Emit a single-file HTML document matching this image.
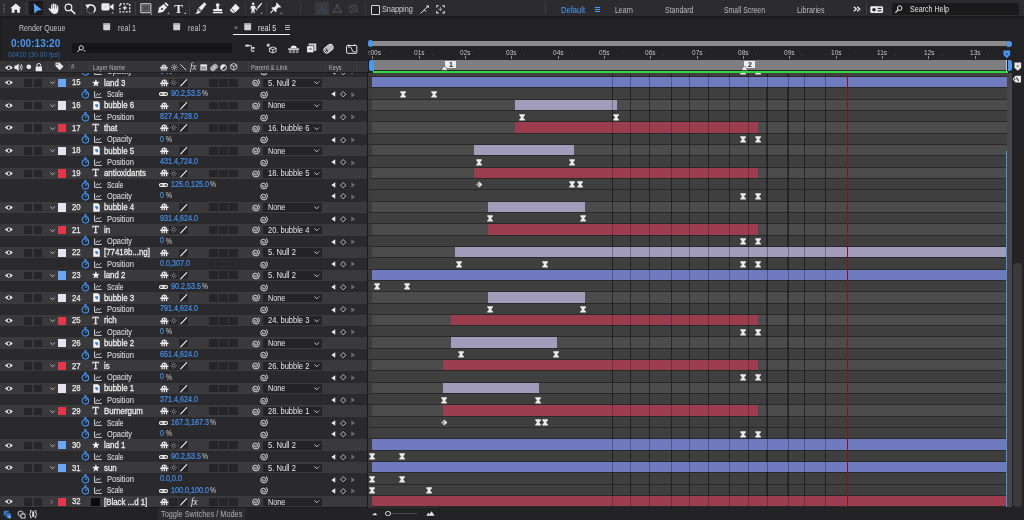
<!DOCTYPE html>
<html><head><meta charset="utf-8"><title>AE</title>
<style>
html,body{margin:0;padding:0;}
body{width:1024px;height:520px;overflow:hidden;background:#232325;position:relative;font-family:"Liberation Sans",sans-serif;}
#w{position:absolute;left:0;top:0;width:1024px;height:520px;will-change:transform;}
.b{position:absolute;display:block;}
.t{position:absolute;display:block;white-space:nowrap;transform-origin:0 50%;}
svg{overflow:visible}
</style></head><body><div id="w">
<div class="b" style="left:0.00px;top:0.00px;width:1024.00px;height:16.00px;background:#2c2c2e;"></div>
<div class="b" style="left:0.00px;top:15.80px;width:1024.00px;height:2.10px;background:#1b1b1d;"></div>
<div class="b" style="left:0.00px;top:17.90px;width:0.90px;height:490.00px;background:#1d1d1f;"></div>
<div class="b" style="left:2.60px;top:3.50px;width:0.80px;height:0.90px;background:#5a5a5a;"></div>
<div class="b" style="left:4.20px;top:3.50px;width:0.80px;height:0.90px;background:#5a5a5a;"></div>
<div class="b" style="left:2.60px;top:5.50px;width:0.80px;height:0.90px;background:#5a5a5a;"></div>
<div class="b" style="left:4.20px;top:5.50px;width:0.80px;height:0.90px;background:#5a5a5a;"></div>
<div class="b" style="left:2.60px;top:7.50px;width:0.80px;height:0.90px;background:#5a5a5a;"></div>
<div class="b" style="left:4.20px;top:7.50px;width:0.80px;height:0.90px;background:#5a5a5a;"></div>
<div class="b" style="left:2.60px;top:9.50px;width:0.80px;height:0.90px;background:#5a5a5a;"></div>
<div class="b" style="left:4.20px;top:9.50px;width:0.80px;height:0.90px;background:#5a5a5a;"></div>
<div class="b" style="left:2.60px;top:11.50px;width:0.80px;height:0.90px;background:#5a5a5a;"></div>
<div class="b" style="left:4.20px;top:11.50px;width:0.80px;height:0.90px;background:#5a5a5a;"></div>
<div class="b" style="left:25.80px;top:2.00px;width:0.90px;height:12.50px;background:#3c3c3e;"></div>
<div class="b" style="left:80.50px;top:2.00px;width:0.90px;height:12.50px;background:#3c3c3e;"></div>
<div class="b" style="left:134.60px;top:2.00px;width:0.90px;height:12.50px;background:#3c3c3e;"></div>
<div class="b" style="left:189.40px;top:2.00px;width:0.90px;height:12.50px;background:#3c3c3e;"></div>
<div class="b" style="left:244.80px;top:2.00px;width:0.90px;height:12.50px;background:#3c3c3e;"></div>
<div class="b" style="left:266.00px;top:2.00px;width:0.90px;height:12.50px;background:#3c3c3e;"></div>
<div class="b" style="left:300.00px;top:2.00px;width:0.90px;height:12.50px;background:#3c3c3e;"></div>
<div class="b" style="left:365.00px;top:2.00px;width:0.90px;height:12.50px;background:#3c3c3e;"></div>
<div class="b" style="left:545.00px;top:2.00px;width:0.90px;height:12.50px;background:#3c3c3e;"></div>
<div class="b" style="left:866.30px;top:2.00px;width:0.90px;height:12.50px;background:#3c3c3e;"></div>
<svg class="b" style="left:9.70px;top:3.30px" width="11.6" height="10" viewBox="0 0 20 19" preserveAspectRatio="none"><path d="M10 1L19.5 10H17V18.5H12.2V12.8H7.8V18.5H3V10H0.5Z" fill="#ececec"/></svg>
<div class="b" style="left:29.40px;top:1.40px;width:13.80px;height:13.60px;background:#19191b;"></div>
<svg class="b" style="left:32.60px;top:2.70px" width="9.4" height="11" viewBox="0 0 14 15" preserveAspectRatio="none"><path d="M1 0.4L13.6 9.6L7 10.2L2.2 14.6Z" fill="#58a4f8"/></svg>
<svg class="b" style="left:48.00px;top:2.50px" width="10.8" height="11.4" viewBox="0 0 13 15" preserveAspectRatio="none"><rect x="3.7" y="1.8" width="1.8" height="7.4" rx="0.9" fill="#ececec"/><rect x="6" y="0.4" width="1.8" height="8.6" rx="0.9" fill="#ececec"/><rect x="8.3" y="1.2" width="1.8" height="8" rx="0.9" fill="#ececec"/><rect x="10.6" y="3.2" width="1.7" height="6.4" rx="0.85" fill="#ececec"/><path d="M3.7 7.4H12.3V10.6Q11.6 14.6 7.8 14.6Q5.2 14.6 3.9 12.2L0.9 8.4Q0.2 7 1.5 6.6Q2.5 6.5 3.7 8.6Z" fill="#ececec"/></svg>
<svg class="b" style="left:64.00px;top:2.70px" width="11.6" height="11.4" viewBox="0 0 14 14" preserveAspectRatio="none"><circle cx="5.4" cy="5.4" r="4" fill="none" stroke="#ececec" stroke-width="1.5"/><path d="M8.4 8.4L13 13" stroke="#ececec" stroke-width="1.9" stroke-linecap="round"/></svg>
<svg class="b" style="left:85.30px;top:2.50px" width="11.8" height="11.6" viewBox="0 0 14 14" preserveAspectRatio="none"><path d="M2.67 4.90A5 5 0 1 1 10.21 11.23" fill="none" stroke="#ececec" stroke-width="1.9"/><path d="M8.71 12.10A5 5 0 0 1 2.30 5.69" fill="none" stroke="#9a9a9a" stroke-width="1.3" stroke-dasharray="1.2 1.2"/><path d="M0.2 2.2L6 1.4L3.4 7Z" fill="#ececec"/></svg>
<svg class="b" style="left:100.90px;top:2.40px" width="13" height="12.2" viewBox="0 0 15 14.4" preserveAspectRatio="none"><rect x="0.5" y="1.5" width="9.4" height="8.4" rx="1.6" fill="#ececec"/><path d="M9.6 5.7L14.5 1.8V9.6Z" fill="#ececec"/><path d="M2.6 8L7.6 3.4" stroke="#bdbdbd" stroke-width="0.9"/><path d="M12 13.5H14.2V11.3Z" fill="#bbb"/></svg>
<svg class="b" style="left:119.20px;top:3.10px" width="11.6" height="9.8" viewBox="0 0 13 11" preserveAspectRatio="none"><rect x="1" y="1" width="11" height="9" fill="none" stroke="#ececec" stroke-width="1.5" stroke-dasharray="2.2 1.5"/><path d="M6.5 3.2V7.8M4.2 5.5H8.8" stroke="#ececec" stroke-width="1.3"/></svg>
<svg class="b" style="left:140.20px;top:2.80px" width="12.4" height="12.2" viewBox="0 0 14 14.2" preserveAspectRatio="none"><rect x="0.8" y="0.8" width="11.4" height="10.4" rx="1" fill="#4a4a4c" stroke="#b4b4b4" stroke-width="1.5"/><rect x="3.2" y="3.2" width="6.6" height="5.6" fill="none" stroke="#707072" stroke-width="0.9"/><path d="M11.5 13.6H13.6V11.5Z" fill="#bbb"/></svg>
<svg class="b" style="left:157.00px;top:2.10px" width="12.4" height="12.6" viewBox="0 0 14 14.2" preserveAspectRatio="none"><path d="M1 12.4L2.2 6.6L7.6 2.2L11.2 5.8L6.8 11.2Z" fill="#ececec"/><path d="M8.4 1.5L10 0.2L13.2 3.4L11.9 5Z" fill="#ececec"/><circle cx="5.6" cy="8" r="1.1" fill="#2c2c2e"/><path d="M11.5 13.6H13.6V11.5Z" fill="#bbb"/></svg>
<span class="t" style="left:174.30px;top:0.70px;font-size:13px;line-height:15.60px;color:#ececec;transform:scaleX(1.0000);font-weight:700;font-family:'Liberation Serif',serif;">T</span>
<svg class="b" style="left:184.20px;top:12.40px" width="2" height="2" viewBox="0 0 2.2 2.2" preserveAspectRatio="none"><path d="M0 2.2H2.2V0Z" fill="#bbb"/></svg>
<svg class="b" style="left:194.80px;top:2.40px" width="11.6" height="12" viewBox="0 0 14.2 14.2" preserveAspectRatio="none"><path d="M11.6 0.3L13.9 2.6L8 10.4L4.4 6.8Z" fill="#ececec"/><path d="M3.6 7.6L7.2 11.2Q5.8 14 0.4 14Q3.2 11.6 3.6 7.6Z" fill="#ececec"/><circle cx="5" cy="10.4" r="0.8" fill="#2c2c2e"/></svg>
<svg class="b" style="left:211.50px;top:2.90px" width="11.4" height="10.6" viewBox="0 0 14 13" preserveAspectRatio="none"><circle cx="7" cy="2.6" r="2.3" fill="#ececec"/><path d="M6 4H8L8.6 7.4H12.4V10H1.6V7.4H5.4Z" fill="#ececec"/><rect x="1" y="11" width="12" height="1.6" fill="#ececec"/></svg>
<svg class="b" style="left:229.00px;top:2.90px" width="11.2" height="10.6" viewBox="0 0 14 13" preserveAspectRatio="none"><path d="M8.2 0.8L13.4 6L7.4 12H4L0.8 8.6Z" fill="#ececec"/><path d="M2.6 6.6L7.6 11.6" stroke="#2c2c2e" stroke-width="1.1"/></svg>
<svg class="b" style="left:249.70px;top:2.30px" width="12.6" height="12.2" viewBox="0 0 14.4 14" preserveAspectRatio="none"><circle cx="3.6" cy="2" r="1.5" fill="#ececec"/><path d="M1.4 4.2H5.8L6.8 8L5.6 8.4L5 6.4L5.4 13H4.2L3.6 9.4L2.6 13H1.4L2.2 6.4L1.4 8L0.4 7.6Z" fill="#ececec"/><path d="M13 0.8L14 1.8L9.6 7.4L8.2 6Z" fill="#ececec"/><path d="M7.8 6.6L9 7.8Q8.6 9.6 6.4 10Q7.4 8.6 7.8 6.6Z" fill="#ececec"/><path d="M12 13.6H14V11.6Z" fill="#bbb"/></svg>
<svg class="b" style="left:269.90px;top:2.20px" width="12" height="12.4" viewBox="0 0 13.6 14" preserveAspectRatio="none"><path d="M7.6 0.6L12.6 5.6L11.4 6.4L9.8 6L7.4 8.4L7.4 10.8L6.4 11.6L1.6 6.8L2.4 5.8L4.8 5.8L7.2 3.4L6.8 1.8Z" fill="#ececec"/><path d="M3.6 9.2L0.6 12.6" stroke="#ececec" stroke-width="1.2"/><path d="M11.4 13.6H13.4V11.6Z" fill="#bbb"/></svg>
<div class="b" style="left:314.70px;top:1.60px;width:13.90px;height:13.40px;background:#39393c;"></div>
<svg class="b" style="left:316.55px;top:3.60px" width="10.5" height="9.6" viewBox="0 0 14 12.6" preserveAspectRatio="none"><path d="M7 1V7.5L1.4 11.4M7 7.5L12.6 11.4" fill="none" stroke="#2b4f80" stroke-width="1.2"/></svg>
<svg class="b" style="left:331.75px;top:3.60px" width="10.5" height="9.6" viewBox="0 0 14 12.6" preserveAspectRatio="none"><path d="M7 1.2L1.6 10.6H12.4Z" fill="none" stroke="#56565a" stroke-width="1.1"/><circle cx="7" cy="1.6" r="1.2" fill="#56565a"/><circle cx="1.8" cy="10.6" r="1.2" fill="#56565a"/><circle cx="12.2" cy="10.6" r="1.2" fill="#56565a"/><path d="M7 3V7" stroke="#56565a" stroke-width="1"/></svg>
<svg class="b" style="left:347.75px;top:3.60px" width="10.5" height="9.6" viewBox="0 0 14 12.6" preserveAspectRatio="none"><path d="M1.4 2.4L11 1.2L12.6 9.4L3.4 11.4Z M1.4 2.4L12.6 9.4M11 1.2L3.4 11.4" fill="none" stroke="#4c4c50" stroke-width="1.1"/></svg>
<div class="b" style="left:371px;top:5.4px;width:7px;height:7.2px;border:1.1px solid #d8d8d8;border-radius:1px;background:#202022"></div>
<span class="t" style="left:381.60px;top:4.42px;font-size:8.8px;line-height:10.56px;color:#d0d0d0;transform:scaleX(0.8282);">Snapping</span>
<svg class="b" style="left:419.70px;top:4.80px" width="9.4" height="9.2" viewBox="0 0 12.4 12" preserveAspectRatio="none"><path d="M1 11L5.6 6.4L8 8.8M5.6 6.4L10.6 1.6" fill="none" stroke="#ececec" stroke-width="1.3"/><path d="M8 0.6H11.6V4.2Z" fill="#ececec"/></svg>
<svg class="b" style="left:436.10px;top:4.90px" width="9" height="8.6" viewBox="0 0 12 12" preserveAspectRatio="none"><path d="M1 3.6V1H3.6M8.4 1H11V3.6M11 8.4V11H8.4M3.6 11H1V8.4" fill="none" stroke="#ececec" stroke-width="1.4"/><path d="M6 3.4V8.6M3.4 6H8.6" stroke="#ececec" stroke-width="1.2" stroke-dasharray="1.6 1.4"/></svg>
<span class="t" style="left:561.00px;top:4.54px;font-size:8.6px;line-height:10.32px;color:#4a9af5;transform:scaleX(0.8808);">Default</span>
<div class="b" style="left:594.80px;top:7.40px;width:5.40px;height:0.90px;background:#4a9af5;"></div>
<div class="b" style="left:594.80px;top:9.30px;width:5.40px;height:0.90px;background:#4a9af5;"></div>
<div class="b" style="left:594.80px;top:11.20px;width:5.40px;height:0.90px;background:#4a9af5;"></div>
<span class="t" style="left:615.40px;top:4.54px;font-size:8.6px;line-height:10.32px;color:#bcbcbc;transform:scaleX(0.8092);">Learn</span>
<span class="t" style="left:664.80px;top:4.54px;font-size:8.6px;line-height:10.32px;color:#bcbcbc;transform:scaleX(0.8136);">Standard</span>
<span class="t" style="left:724.00px;top:4.54px;font-size:8.6px;line-height:10.32px;color:#bcbcbc;transform:scaleX(0.8017);">Small Screen</span>
<span class="t" style="left:797.20px;top:4.54px;font-size:8.6px;line-height:10.32px;color:#bcbcbc;transform:scaleX(0.8368);">Libraries</span>
<svg class="b" style="left:852.60px;top:5.60px" width="7.6" height="6" viewBox="0 0 9 8" preserveAspectRatio="none"><path d="M1 1L4 4L1 7M5 1L8 4L5 7" fill="none" stroke="#ececec" stroke-width="1.5"/></svg>
<svg class="b" style="left:869.90px;top:5.50px" width="13.4" height="7.4" viewBox="0 0 14 8" preserveAspectRatio="none"><rect x="0.3" y="0.3" width="13.4" height="7.4" rx="1.4" fill="#ececec"/><circle cx="4.2" cy="4" r="1.9" fill="#2c2c2e"/><rect x="8" y="2" width="4" height="1.3" fill="#2c2c2e"/><rect x="8" y="4.6" width="4" height="1.3" fill="#2c2c2e"/></svg>
<div class="b" style="left:891.70px;top:3.00px;width:127.80px;height:11.80px;background:#1a1a1b;border-radius:2px;"></div>
<svg class="b" style="left:895.00px;top:5.30px" width="7.6" height="8.2" viewBox="0 0 10.4 11" preserveAspectRatio="none"><circle cx="6.4" cy="4.2" r="3.1" fill="none" stroke="#ececec" stroke-width="1.3"/><path d="M4.2 6.6L1 10" stroke="#ececec" stroke-width="1.5" stroke-linecap="round"/></svg>
<span class="t" style="left:910.20px;top:4.42px;font-size:8.8px;line-height:10.56px;color:#e4e4e4;transform:scaleX(0.8053);">Search Help</span>
<span class="t" style="left:19.40px;top:23.12px;font-size:8.8px;line-height:10.56px;color:#c2c2c2;transform:scaleX(0.8037);">Render Queue</span>
<svg class="b" style="left:102.90px;top:22.80px;" width="7.4" height="7.4" viewBox="0 0 14 14"><rect x="0.5" y="0.5" width="13" height="13" rx="1" fill="#d0d0d0"/><rect x="0.5" y="0.5" width="13" height="2.6" fill="#a0a0a0"/></svg>
<span class="t" style="left:118.00px;top:23.12px;font-size:8.8px;line-height:10.56px;color:#c2c2c2;transform:scaleX(0.8177);">real 1</span>
<svg class="b" style="left:173.10px;top:22.80px;" width="7.4" height="7.4" viewBox="0 0 14 14"><rect x="0.5" y="0.5" width="13" height="13" rx="1" fill="#d0d0d0"/><rect x="0.5" y="0.5" width="13" height="2.6" fill="#a0a0a0"/></svg>
<span class="t" style="left:187.80px;top:23.12px;font-size:8.8px;line-height:10.56px;color:#c2c2c2;transform:scaleX(0.8268);">real 3</span>
<svg class="b" style="left:243.60px;top:22.80px;" width="7.4" height="7.4" viewBox="0 0 14 14"><rect x="0.5" y="0.5" width="13" height="13" rx="1" fill="#d0d0d0"/><rect x="0.5" y="0.5" width="13" height="2.6" fill="#a0a0a0"/></svg>
<span class="t" style="left:258.30px;top:23.12px;font-size:8.8px;line-height:10.56px;color:#e0e0e0;transform:scaleX(0.8313);">real 5</span>
<span class="t" style="left:233.60px;top:23.20px;font-size:8px;line-height:9.60px;color:#a4a4a4;transform:scaleX(1.0000);">×</span>
<div class="b" style="left:284.60px;top:25.00px;width:5.60px;height:1.00px;background:#b0b0b0;"></div>
<div class="b" style="left:284.60px;top:27.00px;width:5.60px;height:1.00px;background:#b0b0b0;"></div>
<div class="b" style="left:284.60px;top:29.00px;width:5.60px;height:1.00px;background:#b0b0b0;"></div>
<div class="b" style="left:233.30px;top:33.70px;width:57.00px;height:1.10px;background:#f0f0f0;"></div>
<span class="t" style="left:10.60px;top:37.78px;font-size:10.2px;line-height:12.24px;color:#4a97f0;transform:scaleX(0.9899);font-weight:700;">0:00:13:20</span>
<span class="t" style="left:8.00px;top:50.34px;font-size:7.6px;line-height:9.12px;color:#2f6db8;transform:scaleX(0.8728);">00410 (30.00 fps)</span>
<div class="b" style="left:72.00px;top:42.60px;width:159.60px;height:10.90px;background:#161617;"></div>
<svg class="b" style="left:76.60px;top:44.90px" width="9.2" height="7.4" viewBox="0 0 13 10.4" preserveAspectRatio="none"><circle cx="6" cy="4" r="3" fill="none" stroke="#ececec" stroke-width="1.3"/><path d="M3.8 6.2L1 9.4" stroke="#ececec" stroke-width="1.4" stroke-linecap="round"/><path d="M8.6 7.6H12.4L10.5 9.6Z" fill="#ececec"/></svg>
<svg class="b" style="left:244.50px;top:44.10px" width="10.2" height="8.6" viewBox="0 0 14.4 12" preserveAspectRatio="none"><rect x="0.5" y="1" width="5" height="2.6" fill="#ececec"/><path d="M5.5 2.3H9V10M9 5.6H11.6M9 10H11.6" fill="none" stroke="#ececec" stroke-width="1.2"/><rect x="10.6" y="4.2" width="2.8" height="2.6" fill="#ececec"/><path d="M10.6 9H13.8L12.2 11.6Z" fill="#ececec"/></svg>
<svg class="b" style="left:266.10px;top:43.20px" width="10.6" height="10.4" viewBox="0 0 14 14.2" preserveAspectRatio="none"><path d="M3 0.6V5.4M0.6 3H5.4M1.3 1.3L4.7 4.7M1.3 4.7L4.7 1.3" stroke="#ececec" stroke-width="1"/><path d="M9 5.4L13.4 7.2V11.6L9 13.6L4.6 11.6V7.2Z M4.6 7.2L9 9.2L13.4 7.2M9 9.2V13.6" fill="none" stroke="#ececec" stroke-width="1.2"/></svg>
<svg class="b" style="left:288.30px;top:43.90px" width="11.4" height="9.4" viewBox="0 0 14 11.6" preserveAspectRatio="none"><path d="M3 5A4.2 4.4 0 0 1 11 5Z" fill="#ececec"/><rect x="0.3" y="5.4" width="13.4" height="1.8" fill="#ececec"/><rect x="1" y="7.6" width="3.4" height="3.6" fill="#8a8a8a"/><rect x="5.3" y="7.6" width="3.4" height="3.6" fill="#8a8a8a"/><rect x="9.6" y="7.6" width="3.4" height="3.6" fill="#8a8a8a"/></svg>
<svg class="b" style="left:305.90px;top:43.40px" width="10.6" height="10.4" viewBox="0 0 13.6 13.2" preserveAspectRatio="none"><rect x="3.4" y="0.6" width="9.8" height="9.4" fill="#cfcfcf"/><rect x="0.6" y="3.2" width="9.8" height="9.4" fill="#2c2c2e"/><rect x="1.4" y="4" width="8.2" height="7.8" fill="#ececec"/><rect x="3.6" y="6.6" width="4" height="2" fill="#8a8a8a"/></svg>
<svg class="b" style="left:323.30px;top:43.80px" width="11" height="9.6" viewBox="0 0 14 12" preserveAspectRatio="none"><g transform="rotate(-38 7 6)"><rect x="0.6" y="2.4" width="12.8" height="7.2" rx="3.6" fill="none" stroke="#ececec" stroke-width="1.2"/><rect x="2.6" y="2.4" width="9.6" height="7.2" rx="3.6" fill="none" stroke="#ececec" stroke-width="1"/><rect x="4.8" y="2.4" width="7" height="7.2" rx="3.4" fill="#bdbdbd"/></g></svg>
<svg class="b" style="left:345.70px;top:43.70px" width="11.4" height="9.8" viewBox="0 0 14 12" preserveAspectRatio="none"><rect x="0.7" y="1.8" width="12.6" height="9.6" rx="1" fill="none" stroke="#ececec" stroke-width="1.2"/><path d="M2.2 3.6H5Q6.6 3.6 7.2 6.6Q7.8 9.6 9.6 9.6H12" fill="none" stroke="#ececec" stroke-width="1.1"/><path d="M3.4 0.4V1.8M10.6 0.4V1.8" stroke="#ececec" stroke-width="1.1"/></svg>
<div class="b" style="left:0.00px;top:66.00px;width:366.50px;height:11.00px;background:#2a2a2c;"></div>
<svg class="b" style="left:81.30px;top:66.38px;" width="8.8" height="9.9" viewBox="0 0 16 18"><circle cx="8" cy="10.6" r="5.9" fill="none" stroke="#3f8cec" stroke-width="2.2"/><path d="M5.4 1.7H10.6M8 1.7V4.6M8 10.6L11.2 7" stroke="#3f8cec" stroke-width="2.1" fill="none"/></svg>
<svg class="b" style="left:93.70px;top:68.13px;" width="8" height="7.2" viewBox="0 0 16 14"><path d="M1.2 0.5V12.6H15.5" fill="none" stroke="#d2d2d2" stroke-width="2"/><path d="M3.8 9.6L7 4.8L9.6 8.2L14 3.6" fill="none" stroke="#d2d2d2" stroke-width="1.7"/></svg>
<span class="t" style="left:106.60px;top:66.47px;font-size:9.1px;line-height:10.92px;color:#d2d2d2;transform:scaleX(0.8104);-webkit-text-stroke:0.15px #d2d2d2;">Opacity</span>
<span class="t" style="left:160.00px;top:65.57px;font-size:9.1px;line-height:10.92px;color:#458fec;transform:scaleX(0.7920);-webkit-text-stroke:0.22px #458fec;">0</span>
<span class="t" style="left:166.21px;top:65.83px;font-size:9px;line-height:10.80px;color:#d0d0d0;transform:scaleX(0.7500);">%</span>
<svg class="b" style="left:259.20px;top:67.33px;" width="9.2" height="9.2" viewBox="0 0 16 16"><path d="M6.96 7.40 L6.72 7.63 L6.54 7.95 L6.45 8.33 L6.46 8.75 L6.58 9.19 L6.84 9.60 L7.21 9.95 L7.69 10.21 L8.24 10.35 L8.85 10.35 L9.46 10.18 L10.04 9.85 L10.54 9.36 L10.92 8.74 L11.14 8.01 L11.18 7.22 L11.01 6.41 L10.63 5.64 L10.06 4.97 L9.31 4.44 L8.42 4.10 L7.45 3.99 L6.45 4.12 L5.48 4.50 L4.61 5.13 L3.90 5.98 L3.41 7.00 L3.17 8.15 L3.23 9.34 L3.58 10.52 L4.23 11.60 L5.14 12.52 L6.28 13.20 L7.58 13.59 L8.96 13.65 L10.35 13.37 L11.66 12.74 L12.80 11.80 L13.70 10.58 L14.28 9.15 L14.50 7.59 L14.33 5.99 L13.77 4.45 L12.83 3.07" fill="none" stroke="#cdcdcd" stroke-width="1.75" stroke-linecap="round" stroke-linejoin="round"/></svg>
<svg class="b" style="left:330.50px;top:68.83px;" width="4.6" height="6" viewBox="0 0 8 10"><path d="M7.4 0.4V9.6L0.6 5Z" fill="#ececec"/></svg>
<svg class="b" style="left:339.90px;top:68.62px;" width="6.4" height="6.4" viewBox="0 0 12 12"><path d="M6 1L11 6L6 11L1 6Z" fill="none" stroke="#d6d6d6" stroke-width="1.5"/></svg>
<svg class="b" style="left:351.40px;top:68.92px;" width="4.4" height="5.8" viewBox="0 0 8 10"><path d="M0.6 0.4V9.6L7.4 5Z" fill="#6a6a6a"/></svg>
<div class="b" style="left:0.00px;top:77.00px;width:366.50px;height:11.00px;background:#3a3a3c;"></div>
<svg class="b" style="left:4.60px;top:80.15px;" width="7.8" height="5.2" viewBox="0 0 16 10"><path d="M0 5 Q8 -3.5 16 5 Q8 13.5 0 5Z" fill="#f2f2f2"/><circle cx="8" cy="5" r="2.7" fill="#2a2a2c"/></svg>
<div class="b" style="left:24.00px;top:79.10px;width:8.30px;height:7.60px;background:#262628;"></div>
<div class="b" style="left:34.00px;top:79.10px;width:8.30px;height:7.60px;background:#262628;"></div>
<svg class="b" style="left:50.20px;top:81.35px;" width="5.2" height="3.4" viewBox="0 0 10 6"><path d="M0.8 0.8L5 5L9.2 0.8" fill="none" stroke="#c6c6c6" stroke-width="1.8"/></svg>
<div class="b" style="left:57.80px;top:78.70px;width:8.40px;height:8.30px;background:#6aa5f7;"></div>
<span class="t" style="left:71.59px;top:77.45px;font-size:9px;line-height:10.80px;color:#ececec;transform:scaleX(0.8600);-webkit-text-stroke:0.25px #ececec;">15</span>
<svg class="b" style="left:91.80px;top:78.75px;" width="7.8" height="7.8" viewBox="0 0 20 20"><path d="M10 0.8L12.7 7.2L19.6 7.7L14.3 12.2L16 19L10 15.3L4 19L5.7 12.2L0.4 7.7L7.3 7.2Z" fill="#f2f2f2"/></svg>
<span class="t" style="left:104.00px;top:77.59px;font-size:9.1px;line-height:10.92px;color:#eeeeee;transform:scaleX(0.8650);-webkit-text-stroke:0.28px #eee;">land 3</span>
<svg class="b" style="left:159.80px;top:78.85px;" width="8.6" height="7.8" viewBox="0 0 16 14"><path d="M2.8 6.6 A5.2 5.8 0 0 1 13.2 6.6Z" fill="#f0f0f0"/><rect x="0.3" y="6.4" width="15.4" height="2.6" fill="#f0f0f0"/><rect x="2.6" y="8.6" width="2.4" height="4.6" fill="#e8e8e8"/><rect x="6.8" y="8.6" width="2.4" height="4.6" fill="#e8e8e8"/><rect x="11" y="8.6" width="2.4" height="4.6" fill="#e8e8e8"/><rect x="5.6" y="3" width="1.6" height="2.4" fill="#3a3a3c"/><rect x="8.8" y="3" width="1.6" height="2.4" fill="#3a3a3c"/></svg>
<div class="b" style="left:169.20px;top:78.90px;width:8.60px;height:7.80px;background:#262628;"></div>
<svg class="b" style="left:170.00px;top:79.15px;" width="7.2" height="7.2" viewBox="0 0 14 14"><circle cx="7" cy="7" r="2.7" fill="none" stroke="#808082" stroke-width="1.9"/><g stroke="#808082" stroke-width="1.5"><path d="M7 0.5V3M7 11V13.5M0.5 7H3M11 7H13.5M2.4 2.4L4.2 4.2M9.8 9.8L11.6 11.6M2.4 11.6L4.2 9.8M9.8 4.2L11.6 2.4"/></g></svg>
<div class="b" style="left:179.40px;top:78.90px;width:8.80px;height:7.80px;background:#262628;"></div>
<svg class="b" style="left:180.20px;top:79.05px;" width="7.4" height="7.4" viewBox="0 0 10 10"><path d="M1 9.2L9 0.8" stroke="#f0f0f0" stroke-width="1.5" stroke-linecap="round"/></svg>
<div class="b" style="left:209.30px;top:78.90px;width:8.50px;height:7.80px;background:#262628;"></div>
<div class="b" style="left:219.30px;top:78.90px;width:8.50px;height:7.80px;background:#262628;"></div>
<div class="b" style="left:229.30px;top:78.90px;width:8.50px;height:7.80px;background:#262628;"></div>
<svg class="b" style="left:250.60px;top:78.25px;" width="9.2" height="9.2" viewBox="0 0 16 16"><path d="M6.96 7.40 L6.72 7.63 L6.54 7.95 L6.45 8.33 L6.46 8.75 L6.58 9.19 L6.84 9.60 L7.21 9.95 L7.69 10.21 L8.24 10.35 L8.85 10.35 L9.46 10.18 L10.04 9.85 L10.54 9.36 L10.92 8.74 L11.14 8.01 L11.18 7.22 L11.01 6.41 L10.63 5.64 L10.06 4.97 L9.31 4.44 L8.42 4.10 L7.45 3.99 L6.45 4.12 L5.48 4.50 L4.61 5.13 L3.90 5.98 L3.41 7.00 L3.17 8.15 L3.23 9.34 L3.58 10.52 L4.23 11.60 L5.14 12.52 L6.28 13.20 L7.58 13.59 L8.96 13.65 L10.35 13.37 L11.66 12.74 L12.80 11.80 L13.70 10.58 L14.28 9.15 L14.50 7.59 L14.33 5.99 L13.77 4.45 L12.83 3.07" fill="none" stroke="#cdcdcd" stroke-width="1.75" stroke-linecap="round" stroke-linejoin="round"/></svg>
<div class="b" style="left:263.00px;top:78.60px;width:59.30px;height:8.50px;background:#242426;"></div>
<span class="t" style="left:267.80px;top:77.55px;font-size:9px;line-height:10.80px;color:#e8e8e8;transform:scaleX(0.8450);">5. Null 2</span>
<svg class="b" style="left:313.90px;top:81.25px;" width="5.4" height="3.4" viewBox="0 0 10 6"><path d="M0.8 0.8L5 5L9.2 0.8" fill="none" stroke="#c6c6c6" stroke-width="1.8"/></svg>
<div class="b" style="left:0.00px;top:88.00px;width:366.50px;height:12.00px;background:#2a2a2c;"></div>
<svg class="b" style="left:81.30px;top:89.03px;" width="8.8" height="9.9" viewBox="0 0 16 18"><circle cx="8" cy="10.6" r="5.9" fill="none" stroke="#3f8cec" stroke-width="2.2"/><path d="M5.4 1.7H10.6M8 1.7V4.6M8 10.6L11.2 7" stroke="#3f8cec" stroke-width="2.1" fill="none"/></svg>
<svg class="b" style="left:93.70px;top:90.78px;" width="8" height="7.2" viewBox="0 0 16 14"><path d="M1.2 0.5V12.6H15.5" fill="none" stroke="#d2d2d2" stroke-width="2"/><path d="M3.8 9.6L7 4.8L9.6 8.2L14 3.6" fill="none" stroke="#d2d2d2" stroke-width="1.7"/></svg>
<span class="t" style="left:106.60px;top:89.12px;font-size:9.1px;line-height:10.92px;color:#d2d2d2;transform:scaleX(0.7204);-webkit-text-stroke:0.15px #d2d2d2;">Scale</span>
<svg class="b" style="left:159.00px;top:92.18px;" width="9" height="4" viewBox="0 0 18 8"><rect x="1" y="1.2" width="9.5" height="5.6" rx="2.8" fill="none" stroke="#ececec" stroke-width="2.2"/><rect x="7.5" y="1.2" width="9.5" height="5.6" rx="2.8" fill="none" stroke="#ececec" stroke-width="2.2"/></svg>
<span class="t" style="left:170.50px;top:88.22px;font-size:9.1px;line-height:10.92px;color:#458fec;transform:scaleX(0.7920);-webkit-text-stroke:0.22px #458fec;">90.2,53.5</span>
<span class="t" style="left:201.76px;top:88.48px;font-size:9px;line-height:10.80px;color:#d0d0d0;transform:scaleX(0.7500);">%</span>
<svg class="b" style="left:259.20px;top:89.98px;" width="9.2" height="9.2" viewBox="0 0 16 16"><path d="M6.96 7.40 L6.72 7.63 L6.54 7.95 L6.45 8.33 L6.46 8.75 L6.58 9.19 L6.84 9.60 L7.21 9.95 L7.69 10.21 L8.24 10.35 L8.85 10.35 L9.46 10.18 L10.04 9.85 L10.54 9.36 L10.92 8.74 L11.14 8.01 L11.18 7.22 L11.01 6.41 L10.63 5.64 L10.06 4.97 L9.31 4.44 L8.42 4.10 L7.45 3.99 L6.45 4.12 L5.48 4.50 L4.61 5.13 L3.90 5.98 L3.41 7.00 L3.17 8.15 L3.23 9.34 L3.58 10.52 L4.23 11.60 L5.14 12.52 L6.28 13.20 L7.58 13.59 L8.96 13.65 L10.35 13.37 L11.66 12.74 L12.80 11.80 L13.70 10.58 L14.28 9.15 L14.50 7.59 L14.33 5.99 L13.77 4.45 L12.83 3.07" fill="none" stroke="#cdcdcd" stroke-width="1.75" stroke-linecap="round" stroke-linejoin="round"/></svg>
<svg class="b" style="left:330.50px;top:91.48px;" width="4.6" height="6" viewBox="0 0 8 10"><path d="M7.4 0.4V9.6L0.6 5Z" fill="#ececec"/></svg>
<svg class="b" style="left:339.90px;top:91.28px;" width="6.4" height="6.4" viewBox="0 0 12 12"><path d="M6 1L11 6L6 11L1 6Z" fill="none" stroke="#d6d6d6" stroke-width="1.5"/></svg>
<svg class="b" style="left:351.40px;top:91.58px;" width="4.4" height="5.8" viewBox="0 0 8 10"><path d="M0.6 0.4V9.6L7.4 5Z" fill="#6a6a6a"/></svg>
<div class="b" style="left:0.00px;top:100.00px;width:366.50px;height:11.00px;background:#3a3a3c;"></div>
<svg class="b" style="left:4.60px;top:102.80px;" width="7.8" height="5.2" viewBox="0 0 16 10"><path d="M0 5 Q8 -3.5 16 5 Q8 13.5 0 5Z" fill="#f2f2f2"/><circle cx="8" cy="5" r="2.7" fill="#2a2a2c"/></svg>
<div class="b" style="left:24.00px;top:101.75px;width:8.30px;height:7.60px;background:#262628;"></div>
<div class="b" style="left:34.00px;top:101.75px;width:8.30px;height:7.60px;background:#262628;"></div>
<svg class="b" style="left:50.20px;top:104.00px;" width="5.2" height="3.4" viewBox="0 0 10 6"><path d="M0.8 0.8L5 5L9.2 0.8" fill="none" stroke="#c6c6c6" stroke-width="1.8"/></svg>
<div class="b" style="left:57.80px;top:101.35px;width:8.40px;height:8.30px;background:#e6e3ee;"></div>
<span class="t" style="left:71.59px;top:100.10px;font-size:9px;line-height:10.80px;color:#ececec;transform:scaleX(0.8600);-webkit-text-stroke:0.25px #ececec;">16</span>
<svg class="b" style="left:92.70px;top:100.80px;" width="7" height="9.2" viewBox="0 0 14 18"><path d="M0.5 0.5H10L13.5 4V17.5H0.5Z" fill="#f4f4f6"/><path d="M4.2 6.2H10.2V9.6Q10.2 12.6 7.2 13.2V11.2Q4.2 11 4.2 8.4Z" fill="#2f7de0"/></svg>
<span class="t" style="left:104.00px;top:100.24px;font-size:9.1px;line-height:10.92px;color:#eeeeee;transform:scaleX(0.8650);-webkit-text-stroke:0.28px #eee;">bubble 6</span>
<svg class="b" style="left:159.80px;top:101.50px;" width="8.6" height="7.8" viewBox="0 0 16 14"><path d="M2.8 6.6 A5.2 5.8 0 0 1 13.2 6.6Z" fill="#f0f0f0"/><rect x="0.3" y="6.4" width="15.4" height="2.6" fill="#f0f0f0"/><rect x="2.6" y="8.6" width="2.4" height="4.6" fill="#e8e8e8"/><rect x="6.8" y="8.6" width="2.4" height="4.6" fill="#e8e8e8"/><rect x="11" y="8.6" width="2.4" height="4.6" fill="#e8e8e8"/><rect x="5.6" y="3" width="1.6" height="2.4" fill="#3a3a3c"/><rect x="8.8" y="3" width="1.6" height="2.4" fill="#3a3a3c"/></svg>
<div class="b" style="left:179.40px;top:101.55px;width:8.80px;height:7.80px;background:#262628;"></div>
<svg class="b" style="left:180.20px;top:101.70px;" width="7.4" height="7.4" viewBox="0 0 10 10"><path d="M1 9.2L9 0.8" stroke="#f0f0f0" stroke-width="1.5" stroke-linecap="round"/></svg>
<div class="b" style="left:209.30px;top:101.55px;width:8.50px;height:7.80px;background:#262628;"></div>
<div class="b" style="left:219.30px;top:101.55px;width:8.50px;height:7.80px;background:#262628;"></div>
<div class="b" style="left:229.30px;top:101.55px;width:8.50px;height:7.80px;background:#262628;"></div>
<svg class="b" style="left:250.60px;top:100.90px;" width="9.2" height="9.2" viewBox="0 0 16 16"><path d="M6.96 7.40 L6.72 7.63 L6.54 7.95 L6.45 8.33 L6.46 8.75 L6.58 9.19 L6.84 9.60 L7.21 9.95 L7.69 10.21 L8.24 10.35 L8.85 10.35 L9.46 10.18 L10.04 9.85 L10.54 9.36 L10.92 8.74 L11.14 8.01 L11.18 7.22 L11.01 6.41 L10.63 5.64 L10.06 4.97 L9.31 4.44 L8.42 4.10 L7.45 3.99 L6.45 4.12 L5.48 4.50 L4.61 5.13 L3.90 5.98 L3.41 7.00 L3.17 8.15 L3.23 9.34 L3.58 10.52 L4.23 11.60 L5.14 12.52 L6.28 13.20 L7.58 13.59 L8.96 13.65 L10.35 13.37 L11.66 12.74 L12.80 11.80 L13.70 10.58 L14.28 9.15 L14.50 7.59 L14.33 5.99 L13.77 4.45 L12.83 3.07" fill="none" stroke="#cdcdcd" stroke-width="1.75" stroke-linecap="round" stroke-linejoin="round"/></svg>
<div class="b" style="left:263.00px;top:101.25px;width:59.30px;height:8.50px;background:#242426;"></div>
<span class="t" style="left:267.80px;top:100.20px;font-size:9px;line-height:10.80px;color:#e8e8e8;transform:scaleX(0.8040);">None</span>
<svg class="b" style="left:313.90px;top:103.90px;" width="5.4" height="3.4" viewBox="0 0 10 6"><path d="M0.8 0.8L5 5L9.2 0.8" fill="none" stroke="#c6c6c6" stroke-width="1.8"/></svg>
<div class="b" style="left:0.00px;top:111.00px;width:366.50px;height:11.00px;background:#2a2a2c;"></div>
<svg class="b" style="left:81.30px;top:111.67px;" width="8.8" height="9.9" viewBox="0 0 16 18"><circle cx="8" cy="10.6" r="5.9" fill="none" stroke="#3f8cec" stroke-width="2.2"/><path d="M5.4 1.7H10.6M8 1.7V4.6M8 10.6L11.2 7" stroke="#3f8cec" stroke-width="2.1" fill="none"/></svg>
<svg class="b" style="left:93.70px;top:113.43px;" width="8" height="7.2" viewBox="0 0 16 14"><path d="M1.2 0.5V12.6H15.5" fill="none" stroke="#d2d2d2" stroke-width="2"/><path d="M3.8 9.6L7 4.8L9.6 8.2L14 3.6" fill="none" stroke="#d2d2d2" stroke-width="1.7"/></svg>
<span class="t" style="left:106.60px;top:111.77px;font-size:9.1px;line-height:10.92px;color:#d2d2d2;transform:scaleX(0.8340);-webkit-text-stroke:0.15px #d2d2d2;">Position</span>
<span class="t" style="left:160.00px;top:110.87px;font-size:9.1px;line-height:10.92px;color:#458fec;transform:scaleX(0.7920);-webkit-text-stroke:0.22px #458fec;">827.4,728.0</span>
<svg class="b" style="left:259.20px;top:112.62px;" width="9.2" height="9.2" viewBox="0 0 16 16"><path d="M6.96 7.40 L6.72 7.63 L6.54 7.95 L6.45 8.33 L6.46 8.75 L6.58 9.19 L6.84 9.60 L7.21 9.95 L7.69 10.21 L8.24 10.35 L8.85 10.35 L9.46 10.18 L10.04 9.85 L10.54 9.36 L10.92 8.74 L11.14 8.01 L11.18 7.22 L11.01 6.41 L10.63 5.64 L10.06 4.97 L9.31 4.44 L8.42 4.10 L7.45 3.99 L6.45 4.12 L5.48 4.50 L4.61 5.13 L3.90 5.98 L3.41 7.00 L3.17 8.15 L3.23 9.34 L3.58 10.52 L4.23 11.60 L5.14 12.52 L6.28 13.20 L7.58 13.59 L8.96 13.65 L10.35 13.37 L11.66 12.74 L12.80 11.80 L13.70 10.58 L14.28 9.15 L14.50 7.59 L14.33 5.99 L13.77 4.45 L12.83 3.07" fill="none" stroke="#cdcdcd" stroke-width="1.75" stroke-linecap="round" stroke-linejoin="round"/></svg>
<svg class="b" style="left:330.50px;top:114.12px;" width="4.6" height="6" viewBox="0 0 8 10"><path d="M7.4 0.4V9.6L0.6 5Z" fill="#ececec"/></svg>
<svg class="b" style="left:339.90px;top:113.92px;" width="6.4" height="6.4" viewBox="0 0 12 12"><path d="M6 1L11 6L6 11L1 6Z" fill="none" stroke="#d6d6d6" stroke-width="1.5"/></svg>
<svg class="b" style="left:351.40px;top:114.22px;" width="4.4" height="5.8" viewBox="0 0 8 10"><path d="M0.6 0.4V9.6L7.4 5Z" fill="#6a6a6a"/></svg>
<div class="b" style="left:0.00px;top:122.00px;width:366.50px;height:12.00px;background:#3a3a3c;"></div>
<svg class="b" style="left:4.60px;top:125.45px;" width="7.8" height="5.2" viewBox="0 0 16 10"><path d="M0 5 Q8 -3.5 16 5 Q8 13.5 0 5Z" fill="#f2f2f2"/><circle cx="8" cy="5" r="2.7" fill="#2a2a2c"/></svg>
<div class="b" style="left:24.00px;top:124.40px;width:8.30px;height:7.60px;background:#262628;"></div>
<div class="b" style="left:34.00px;top:124.40px;width:8.30px;height:7.60px;background:#262628;"></div>
<svg class="b" style="left:50.20px;top:126.65px;" width="5.2" height="3.4" viewBox="0 0 10 6"><path d="M0.8 0.8L5 5L9.2 0.8" fill="none" stroke="#c6c6c6" stroke-width="1.8"/></svg>
<div class="b" style="left:57.80px;top:124.00px;width:8.40px;height:8.30px;background:#e2364b;"></div>
<span class="t" style="left:71.59px;top:122.75px;font-size:9px;line-height:10.80px;color:#ececec;transform:scaleX(0.8600);-webkit-text-stroke:0.25px #ececec;">17</span>
<span class="t" style="left:92.50px;top:122.13px;font-size:10.2px;line-height:12.24px;color:#ececec;transform:scaleX(1.0000);font-family:'Liberation Serif',serif;-webkit-text-stroke:0.3px #ececec;">T</span>
<span class="t" style="left:104.00px;top:122.89px;font-size:9.1px;line-height:10.92px;color:#eeeeee;transform:scaleX(0.8650);-webkit-text-stroke:0.28px #eee;">that</span>
<svg class="b" style="left:159.80px;top:124.15px;" width="8.6" height="7.8" viewBox="0 0 16 14"><path d="M2.8 6.6 A5.2 5.8 0 0 1 13.2 6.6Z" fill="#f0f0f0"/><rect x="0.3" y="6.4" width="15.4" height="2.6" fill="#f0f0f0"/><rect x="2.6" y="8.6" width="2.4" height="4.6" fill="#e8e8e8"/><rect x="6.8" y="8.6" width="2.4" height="4.6" fill="#e8e8e8"/><rect x="11" y="8.6" width="2.4" height="4.6" fill="#e8e8e8"/><rect x="5.6" y="3" width="1.6" height="2.4" fill="#3a3a3c"/><rect x="8.8" y="3" width="1.6" height="2.4" fill="#3a3a3c"/></svg>
<div class="b" style="left:169.20px;top:124.20px;width:8.60px;height:7.80px;background:#262628;"></div>
<svg class="b" style="left:170.00px;top:124.45px;" width="7.2" height="7.2" viewBox="0 0 14 14"><circle cx="7" cy="7" r="2.7" fill="none" stroke="#808082" stroke-width="1.9"/><g stroke="#808082" stroke-width="1.5"><path d="M7 0.5V3M7 11V13.5M0.5 7H3M11 7H13.5M2.4 2.4L4.2 4.2M9.8 9.8L11.6 11.6M2.4 11.6L4.2 9.8M9.8 4.2L11.6 2.4"/></g></svg>
<div class="b" style="left:179.40px;top:124.20px;width:8.80px;height:7.80px;background:#262628;"></div>
<svg class="b" style="left:180.20px;top:124.35px;" width="7.4" height="7.4" viewBox="0 0 10 10"><path d="M1 9.2L9 0.8" stroke="#f0f0f0" stroke-width="1.5" stroke-linecap="round"/></svg>
<div class="b" style="left:209.30px;top:124.20px;width:8.50px;height:7.80px;background:#262628;"></div>
<div class="b" style="left:219.30px;top:124.20px;width:8.50px;height:7.80px;background:#262628;"></div>
<div class="b" style="left:229.30px;top:124.20px;width:8.50px;height:7.80px;background:#262628;"></div>
<svg class="b" style="left:250.60px;top:123.55px;" width="9.2" height="9.2" viewBox="0 0 16 16"><path d="M6.96 7.40 L6.72 7.63 L6.54 7.95 L6.45 8.33 L6.46 8.75 L6.58 9.19 L6.84 9.60 L7.21 9.95 L7.69 10.21 L8.24 10.35 L8.85 10.35 L9.46 10.18 L10.04 9.85 L10.54 9.36 L10.92 8.74 L11.14 8.01 L11.18 7.22 L11.01 6.41 L10.63 5.64 L10.06 4.97 L9.31 4.44 L8.42 4.10 L7.45 3.99 L6.45 4.12 L5.48 4.50 L4.61 5.13 L3.90 5.98 L3.41 7.00 L3.17 8.15 L3.23 9.34 L3.58 10.52 L4.23 11.60 L5.14 12.52 L6.28 13.20 L7.58 13.59 L8.96 13.65 L10.35 13.37 L11.66 12.74 L12.80 11.80 L13.70 10.58 L14.28 9.15 L14.50 7.59 L14.33 5.99 L13.77 4.45 L12.83 3.07" fill="none" stroke="#cdcdcd" stroke-width="1.75" stroke-linecap="round" stroke-linejoin="round"/></svg>
<div class="b" style="left:263.00px;top:123.90px;width:59.30px;height:8.50px;background:#242426;"></div>
<span class="t" style="left:267.80px;top:122.85px;font-size:9px;line-height:10.80px;color:#e8e8e8;transform:scaleX(0.8336);">16. bubble 6</span>
<svg class="b" style="left:313.90px;top:126.55px;" width="5.4" height="3.4" viewBox="0 0 10 6"><path d="M0.8 0.8L5 5L9.2 0.8" fill="none" stroke="#c6c6c6" stroke-width="1.8"/></svg>
<div class="b" style="left:0.00px;top:134.00px;width:366.50px;height:11.00px;background:#2a2a2c;"></div>
<svg class="b" style="left:81.30px;top:134.33px;" width="8.8" height="9.9" viewBox="0 0 16 18"><circle cx="8" cy="10.6" r="5.9" fill="none" stroke="#3f8cec" stroke-width="2.2"/><path d="M5.4 1.7H10.6M8 1.7V4.6M8 10.6L11.2 7" stroke="#3f8cec" stroke-width="2.1" fill="none"/></svg>
<svg class="b" style="left:93.70px;top:136.08px;" width="8" height="7.2" viewBox="0 0 16 14"><path d="M1.2 0.5V12.6H15.5" fill="none" stroke="#d2d2d2" stroke-width="2"/><path d="M3.8 9.6L7 4.8L9.6 8.2L14 3.6" fill="none" stroke="#d2d2d2" stroke-width="1.7"/></svg>
<span class="t" style="left:106.60px;top:134.41px;font-size:9.1px;line-height:10.92px;color:#d2d2d2;transform:scaleX(0.8104);-webkit-text-stroke:0.15px #d2d2d2;">Opacity</span>
<span class="t" style="left:160.00px;top:133.51px;font-size:9.1px;line-height:10.92px;color:#458fec;transform:scaleX(0.7920);-webkit-text-stroke:0.22px #458fec;">0</span>
<span class="t" style="left:166.21px;top:133.78px;font-size:9px;line-height:10.80px;color:#d0d0d0;transform:scaleX(0.7500);">%</span>
<svg class="b" style="left:259.20px;top:135.28px;" width="9.2" height="9.2" viewBox="0 0 16 16"><path d="M6.96 7.40 L6.72 7.63 L6.54 7.95 L6.45 8.33 L6.46 8.75 L6.58 9.19 L6.84 9.60 L7.21 9.95 L7.69 10.21 L8.24 10.35 L8.85 10.35 L9.46 10.18 L10.04 9.85 L10.54 9.36 L10.92 8.74 L11.14 8.01 L11.18 7.22 L11.01 6.41 L10.63 5.64 L10.06 4.97 L9.31 4.44 L8.42 4.10 L7.45 3.99 L6.45 4.12 L5.48 4.50 L4.61 5.13 L3.90 5.98 L3.41 7.00 L3.17 8.15 L3.23 9.34 L3.58 10.52 L4.23 11.60 L5.14 12.52 L6.28 13.20 L7.58 13.59 L8.96 13.65 L10.35 13.37 L11.66 12.74 L12.80 11.80 L13.70 10.58 L14.28 9.15 L14.50 7.59 L14.33 5.99 L13.77 4.45 L12.83 3.07" fill="none" stroke="#cdcdcd" stroke-width="1.75" stroke-linecap="round" stroke-linejoin="round"/></svg>
<svg class="b" style="left:330.50px;top:136.78px;" width="4.6" height="6" viewBox="0 0 8 10"><path d="M7.4 0.4V9.6L0.6 5Z" fill="#ececec"/></svg>
<svg class="b" style="left:339.90px;top:136.58px;" width="6.4" height="6.4" viewBox="0 0 12 12"><path d="M6 1L11 6L6 11L1 6Z" fill="none" stroke="#d6d6d6" stroke-width="1.5"/></svg>
<svg class="b" style="left:351.40px;top:136.88px;" width="4.4" height="5.8" viewBox="0 0 8 10"><path d="M0.6 0.4V9.6L7.4 5Z" fill="#6a6a6a"/></svg>
<div class="b" style="left:0.00px;top:145.00px;width:366.50px;height:11.00px;background:#3a3a3c;"></div>
<svg class="b" style="left:4.60px;top:148.10px;" width="7.8" height="5.2" viewBox="0 0 16 10"><path d="M0 5 Q8 -3.5 16 5 Q8 13.5 0 5Z" fill="#f2f2f2"/><circle cx="8" cy="5" r="2.7" fill="#2a2a2c"/></svg>
<div class="b" style="left:24.00px;top:147.05px;width:8.30px;height:7.60px;background:#262628;"></div>
<div class="b" style="left:34.00px;top:147.05px;width:8.30px;height:7.60px;background:#262628;"></div>
<svg class="b" style="left:50.20px;top:149.30px;" width="5.2" height="3.4" viewBox="0 0 10 6"><path d="M0.8 0.8L5 5L9.2 0.8" fill="none" stroke="#c6c6c6" stroke-width="1.8"/></svg>
<div class="b" style="left:57.80px;top:146.65px;width:8.40px;height:8.30px;background:#e6e3ee;"></div>
<span class="t" style="left:71.59px;top:145.40px;font-size:9px;line-height:10.80px;color:#ececec;transform:scaleX(0.8600);-webkit-text-stroke:0.25px #ececec;">18</span>
<svg class="b" style="left:92.70px;top:146.10px;" width="7" height="9.2" viewBox="0 0 14 18"><path d="M0.5 0.5H10L13.5 4V17.5H0.5Z" fill="#f4f4f6"/><path d="M4.2 6.2H10.2V9.6Q10.2 12.6 7.2 13.2V11.2Q4.2 11 4.2 8.4Z" fill="#2f7de0"/></svg>
<span class="t" style="left:104.00px;top:145.54px;font-size:9.1px;line-height:10.92px;color:#eeeeee;transform:scaleX(0.8650);-webkit-text-stroke:0.28px #eee;">bubble 5</span>
<svg class="b" style="left:159.80px;top:146.80px;" width="8.6" height="7.8" viewBox="0 0 16 14"><path d="M2.8 6.6 A5.2 5.8 0 0 1 13.2 6.6Z" fill="#f0f0f0"/><rect x="0.3" y="6.4" width="15.4" height="2.6" fill="#f0f0f0"/><rect x="2.6" y="8.6" width="2.4" height="4.6" fill="#e8e8e8"/><rect x="6.8" y="8.6" width="2.4" height="4.6" fill="#e8e8e8"/><rect x="11" y="8.6" width="2.4" height="4.6" fill="#e8e8e8"/><rect x="5.6" y="3" width="1.6" height="2.4" fill="#3a3a3c"/><rect x="8.8" y="3" width="1.6" height="2.4" fill="#3a3a3c"/></svg>
<div class="b" style="left:179.40px;top:146.85px;width:8.80px;height:7.80px;background:#262628;"></div>
<svg class="b" style="left:180.20px;top:147.00px;" width="7.4" height="7.4" viewBox="0 0 10 10"><path d="M1 9.2L9 0.8" stroke="#f0f0f0" stroke-width="1.5" stroke-linecap="round"/></svg>
<div class="b" style="left:209.30px;top:146.85px;width:8.50px;height:7.80px;background:#262628;"></div>
<div class="b" style="left:219.30px;top:146.85px;width:8.50px;height:7.80px;background:#262628;"></div>
<div class="b" style="left:229.30px;top:146.85px;width:8.50px;height:7.80px;background:#262628;"></div>
<svg class="b" style="left:250.60px;top:146.20px;" width="9.2" height="9.2" viewBox="0 0 16 16"><path d="M6.96 7.40 L6.72 7.63 L6.54 7.95 L6.45 8.33 L6.46 8.75 L6.58 9.19 L6.84 9.60 L7.21 9.95 L7.69 10.21 L8.24 10.35 L8.85 10.35 L9.46 10.18 L10.04 9.85 L10.54 9.36 L10.92 8.74 L11.14 8.01 L11.18 7.22 L11.01 6.41 L10.63 5.64 L10.06 4.97 L9.31 4.44 L8.42 4.10 L7.45 3.99 L6.45 4.12 L5.48 4.50 L4.61 5.13 L3.90 5.98 L3.41 7.00 L3.17 8.15 L3.23 9.34 L3.58 10.52 L4.23 11.60 L5.14 12.52 L6.28 13.20 L7.58 13.59 L8.96 13.65 L10.35 13.37 L11.66 12.74 L12.80 11.80 L13.70 10.58 L14.28 9.15 L14.50 7.59 L14.33 5.99 L13.77 4.45 L12.83 3.07" fill="none" stroke="#cdcdcd" stroke-width="1.75" stroke-linecap="round" stroke-linejoin="round"/></svg>
<div class="b" style="left:263.00px;top:146.55px;width:59.30px;height:8.50px;background:#242426;"></div>
<span class="t" style="left:267.80px;top:145.50px;font-size:9px;line-height:10.80px;color:#e8e8e8;transform:scaleX(0.8040);">None</span>
<svg class="b" style="left:313.90px;top:149.20px;" width="5.4" height="3.4" viewBox="0 0 10 6"><path d="M0.8 0.8L5 5L9.2 0.8" fill="none" stroke="#c6c6c6" stroke-width="1.8"/></svg>
<div class="b" style="left:0.00px;top:156.00px;width:366.50px;height:12.00px;background:#2a2a2c;"></div>
<svg class="b" style="left:81.30px;top:156.98px;" width="8.8" height="9.9" viewBox="0 0 16 18"><circle cx="8" cy="10.6" r="5.9" fill="none" stroke="#3f8cec" stroke-width="2.2"/><path d="M5.4 1.7H10.6M8 1.7V4.6M8 10.6L11.2 7" stroke="#3f8cec" stroke-width="2.1" fill="none"/></svg>
<svg class="b" style="left:93.70px;top:158.73px;" width="8" height="7.2" viewBox="0 0 16 14"><path d="M1.2 0.5V12.6H15.5" fill="none" stroke="#d2d2d2" stroke-width="2"/><path d="M3.8 9.6L7 4.8L9.6 8.2L14 3.6" fill="none" stroke="#d2d2d2" stroke-width="1.7"/></svg>
<span class="t" style="left:106.60px;top:157.06px;font-size:9.1px;line-height:10.92px;color:#d2d2d2;transform:scaleX(0.8340);-webkit-text-stroke:0.15px #d2d2d2;">Position</span>
<span class="t" style="left:160.00px;top:156.16px;font-size:9.1px;line-height:10.92px;color:#458fec;transform:scaleX(0.7920);-webkit-text-stroke:0.22px #458fec;">431.4,724.0</span>
<svg class="b" style="left:259.20px;top:157.93px;" width="9.2" height="9.2" viewBox="0 0 16 16"><path d="M6.96 7.40 L6.72 7.63 L6.54 7.95 L6.45 8.33 L6.46 8.75 L6.58 9.19 L6.84 9.60 L7.21 9.95 L7.69 10.21 L8.24 10.35 L8.85 10.35 L9.46 10.18 L10.04 9.85 L10.54 9.36 L10.92 8.74 L11.14 8.01 L11.18 7.22 L11.01 6.41 L10.63 5.64 L10.06 4.97 L9.31 4.44 L8.42 4.10 L7.45 3.99 L6.45 4.12 L5.48 4.50 L4.61 5.13 L3.90 5.98 L3.41 7.00 L3.17 8.15 L3.23 9.34 L3.58 10.52 L4.23 11.60 L5.14 12.52 L6.28 13.20 L7.58 13.59 L8.96 13.65 L10.35 13.37 L11.66 12.74 L12.80 11.80 L13.70 10.58 L14.28 9.15 L14.50 7.59 L14.33 5.99 L13.77 4.45 L12.83 3.07" fill="none" stroke="#cdcdcd" stroke-width="1.75" stroke-linecap="round" stroke-linejoin="round"/></svg>
<svg class="b" style="left:330.50px;top:159.43px;" width="4.6" height="6" viewBox="0 0 8 10"><path d="M7.4 0.4V9.6L0.6 5Z" fill="#ececec"/></svg>
<svg class="b" style="left:339.90px;top:159.23px;" width="6.4" height="6.4" viewBox="0 0 12 12"><path d="M6 1L11 6L6 11L1 6Z" fill="none" stroke="#d6d6d6" stroke-width="1.5"/></svg>
<svg class="b" style="left:351.40px;top:159.53px;" width="4.4" height="5.8" viewBox="0 0 8 10"><path d="M0.6 0.4V9.6L7.4 5Z" fill="#6a6a6a"/></svg>
<div class="b" style="left:0.00px;top:168.00px;width:366.50px;height:11.00px;background:#3a3a3c;"></div>
<svg class="b" style="left:4.60px;top:170.75px;" width="7.8" height="5.2" viewBox="0 0 16 10"><path d="M0 5 Q8 -3.5 16 5 Q8 13.5 0 5Z" fill="#f2f2f2"/><circle cx="8" cy="5" r="2.7" fill="#2a2a2c"/></svg>
<div class="b" style="left:24.00px;top:169.70px;width:8.30px;height:7.60px;background:#262628;"></div>
<div class="b" style="left:34.00px;top:169.70px;width:8.30px;height:7.60px;background:#262628;"></div>
<svg class="b" style="left:50.20px;top:171.95px;" width="5.2" height="3.4" viewBox="0 0 10 6"><path d="M0.8 0.8L5 5L9.2 0.8" fill="none" stroke="#c6c6c6" stroke-width="1.8"/></svg>
<div class="b" style="left:57.80px;top:169.30px;width:8.40px;height:8.30px;background:#e2364b;"></div>
<span class="t" style="left:71.59px;top:168.05px;font-size:9px;line-height:10.80px;color:#ececec;transform:scaleX(0.8600);-webkit-text-stroke:0.25px #ececec;">19</span>
<span class="t" style="left:92.50px;top:167.43px;font-size:10.2px;line-height:12.24px;color:#ececec;transform:scaleX(1.0000);font-family:'Liberation Serif',serif;-webkit-text-stroke:0.3px #ececec;">T</span>
<span class="t" style="left:104.00px;top:168.19px;font-size:9.1px;line-height:10.92px;color:#eeeeee;transform:scaleX(0.8650);-webkit-text-stroke:0.28px #eee;">antioxidants</span>
<svg class="b" style="left:159.80px;top:169.45px;" width="8.6" height="7.8" viewBox="0 0 16 14"><path d="M2.8 6.6 A5.2 5.8 0 0 1 13.2 6.6Z" fill="#f0f0f0"/><rect x="0.3" y="6.4" width="15.4" height="2.6" fill="#f0f0f0"/><rect x="2.6" y="8.6" width="2.4" height="4.6" fill="#e8e8e8"/><rect x="6.8" y="8.6" width="2.4" height="4.6" fill="#e8e8e8"/><rect x="11" y="8.6" width="2.4" height="4.6" fill="#e8e8e8"/><rect x="5.6" y="3" width="1.6" height="2.4" fill="#3a3a3c"/><rect x="8.8" y="3" width="1.6" height="2.4" fill="#3a3a3c"/></svg>
<div class="b" style="left:169.20px;top:169.50px;width:8.60px;height:7.80px;background:#262628;"></div>
<svg class="b" style="left:170.00px;top:169.75px;" width="7.2" height="7.2" viewBox="0 0 14 14"><circle cx="7" cy="7" r="2.7" fill="none" stroke="#808082" stroke-width="1.9"/><g stroke="#808082" stroke-width="1.5"><path d="M7 0.5V3M7 11V13.5M0.5 7H3M11 7H13.5M2.4 2.4L4.2 4.2M9.8 9.8L11.6 11.6M2.4 11.6L4.2 9.8M9.8 4.2L11.6 2.4"/></g></svg>
<div class="b" style="left:179.40px;top:169.50px;width:8.80px;height:7.80px;background:#262628;"></div>
<svg class="b" style="left:180.20px;top:169.65px;" width="7.4" height="7.4" viewBox="0 0 10 10"><path d="M1 9.2L9 0.8" stroke="#f0f0f0" stroke-width="1.5" stroke-linecap="round"/></svg>
<div class="b" style="left:209.30px;top:169.50px;width:8.50px;height:7.80px;background:#262628;"></div>
<div class="b" style="left:219.30px;top:169.50px;width:8.50px;height:7.80px;background:#262628;"></div>
<div class="b" style="left:229.30px;top:169.50px;width:8.50px;height:7.80px;background:#262628;"></div>
<svg class="b" style="left:250.60px;top:168.85px;" width="9.2" height="9.2" viewBox="0 0 16 16"><path d="M6.96 7.40 L6.72 7.63 L6.54 7.95 L6.45 8.33 L6.46 8.75 L6.58 9.19 L6.84 9.60 L7.21 9.95 L7.69 10.21 L8.24 10.35 L8.85 10.35 L9.46 10.18 L10.04 9.85 L10.54 9.36 L10.92 8.74 L11.14 8.01 L11.18 7.22 L11.01 6.41 L10.63 5.64 L10.06 4.97 L9.31 4.44 L8.42 4.10 L7.45 3.99 L6.45 4.12 L5.48 4.50 L4.61 5.13 L3.90 5.98 L3.41 7.00 L3.17 8.15 L3.23 9.34 L3.58 10.52 L4.23 11.60 L5.14 12.52 L6.28 13.20 L7.58 13.59 L8.96 13.65 L10.35 13.37 L11.66 12.74 L12.80 11.80 L13.70 10.58 L14.28 9.15 L14.50 7.59 L14.33 5.99 L13.77 4.45 L12.83 3.07" fill="none" stroke="#cdcdcd" stroke-width="1.75" stroke-linecap="round" stroke-linejoin="round"/></svg>
<div class="b" style="left:263.00px;top:169.20px;width:59.30px;height:8.50px;background:#242426;"></div>
<span class="t" style="left:267.80px;top:168.15px;font-size:9px;line-height:10.80px;color:#e8e8e8;transform:scaleX(0.8336);">18. bubble 5</span>
<svg class="b" style="left:313.90px;top:171.85px;" width="5.4" height="3.4" viewBox="0 0 10 6"><path d="M0.8 0.8L5 5L9.2 0.8" fill="none" stroke="#c6c6c6" stroke-width="1.8"/></svg>
<div class="b" style="left:0.00px;top:179.00px;width:366.50px;height:11.00px;background:#2a2a2c;"></div>
<svg class="b" style="left:81.30px;top:179.63px;" width="8.8" height="9.9" viewBox="0 0 16 18"><circle cx="8" cy="10.6" r="5.9" fill="none" stroke="#3f8cec" stroke-width="2.2"/><path d="M5.4 1.7H10.6M8 1.7V4.6M8 10.6L11.2 7" stroke="#3f8cec" stroke-width="2.1" fill="none"/></svg>
<svg class="b" style="left:93.70px;top:181.38px;" width="8" height="7.2" viewBox="0 0 16 14"><path d="M1.2 0.5V12.6H15.5" fill="none" stroke="#d2d2d2" stroke-width="2"/><path d="M3.8 9.6L7 4.8L9.6 8.2L14 3.6" fill="none" stroke="#d2d2d2" stroke-width="1.7"/></svg>
<span class="t" style="left:106.60px;top:179.72px;font-size:9.1px;line-height:10.92px;color:#d2d2d2;transform:scaleX(0.7204);-webkit-text-stroke:0.15px #d2d2d2;">Scale</span>
<svg class="b" style="left:159.00px;top:182.78px;" width="9" height="4" viewBox="0 0 18 8"><rect x="1" y="1.2" width="9.5" height="5.6" rx="2.8" fill="none" stroke="#ececec" stroke-width="2.2"/><rect x="7.5" y="1.2" width="9.5" height="5.6" rx="2.8" fill="none" stroke="#ececec" stroke-width="2.2"/></svg>
<span class="t" style="left:170.50px;top:178.81px;font-size:9.1px;line-height:10.92px;color:#458fec;transform:scaleX(0.7920);-webkit-text-stroke:0.22px #458fec;">125.0,125.0</span>
<span class="t" style="left:209.77px;top:179.08px;font-size:9px;line-height:10.80px;color:#d0d0d0;transform:scaleX(0.7500);">%</span>
<svg class="b" style="left:259.20px;top:180.58px;" width="9.2" height="9.2" viewBox="0 0 16 16"><path d="M6.96 7.40 L6.72 7.63 L6.54 7.95 L6.45 8.33 L6.46 8.75 L6.58 9.19 L6.84 9.60 L7.21 9.95 L7.69 10.21 L8.24 10.35 L8.85 10.35 L9.46 10.18 L10.04 9.85 L10.54 9.36 L10.92 8.74 L11.14 8.01 L11.18 7.22 L11.01 6.41 L10.63 5.64 L10.06 4.97 L9.31 4.44 L8.42 4.10 L7.45 3.99 L6.45 4.12 L5.48 4.50 L4.61 5.13 L3.90 5.98 L3.41 7.00 L3.17 8.15 L3.23 9.34 L3.58 10.52 L4.23 11.60 L5.14 12.52 L6.28 13.20 L7.58 13.59 L8.96 13.65 L10.35 13.37 L11.66 12.74 L12.80 11.80 L13.70 10.58 L14.28 9.15 L14.50 7.59 L14.33 5.99 L13.77 4.45 L12.83 3.07" fill="none" stroke="#cdcdcd" stroke-width="1.75" stroke-linecap="round" stroke-linejoin="round"/></svg>
<svg class="b" style="left:330.50px;top:182.08px;" width="4.6" height="6" viewBox="0 0 8 10"><path d="M7.4 0.4V9.6L0.6 5Z" fill="#ececec"/></svg>
<svg class="b" style="left:339.90px;top:181.88px;" width="6.4" height="6.4" viewBox="0 0 12 12"><path d="M6 1L11 6L6 11L1 6Z" fill="none" stroke="#d6d6d6" stroke-width="1.5"/></svg>
<svg class="b" style="left:351.40px;top:182.18px;" width="4.4" height="5.8" viewBox="0 0 8 10"><path d="M0.6 0.4V9.6L7.4 5Z" fill="#6a6a6a"/></svg>
<div class="b" style="left:0.00px;top:190.00px;width:366.50px;height:12.00px;background:#2a2a2c;"></div>
<svg class="b" style="left:81.30px;top:190.95px;" width="8.8" height="9.9" viewBox="0 0 16 18"><circle cx="8" cy="10.6" r="5.9" fill="none" stroke="#3f8cec" stroke-width="2.2"/><path d="M5.4 1.7H10.6M8 1.7V4.6M8 10.6L11.2 7" stroke="#3f8cec" stroke-width="2.1" fill="none"/></svg>
<svg class="b" style="left:93.70px;top:192.70px;" width="8" height="7.2" viewBox="0 0 16 14"><path d="M1.2 0.5V12.6H15.5" fill="none" stroke="#d2d2d2" stroke-width="2"/><path d="M3.8 9.6L7 4.8L9.6 8.2L14 3.6" fill="none" stroke="#d2d2d2" stroke-width="1.7"/></svg>
<span class="t" style="left:106.60px;top:191.04px;font-size:9.1px;line-height:10.92px;color:#d2d2d2;transform:scaleX(0.8104);-webkit-text-stroke:0.15px #d2d2d2;">Opacity</span>
<span class="t" style="left:160.00px;top:190.14px;font-size:9.1px;line-height:10.92px;color:#458fec;transform:scaleX(0.7920);-webkit-text-stroke:0.22px #458fec;">0</span>
<span class="t" style="left:166.21px;top:190.40px;font-size:9px;line-height:10.80px;color:#d0d0d0;transform:scaleX(0.7500);">%</span>
<svg class="b" style="left:259.20px;top:191.90px;" width="9.2" height="9.2" viewBox="0 0 16 16"><path d="M6.96 7.40 L6.72 7.63 L6.54 7.95 L6.45 8.33 L6.46 8.75 L6.58 9.19 L6.84 9.60 L7.21 9.95 L7.69 10.21 L8.24 10.35 L8.85 10.35 L9.46 10.18 L10.04 9.85 L10.54 9.36 L10.92 8.74 L11.14 8.01 L11.18 7.22 L11.01 6.41 L10.63 5.64 L10.06 4.97 L9.31 4.44 L8.42 4.10 L7.45 3.99 L6.45 4.12 L5.48 4.50 L4.61 5.13 L3.90 5.98 L3.41 7.00 L3.17 8.15 L3.23 9.34 L3.58 10.52 L4.23 11.60 L5.14 12.52 L6.28 13.20 L7.58 13.59 L8.96 13.65 L10.35 13.37 L11.66 12.74 L12.80 11.80 L13.70 10.58 L14.28 9.15 L14.50 7.59 L14.33 5.99 L13.77 4.45 L12.83 3.07" fill="none" stroke="#cdcdcd" stroke-width="1.75" stroke-linecap="round" stroke-linejoin="round"/></svg>
<svg class="b" style="left:330.50px;top:193.40px;" width="4.6" height="6" viewBox="0 0 8 10"><path d="M7.4 0.4V9.6L0.6 5Z" fill="#ececec"/></svg>
<svg class="b" style="left:339.90px;top:193.20px;" width="6.4" height="6.4" viewBox="0 0 12 12"><path d="M6 1L11 6L6 11L1 6Z" fill="none" stroke="#d6d6d6" stroke-width="1.5"/></svg>
<svg class="b" style="left:351.40px;top:193.50px;" width="4.4" height="5.8" viewBox="0 0 8 10"><path d="M0.6 0.4V9.6L7.4 5Z" fill="#6a6a6a"/></svg>
<div class="b" style="left:0.00px;top:202.00px;width:366.50px;height:11.00px;background:#3a3a3c;"></div>
<svg class="b" style="left:4.60px;top:204.72px;" width="7.8" height="5.2" viewBox="0 0 16 10"><path d="M0 5 Q8 -3.5 16 5 Q8 13.5 0 5Z" fill="#f2f2f2"/><circle cx="8" cy="5" r="2.7" fill="#2a2a2c"/></svg>
<div class="b" style="left:24.00px;top:203.67px;width:8.30px;height:7.60px;background:#262628;"></div>
<div class="b" style="left:34.00px;top:203.67px;width:8.30px;height:7.60px;background:#262628;"></div>
<svg class="b" style="left:50.20px;top:205.93px;" width="5.2" height="3.4" viewBox="0 0 10 6"><path d="M0.8 0.8L5 5L9.2 0.8" fill="none" stroke="#c6c6c6" stroke-width="1.8"/></svg>
<div class="b" style="left:57.80px;top:203.27px;width:8.40px;height:8.30px;background:#e6e3ee;"></div>
<span class="t" style="left:71.59px;top:202.02px;font-size:9px;line-height:10.80px;color:#ececec;transform:scaleX(0.8600);-webkit-text-stroke:0.25px #ececec;">20</span>
<svg class="b" style="left:92.70px;top:202.72px;" width="7" height="9.2" viewBox="0 0 14 18"><path d="M0.5 0.5H10L13.5 4V17.5H0.5Z" fill="#f4f4f6"/><path d="M4.2 6.2H10.2V9.6Q10.2 12.6 7.2 13.2V11.2Q4.2 11 4.2 8.4Z" fill="#2f7de0"/></svg>
<span class="t" style="left:104.00px;top:202.16px;font-size:9.1px;line-height:10.92px;color:#eeeeee;transform:scaleX(0.8650);-webkit-text-stroke:0.28px #eee;">bubble 4</span>
<svg class="b" style="left:159.80px;top:203.42px;" width="8.6" height="7.8" viewBox="0 0 16 14"><path d="M2.8 6.6 A5.2 5.8 0 0 1 13.2 6.6Z" fill="#f0f0f0"/><rect x="0.3" y="6.4" width="15.4" height="2.6" fill="#f0f0f0"/><rect x="2.6" y="8.6" width="2.4" height="4.6" fill="#e8e8e8"/><rect x="6.8" y="8.6" width="2.4" height="4.6" fill="#e8e8e8"/><rect x="11" y="8.6" width="2.4" height="4.6" fill="#e8e8e8"/><rect x="5.6" y="3" width="1.6" height="2.4" fill="#3a3a3c"/><rect x="8.8" y="3" width="1.6" height="2.4" fill="#3a3a3c"/></svg>
<div class="b" style="left:179.40px;top:203.47px;width:8.80px;height:7.80px;background:#262628;"></div>
<svg class="b" style="left:180.20px;top:203.62px;" width="7.4" height="7.4" viewBox="0 0 10 10"><path d="M1 9.2L9 0.8" stroke="#f0f0f0" stroke-width="1.5" stroke-linecap="round"/></svg>
<div class="b" style="left:209.30px;top:203.47px;width:8.50px;height:7.80px;background:#262628;"></div>
<div class="b" style="left:219.30px;top:203.47px;width:8.50px;height:7.80px;background:#262628;"></div>
<div class="b" style="left:229.30px;top:203.47px;width:8.50px;height:7.80px;background:#262628;"></div>
<svg class="b" style="left:250.60px;top:202.82px;" width="9.2" height="9.2" viewBox="0 0 16 16"><path d="M6.96 7.40 L6.72 7.63 L6.54 7.95 L6.45 8.33 L6.46 8.75 L6.58 9.19 L6.84 9.60 L7.21 9.95 L7.69 10.21 L8.24 10.35 L8.85 10.35 L9.46 10.18 L10.04 9.85 L10.54 9.36 L10.92 8.74 L11.14 8.01 L11.18 7.22 L11.01 6.41 L10.63 5.64 L10.06 4.97 L9.31 4.44 L8.42 4.10 L7.45 3.99 L6.45 4.12 L5.48 4.50 L4.61 5.13 L3.90 5.98 L3.41 7.00 L3.17 8.15 L3.23 9.34 L3.58 10.52 L4.23 11.60 L5.14 12.52 L6.28 13.20 L7.58 13.59 L8.96 13.65 L10.35 13.37 L11.66 12.74 L12.80 11.80 L13.70 10.58 L14.28 9.15 L14.50 7.59 L14.33 5.99 L13.77 4.45 L12.83 3.07" fill="none" stroke="#cdcdcd" stroke-width="1.75" stroke-linecap="round" stroke-linejoin="round"/></svg>
<div class="b" style="left:263.00px;top:203.17px;width:59.30px;height:8.50px;background:#242426;"></div>
<span class="t" style="left:267.80px;top:202.12px;font-size:9px;line-height:10.80px;color:#e8e8e8;transform:scaleX(0.8040);">None</span>
<svg class="b" style="left:313.90px;top:205.82px;" width="5.4" height="3.4" viewBox="0 0 10 6"><path d="M0.8 0.8L5 5L9.2 0.8" fill="none" stroke="#c6c6c6" stroke-width="1.8"/></svg>
<div class="b" style="left:0.00px;top:213.00px;width:366.50px;height:11.00px;background:#2a2a2c;"></div>
<svg class="b" style="left:81.30px;top:213.60px;" width="8.8" height="9.9" viewBox="0 0 16 18"><circle cx="8" cy="10.6" r="5.9" fill="none" stroke="#3f8cec" stroke-width="2.2"/><path d="M5.4 1.7H10.6M8 1.7V4.6M8 10.6L11.2 7" stroke="#3f8cec" stroke-width="2.1" fill="none"/></svg>
<svg class="b" style="left:93.70px;top:215.35px;" width="8" height="7.2" viewBox="0 0 16 14"><path d="M1.2 0.5V12.6H15.5" fill="none" stroke="#d2d2d2" stroke-width="2"/><path d="M3.8 9.6L7 4.8L9.6 8.2L14 3.6" fill="none" stroke="#d2d2d2" stroke-width="1.7"/></svg>
<span class="t" style="left:106.60px;top:213.69px;font-size:9.1px;line-height:10.92px;color:#d2d2d2;transform:scaleX(0.8340);-webkit-text-stroke:0.15px #d2d2d2;">Position</span>
<span class="t" style="left:160.00px;top:212.79px;font-size:9.1px;line-height:10.92px;color:#458fec;transform:scaleX(0.7920);-webkit-text-stroke:0.22px #458fec;">931.4,624.0</span>
<svg class="b" style="left:259.20px;top:214.55px;" width="9.2" height="9.2" viewBox="0 0 16 16"><path d="M6.96 7.40 L6.72 7.63 L6.54 7.95 L6.45 8.33 L6.46 8.75 L6.58 9.19 L6.84 9.60 L7.21 9.95 L7.69 10.21 L8.24 10.35 L8.85 10.35 L9.46 10.18 L10.04 9.85 L10.54 9.36 L10.92 8.74 L11.14 8.01 L11.18 7.22 L11.01 6.41 L10.63 5.64 L10.06 4.97 L9.31 4.44 L8.42 4.10 L7.45 3.99 L6.45 4.12 L5.48 4.50 L4.61 5.13 L3.90 5.98 L3.41 7.00 L3.17 8.15 L3.23 9.34 L3.58 10.52 L4.23 11.60 L5.14 12.52 L6.28 13.20 L7.58 13.59 L8.96 13.65 L10.35 13.37 L11.66 12.74 L12.80 11.80 L13.70 10.58 L14.28 9.15 L14.50 7.59 L14.33 5.99 L13.77 4.45 L12.83 3.07" fill="none" stroke="#cdcdcd" stroke-width="1.75" stroke-linecap="round" stroke-linejoin="round"/></svg>
<svg class="b" style="left:330.50px;top:216.05px;" width="4.6" height="6" viewBox="0 0 8 10"><path d="M7.4 0.4V9.6L0.6 5Z" fill="#ececec"/></svg>
<svg class="b" style="left:339.90px;top:215.85px;" width="6.4" height="6.4" viewBox="0 0 12 12"><path d="M6 1L11 6L6 11L1 6Z" fill="none" stroke="#d6d6d6" stroke-width="1.5"/></svg>
<svg class="b" style="left:351.40px;top:216.15px;" width="4.4" height="5.8" viewBox="0 0 8 10"><path d="M0.6 0.4V9.6L7.4 5Z" fill="#6a6a6a"/></svg>
<div class="b" style="left:0.00px;top:224.00px;width:366.50px;height:12.00px;background:#3a3a3c;"></div>
<svg class="b" style="left:4.60px;top:227.38px;" width="7.8" height="5.2" viewBox="0 0 16 10"><path d="M0 5 Q8 -3.5 16 5 Q8 13.5 0 5Z" fill="#f2f2f2"/><circle cx="8" cy="5" r="2.7" fill="#2a2a2c"/></svg>
<div class="b" style="left:24.00px;top:226.33px;width:8.30px;height:7.60px;background:#262628;"></div>
<div class="b" style="left:34.00px;top:226.33px;width:8.30px;height:7.60px;background:#262628;"></div>
<svg class="b" style="left:50.20px;top:228.58px;" width="5.2" height="3.4" viewBox="0 0 10 6"><path d="M0.8 0.8L5 5L9.2 0.8" fill="none" stroke="#c6c6c6" stroke-width="1.8"/></svg>
<div class="b" style="left:57.80px;top:225.93px;width:8.40px;height:8.30px;background:#e2364b;"></div>
<span class="t" style="left:71.59px;top:224.68px;font-size:9px;line-height:10.80px;color:#ececec;transform:scaleX(0.8600);-webkit-text-stroke:0.25px #ececec;">21</span>
<span class="t" style="left:92.50px;top:224.06px;font-size:10.2px;line-height:12.24px;color:#ececec;transform:scaleX(1.0000);font-family:'Liberation Serif',serif;-webkit-text-stroke:0.3px #ececec;">T</span>
<span class="t" style="left:104.00px;top:224.82px;font-size:9.1px;line-height:10.92px;color:#eeeeee;transform:scaleX(0.8650);-webkit-text-stroke:0.28px #eee;">in</span>
<svg class="b" style="left:159.80px;top:226.08px;" width="8.6" height="7.8" viewBox="0 0 16 14"><path d="M2.8 6.6 A5.2 5.8 0 0 1 13.2 6.6Z" fill="#f0f0f0"/><rect x="0.3" y="6.4" width="15.4" height="2.6" fill="#f0f0f0"/><rect x="2.6" y="8.6" width="2.4" height="4.6" fill="#e8e8e8"/><rect x="6.8" y="8.6" width="2.4" height="4.6" fill="#e8e8e8"/><rect x="11" y="8.6" width="2.4" height="4.6" fill="#e8e8e8"/><rect x="5.6" y="3" width="1.6" height="2.4" fill="#3a3a3c"/><rect x="8.8" y="3" width="1.6" height="2.4" fill="#3a3a3c"/></svg>
<div class="b" style="left:169.20px;top:226.12px;width:8.60px;height:7.80px;background:#262628;"></div>
<svg class="b" style="left:170.00px;top:226.38px;" width="7.2" height="7.2" viewBox="0 0 14 14"><circle cx="7" cy="7" r="2.7" fill="none" stroke="#808082" stroke-width="1.9"/><g stroke="#808082" stroke-width="1.5"><path d="M7 0.5V3M7 11V13.5M0.5 7H3M11 7H13.5M2.4 2.4L4.2 4.2M9.8 9.8L11.6 11.6M2.4 11.6L4.2 9.8M9.8 4.2L11.6 2.4"/></g></svg>
<div class="b" style="left:179.40px;top:226.12px;width:8.80px;height:7.80px;background:#262628;"></div>
<svg class="b" style="left:180.20px;top:226.28px;" width="7.4" height="7.4" viewBox="0 0 10 10"><path d="M1 9.2L9 0.8" stroke="#f0f0f0" stroke-width="1.5" stroke-linecap="round"/></svg>
<div class="b" style="left:209.30px;top:226.12px;width:8.50px;height:7.80px;background:#262628;"></div>
<div class="b" style="left:219.30px;top:226.12px;width:8.50px;height:7.80px;background:#262628;"></div>
<div class="b" style="left:229.30px;top:226.12px;width:8.50px;height:7.80px;background:#262628;"></div>
<svg class="b" style="left:250.60px;top:225.48px;" width="9.2" height="9.2" viewBox="0 0 16 16"><path d="M6.96 7.40 L6.72 7.63 L6.54 7.95 L6.45 8.33 L6.46 8.75 L6.58 9.19 L6.84 9.60 L7.21 9.95 L7.69 10.21 L8.24 10.35 L8.85 10.35 L9.46 10.18 L10.04 9.85 L10.54 9.36 L10.92 8.74 L11.14 8.01 L11.18 7.22 L11.01 6.41 L10.63 5.64 L10.06 4.97 L9.31 4.44 L8.42 4.10 L7.45 3.99 L6.45 4.12 L5.48 4.50 L4.61 5.13 L3.90 5.98 L3.41 7.00 L3.17 8.15 L3.23 9.34 L3.58 10.52 L4.23 11.60 L5.14 12.52 L6.28 13.20 L7.58 13.59 L8.96 13.65 L10.35 13.37 L11.66 12.74 L12.80 11.80 L13.70 10.58 L14.28 9.15 L14.50 7.59 L14.33 5.99 L13.77 4.45 L12.83 3.07" fill="none" stroke="#cdcdcd" stroke-width="1.75" stroke-linecap="round" stroke-linejoin="round"/></svg>
<div class="b" style="left:263.00px;top:225.83px;width:59.30px;height:8.50px;background:#242426;"></div>
<span class="t" style="left:267.80px;top:224.78px;font-size:9px;line-height:10.80px;color:#e8e8e8;transform:scaleX(0.8336);">20. bubble 4</span>
<svg class="b" style="left:313.90px;top:228.48px;" width="5.4" height="3.4" viewBox="0 0 10 6"><path d="M0.8 0.8L5 5L9.2 0.8" fill="none" stroke="#c6c6c6" stroke-width="1.8"/></svg>
<div class="b" style="left:0.00px;top:236.00px;width:366.50px;height:11.00px;background:#2a2a2c;"></div>
<svg class="b" style="left:81.30px;top:236.25px;" width="8.8" height="9.9" viewBox="0 0 16 18"><circle cx="8" cy="10.6" r="5.9" fill="none" stroke="#3f8cec" stroke-width="2.2"/><path d="M5.4 1.7H10.6M8 1.7V4.6M8 10.6L11.2 7" stroke="#3f8cec" stroke-width="2.1" fill="none"/></svg>
<svg class="b" style="left:93.70px;top:238.00px;" width="8" height="7.2" viewBox="0 0 16 14"><path d="M1.2 0.5V12.6H15.5" fill="none" stroke="#d2d2d2" stroke-width="2"/><path d="M3.8 9.6L7 4.8L9.6 8.2L14 3.6" fill="none" stroke="#d2d2d2" stroke-width="1.7"/></svg>
<span class="t" style="left:106.60px;top:236.34px;font-size:9.1px;line-height:10.92px;color:#d2d2d2;transform:scaleX(0.8104);-webkit-text-stroke:0.15px #d2d2d2;">Opacity</span>
<span class="t" style="left:160.00px;top:235.44px;font-size:9.1px;line-height:10.92px;color:#458fec;transform:scaleX(0.7920);-webkit-text-stroke:0.22px #458fec;">0</span>
<span class="t" style="left:166.21px;top:235.70px;font-size:9px;line-height:10.80px;color:#d0d0d0;transform:scaleX(0.7500);">%</span>
<svg class="b" style="left:259.20px;top:237.20px;" width="9.2" height="9.2" viewBox="0 0 16 16"><path d="M6.96 7.40 L6.72 7.63 L6.54 7.95 L6.45 8.33 L6.46 8.75 L6.58 9.19 L6.84 9.60 L7.21 9.95 L7.69 10.21 L8.24 10.35 L8.85 10.35 L9.46 10.18 L10.04 9.85 L10.54 9.36 L10.92 8.74 L11.14 8.01 L11.18 7.22 L11.01 6.41 L10.63 5.64 L10.06 4.97 L9.31 4.44 L8.42 4.10 L7.45 3.99 L6.45 4.12 L5.48 4.50 L4.61 5.13 L3.90 5.98 L3.41 7.00 L3.17 8.15 L3.23 9.34 L3.58 10.52 L4.23 11.60 L5.14 12.52 L6.28 13.20 L7.58 13.59 L8.96 13.65 L10.35 13.37 L11.66 12.74 L12.80 11.80 L13.70 10.58 L14.28 9.15 L14.50 7.59 L14.33 5.99 L13.77 4.45 L12.83 3.07" fill="none" stroke="#cdcdcd" stroke-width="1.75" stroke-linecap="round" stroke-linejoin="round"/></svg>
<svg class="b" style="left:330.50px;top:238.70px;" width="4.6" height="6" viewBox="0 0 8 10"><path d="M7.4 0.4V9.6L0.6 5Z" fill="#ececec"/></svg>
<svg class="b" style="left:339.90px;top:238.50px;" width="6.4" height="6.4" viewBox="0 0 12 12"><path d="M6 1L11 6L6 11L1 6Z" fill="none" stroke="#d6d6d6" stroke-width="1.5"/></svg>
<svg class="b" style="left:351.40px;top:238.80px;" width="4.4" height="5.8" viewBox="0 0 8 10"><path d="M0.6 0.4V9.6L7.4 5Z" fill="#6a6a6a"/></svg>
<div class="b" style="left:0.00px;top:247.00px;width:366.50px;height:11.00px;background:#3a3a3c;"></div>
<svg class="b" style="left:4.60px;top:250.03px;" width="7.8" height="5.2" viewBox="0 0 16 10"><path d="M0 5 Q8 -3.5 16 5 Q8 13.5 0 5Z" fill="#f2f2f2"/><circle cx="8" cy="5" r="2.7" fill="#2a2a2c"/></svg>
<div class="b" style="left:24.00px;top:248.97px;width:8.30px;height:7.60px;background:#262628;"></div>
<div class="b" style="left:34.00px;top:248.97px;width:8.30px;height:7.60px;background:#262628;"></div>
<svg class="b" style="left:50.20px;top:251.23px;" width="5.2" height="3.4" viewBox="0 0 10 6"><path d="M0.8 0.8L5 5L9.2 0.8" fill="none" stroke="#c6c6c6" stroke-width="1.8"/></svg>
<div class="b" style="left:57.80px;top:248.57px;width:8.40px;height:8.30px;background:#e6e3ee;"></div>
<span class="t" style="left:71.59px;top:247.32px;font-size:9px;line-height:10.80px;color:#ececec;transform:scaleX(0.8600);-webkit-text-stroke:0.25px #ececec;">22</span>
<svg class="b" style="left:92.70px;top:248.03px;" width="7" height="9.2" viewBox="0 0 14 18"><path d="M0.5 0.5H10L13.5 4V17.5H0.5Z" fill="#f4f4f6"/><path d="M4.2 6.2H10.2V9.6Q10.2 12.6 7.2 13.2V11.2Q4.2 11 4.2 8.4Z" fill="#2f7de0"/></svg>
<span class="t" style="left:104.00px;top:247.47px;font-size:9.1px;line-height:10.92px;color:#eeeeee;transform:scaleX(0.8650);-webkit-text-stroke:0.28px #eee;">[77418b...ng]</span>
<svg class="b" style="left:159.80px;top:248.72px;" width="8.6" height="7.8" viewBox="0 0 16 14"><path d="M2.8 6.6 A5.2 5.8 0 0 1 13.2 6.6Z" fill="#f0f0f0"/><rect x="0.3" y="6.4" width="15.4" height="2.6" fill="#f0f0f0"/><rect x="2.6" y="8.6" width="2.4" height="4.6" fill="#e8e8e8"/><rect x="6.8" y="8.6" width="2.4" height="4.6" fill="#e8e8e8"/><rect x="11" y="8.6" width="2.4" height="4.6" fill="#e8e8e8"/><rect x="5.6" y="3" width="1.6" height="2.4" fill="#3a3a3c"/><rect x="8.8" y="3" width="1.6" height="2.4" fill="#3a3a3c"/></svg>
<div class="b" style="left:179.40px;top:248.77px;width:8.80px;height:7.80px;background:#262628;"></div>
<svg class="b" style="left:180.20px;top:248.93px;" width="7.4" height="7.4" viewBox="0 0 10 10"><path d="M1 9.2L9 0.8" stroke="#f0f0f0" stroke-width="1.5" stroke-linecap="round"/></svg>
<div class="b" style="left:209.30px;top:248.77px;width:8.50px;height:7.80px;background:#262628;"></div>
<div class="b" style="left:219.30px;top:248.77px;width:8.50px;height:7.80px;background:#262628;"></div>
<div class="b" style="left:229.30px;top:248.77px;width:8.50px;height:7.80px;background:#262628;"></div>
<svg class="b" style="left:250.60px;top:248.12px;" width="9.2" height="9.2" viewBox="0 0 16 16"><path d="M6.96 7.40 L6.72 7.63 L6.54 7.95 L6.45 8.33 L6.46 8.75 L6.58 9.19 L6.84 9.60 L7.21 9.95 L7.69 10.21 L8.24 10.35 L8.85 10.35 L9.46 10.18 L10.04 9.85 L10.54 9.36 L10.92 8.74 L11.14 8.01 L11.18 7.22 L11.01 6.41 L10.63 5.64 L10.06 4.97 L9.31 4.44 L8.42 4.10 L7.45 3.99 L6.45 4.12 L5.48 4.50 L4.61 5.13 L3.90 5.98 L3.41 7.00 L3.17 8.15 L3.23 9.34 L3.58 10.52 L4.23 11.60 L5.14 12.52 L6.28 13.20 L7.58 13.59 L8.96 13.65 L10.35 13.37 L11.66 12.74 L12.80 11.80 L13.70 10.58 L14.28 9.15 L14.50 7.59 L14.33 5.99 L13.77 4.45 L12.83 3.07" fill="none" stroke="#cdcdcd" stroke-width="1.75" stroke-linecap="round" stroke-linejoin="round"/></svg>
<div class="b" style="left:263.00px;top:248.47px;width:59.30px;height:8.50px;background:#242426;"></div>
<span class="t" style="left:267.80px;top:247.42px;font-size:9px;line-height:10.80px;color:#e8e8e8;transform:scaleX(0.8450);">5. Null 2</span>
<svg class="b" style="left:313.90px;top:251.12px;" width="5.4" height="3.4" viewBox="0 0 10 6"><path d="M0.8 0.8L5 5L9.2 0.8" fill="none" stroke="#c6c6c6" stroke-width="1.8"/></svg>
<div class="b" style="left:0.00px;top:258.00px;width:366.50px;height:12.00px;background:#2a2a2c;"></div>
<svg class="b" style="left:81.30px;top:258.90px;" width="8.8" height="9.9" viewBox="0 0 16 18"><circle cx="8" cy="10.6" r="5.9" fill="none" stroke="#3f8cec" stroke-width="2.2"/><path d="M5.4 1.7H10.6M8 1.7V4.6M8 10.6L11.2 7" stroke="#3f8cec" stroke-width="2.1" fill="none"/></svg>
<svg class="b" style="left:93.70px;top:260.65px;" width="8" height="7.2" viewBox="0 0 16 14"><path d="M1.2 0.5V12.6H15.5" fill="none" stroke="#d2d2d2" stroke-width="2"/><path d="M3.8 9.6L7 4.8L9.6 8.2L14 3.6" fill="none" stroke="#d2d2d2" stroke-width="1.7"/></svg>
<span class="t" style="left:106.60px;top:258.99px;font-size:9.1px;line-height:10.92px;color:#d2d2d2;transform:scaleX(0.8340);-webkit-text-stroke:0.15px #d2d2d2;">Position</span>
<span class="t" style="left:160.00px;top:258.09px;font-size:9.1px;line-height:10.92px;color:#458fec;transform:scaleX(0.7920);-webkit-text-stroke:0.22px #458fec;">0.0,307.0</span>
<svg class="b" style="left:259.20px;top:259.85px;" width="9.2" height="9.2" viewBox="0 0 16 16"><path d="M6.96 7.40 L6.72 7.63 L6.54 7.95 L6.45 8.33 L6.46 8.75 L6.58 9.19 L6.84 9.60 L7.21 9.95 L7.69 10.21 L8.24 10.35 L8.85 10.35 L9.46 10.18 L10.04 9.85 L10.54 9.36 L10.92 8.74 L11.14 8.01 L11.18 7.22 L11.01 6.41 L10.63 5.64 L10.06 4.97 L9.31 4.44 L8.42 4.10 L7.45 3.99 L6.45 4.12 L5.48 4.50 L4.61 5.13 L3.90 5.98 L3.41 7.00 L3.17 8.15 L3.23 9.34 L3.58 10.52 L4.23 11.60 L5.14 12.52 L6.28 13.20 L7.58 13.59 L8.96 13.65 L10.35 13.37 L11.66 12.74 L12.80 11.80 L13.70 10.58 L14.28 9.15 L14.50 7.59 L14.33 5.99 L13.77 4.45 L12.83 3.07" fill="none" stroke="#cdcdcd" stroke-width="1.75" stroke-linecap="round" stroke-linejoin="round"/></svg>
<svg class="b" style="left:330.50px;top:261.35px;" width="4.6" height="6" viewBox="0 0 8 10"><path d="M7.4 0.4V9.6L0.6 5Z" fill="#ececec"/></svg>
<svg class="b" style="left:339.90px;top:261.15px;" width="6.4" height="6.4" viewBox="0 0 12 12"><path d="M6 1L11 6L6 11L1 6Z" fill="none" stroke="#d6d6d6" stroke-width="1.5"/></svg>
<svg class="b" style="left:351.40px;top:261.45px;" width="4.4" height="5.8" viewBox="0 0 8 10"><path d="M0.6 0.4V9.6L7.4 5Z" fill="#6a6a6a"/></svg>
<div class="b" style="left:0.00px;top:270.00px;width:366.50px;height:11.00px;background:#3a3a3c;"></div>
<svg class="b" style="left:4.60px;top:272.67px;" width="7.8" height="5.2" viewBox="0 0 16 10"><path d="M0 5 Q8 -3.5 16 5 Q8 13.5 0 5Z" fill="#f2f2f2"/><circle cx="8" cy="5" r="2.7" fill="#2a2a2c"/></svg>
<div class="b" style="left:24.00px;top:271.62px;width:8.30px;height:7.60px;background:#262628;"></div>
<div class="b" style="left:34.00px;top:271.62px;width:8.30px;height:7.60px;background:#262628;"></div>
<svg class="b" style="left:50.20px;top:273.88px;" width="5.2" height="3.4" viewBox="0 0 10 6"><path d="M0.8 0.8L5 5L9.2 0.8" fill="none" stroke="#c6c6c6" stroke-width="1.8"/></svg>
<div class="b" style="left:57.80px;top:271.22px;width:8.40px;height:8.30px;background:#6aa5f7;"></div>
<span class="t" style="left:71.59px;top:269.98px;font-size:9px;line-height:10.80px;color:#ececec;transform:scaleX(0.8600);-webkit-text-stroke:0.25px #ececec;">23</span>
<svg class="b" style="left:91.80px;top:271.27px;" width="7.8" height="7.8" viewBox="0 0 20 20"><path d="M10 0.8L12.7 7.2L19.6 7.7L14.3 12.2L16 19L10 15.3L4 19L5.7 12.2L0.4 7.7L7.3 7.2Z" fill="#f2f2f2"/></svg>
<span class="t" style="left:104.00px;top:270.12px;font-size:9.1px;line-height:10.92px;color:#eeeeee;transform:scaleX(0.8650);-webkit-text-stroke:0.28px #eee;">land 2</span>
<svg class="b" style="left:159.80px;top:271.38px;" width="8.6" height="7.8" viewBox="0 0 16 14"><path d="M2.8 6.6 A5.2 5.8 0 0 1 13.2 6.6Z" fill="#f0f0f0"/><rect x="0.3" y="6.4" width="15.4" height="2.6" fill="#f0f0f0"/><rect x="2.6" y="8.6" width="2.4" height="4.6" fill="#e8e8e8"/><rect x="6.8" y="8.6" width="2.4" height="4.6" fill="#e8e8e8"/><rect x="11" y="8.6" width="2.4" height="4.6" fill="#e8e8e8"/><rect x="5.6" y="3" width="1.6" height="2.4" fill="#3a3a3c"/><rect x="8.8" y="3" width="1.6" height="2.4" fill="#3a3a3c"/></svg>
<div class="b" style="left:169.20px;top:271.42px;width:8.60px;height:7.80px;background:#262628;"></div>
<svg class="b" style="left:170.00px;top:271.67px;" width="7.2" height="7.2" viewBox="0 0 14 14"><circle cx="7" cy="7" r="2.7" fill="none" stroke="#808082" stroke-width="1.9"/><g stroke="#808082" stroke-width="1.5"><path d="M7 0.5V3M7 11V13.5M0.5 7H3M11 7H13.5M2.4 2.4L4.2 4.2M9.8 9.8L11.6 11.6M2.4 11.6L4.2 9.8M9.8 4.2L11.6 2.4"/></g></svg>
<div class="b" style="left:179.40px;top:271.42px;width:8.80px;height:7.80px;background:#262628;"></div>
<svg class="b" style="left:180.20px;top:271.57px;" width="7.4" height="7.4" viewBox="0 0 10 10"><path d="M1 9.2L9 0.8" stroke="#f0f0f0" stroke-width="1.5" stroke-linecap="round"/></svg>
<div class="b" style="left:209.30px;top:271.42px;width:8.50px;height:7.80px;background:#262628;"></div>
<div class="b" style="left:219.30px;top:271.42px;width:8.50px;height:7.80px;background:#262628;"></div>
<div class="b" style="left:229.30px;top:271.42px;width:8.50px;height:7.80px;background:#262628;"></div>
<svg class="b" style="left:250.60px;top:270.77px;" width="9.2" height="9.2" viewBox="0 0 16 16"><path d="M6.96 7.40 L6.72 7.63 L6.54 7.95 L6.45 8.33 L6.46 8.75 L6.58 9.19 L6.84 9.60 L7.21 9.95 L7.69 10.21 L8.24 10.35 L8.85 10.35 L9.46 10.18 L10.04 9.85 L10.54 9.36 L10.92 8.74 L11.14 8.01 L11.18 7.22 L11.01 6.41 L10.63 5.64 L10.06 4.97 L9.31 4.44 L8.42 4.10 L7.45 3.99 L6.45 4.12 L5.48 4.50 L4.61 5.13 L3.90 5.98 L3.41 7.00 L3.17 8.15 L3.23 9.34 L3.58 10.52 L4.23 11.60 L5.14 12.52 L6.28 13.20 L7.58 13.59 L8.96 13.65 L10.35 13.37 L11.66 12.74 L12.80 11.80 L13.70 10.58 L14.28 9.15 L14.50 7.59 L14.33 5.99 L13.77 4.45 L12.83 3.07" fill="none" stroke="#cdcdcd" stroke-width="1.75" stroke-linecap="round" stroke-linejoin="round"/></svg>
<div class="b" style="left:263.00px;top:271.12px;width:59.30px;height:8.50px;background:#242426;"></div>
<span class="t" style="left:267.80px;top:270.07px;font-size:9px;line-height:10.80px;color:#e8e8e8;transform:scaleX(0.8450);">5. Null 2</span>
<svg class="b" style="left:313.90px;top:273.77px;" width="5.4" height="3.4" viewBox="0 0 10 6"><path d="M0.8 0.8L5 5L9.2 0.8" fill="none" stroke="#c6c6c6" stroke-width="1.8"/></svg>
<div class="b" style="left:0.00px;top:281.00px;width:366.50px;height:11.00px;background:#2a2a2c;"></div>
<svg class="b" style="left:81.30px;top:281.55px;" width="8.8" height="9.9" viewBox="0 0 16 18"><circle cx="8" cy="10.6" r="5.9" fill="none" stroke="#3f8cec" stroke-width="2.2"/><path d="M5.4 1.7H10.6M8 1.7V4.6M8 10.6L11.2 7" stroke="#3f8cec" stroke-width="2.1" fill="none"/></svg>
<svg class="b" style="left:93.70px;top:283.30px;" width="8" height="7.2" viewBox="0 0 16 14"><path d="M1.2 0.5V12.6H15.5" fill="none" stroke="#d2d2d2" stroke-width="2"/><path d="M3.8 9.6L7 4.8L9.6 8.2L14 3.6" fill="none" stroke="#d2d2d2" stroke-width="1.7"/></svg>
<span class="t" style="left:106.60px;top:281.64px;font-size:9.1px;line-height:10.92px;color:#d2d2d2;transform:scaleX(0.7204);-webkit-text-stroke:0.15px #d2d2d2;">Scale</span>
<svg class="b" style="left:159.00px;top:284.70px;" width="9" height="4" viewBox="0 0 18 8"><rect x="1" y="1.2" width="9.5" height="5.6" rx="2.8" fill="none" stroke="#ececec" stroke-width="2.2"/><rect x="7.5" y="1.2" width="9.5" height="5.6" rx="2.8" fill="none" stroke="#ececec" stroke-width="2.2"/></svg>
<span class="t" style="left:170.50px;top:280.74px;font-size:9.1px;line-height:10.92px;color:#458fec;transform:scaleX(0.7920);-webkit-text-stroke:0.22px #458fec;">90.2,53.5</span>
<span class="t" style="left:201.76px;top:281.00px;font-size:9px;line-height:10.80px;color:#d0d0d0;transform:scaleX(0.7500);">%</span>
<svg class="b" style="left:259.20px;top:282.50px;" width="9.2" height="9.2" viewBox="0 0 16 16"><path d="M6.96 7.40 L6.72 7.63 L6.54 7.95 L6.45 8.33 L6.46 8.75 L6.58 9.19 L6.84 9.60 L7.21 9.95 L7.69 10.21 L8.24 10.35 L8.85 10.35 L9.46 10.18 L10.04 9.85 L10.54 9.36 L10.92 8.74 L11.14 8.01 L11.18 7.22 L11.01 6.41 L10.63 5.64 L10.06 4.97 L9.31 4.44 L8.42 4.10 L7.45 3.99 L6.45 4.12 L5.48 4.50 L4.61 5.13 L3.90 5.98 L3.41 7.00 L3.17 8.15 L3.23 9.34 L3.58 10.52 L4.23 11.60 L5.14 12.52 L6.28 13.20 L7.58 13.59 L8.96 13.65 L10.35 13.37 L11.66 12.74 L12.80 11.80 L13.70 10.58 L14.28 9.15 L14.50 7.59 L14.33 5.99 L13.77 4.45 L12.83 3.07" fill="none" stroke="#cdcdcd" stroke-width="1.75" stroke-linecap="round" stroke-linejoin="round"/></svg>
<svg class="b" style="left:330.50px;top:284.00px;" width="4.6" height="6" viewBox="0 0 8 10"><path d="M7.4 0.4V9.6L0.6 5Z" fill="#ececec"/></svg>
<svg class="b" style="left:339.90px;top:283.80px;" width="6.4" height="6.4" viewBox="0 0 12 12"><path d="M6 1L11 6L6 11L1 6Z" fill="none" stroke="#d6d6d6" stroke-width="1.5"/></svg>
<svg class="b" style="left:351.40px;top:284.10px;" width="4.4" height="5.8" viewBox="0 0 8 10"><path d="M0.6 0.4V9.6L7.4 5Z" fill="#6a6a6a"/></svg>
<div class="b" style="left:0.00px;top:292.00px;width:366.50px;height:12.00px;background:#3a3a3c;"></div>
<svg class="b" style="left:4.60px;top:295.32px;" width="7.8" height="5.2" viewBox="0 0 16 10"><path d="M0 5 Q8 -3.5 16 5 Q8 13.5 0 5Z" fill="#f2f2f2"/><circle cx="8" cy="5" r="2.7" fill="#2a2a2c"/></svg>
<div class="b" style="left:24.00px;top:294.27px;width:8.30px;height:7.60px;background:#262628;"></div>
<div class="b" style="left:34.00px;top:294.27px;width:8.30px;height:7.60px;background:#262628;"></div>
<svg class="b" style="left:50.20px;top:296.53px;" width="5.2" height="3.4" viewBox="0 0 10 6"><path d="M0.8 0.8L5 5L9.2 0.8" fill="none" stroke="#c6c6c6" stroke-width="1.8"/></svg>
<div class="b" style="left:57.80px;top:293.88px;width:8.40px;height:8.30px;background:#e6e3ee;"></div>
<span class="t" style="left:71.59px;top:292.63px;font-size:9px;line-height:10.80px;color:#ececec;transform:scaleX(0.8600);-webkit-text-stroke:0.25px #ececec;">24</span>
<svg class="b" style="left:92.70px;top:293.32px;" width="7" height="9.2" viewBox="0 0 14 18"><path d="M0.5 0.5H10L13.5 4V17.5H0.5Z" fill="#f4f4f6"/><path d="M4.2 6.2H10.2V9.6Q10.2 12.6 7.2 13.2V11.2Q4.2 11 4.2 8.4Z" fill="#2f7de0"/></svg>
<span class="t" style="left:104.00px;top:292.77px;font-size:9.1px;line-height:10.92px;color:#eeeeee;transform:scaleX(0.8650);-webkit-text-stroke:0.28px #eee;">bubble 3</span>
<svg class="b" style="left:159.80px;top:294.03px;" width="8.6" height="7.8" viewBox="0 0 16 14"><path d="M2.8 6.6 A5.2 5.8 0 0 1 13.2 6.6Z" fill="#f0f0f0"/><rect x="0.3" y="6.4" width="15.4" height="2.6" fill="#f0f0f0"/><rect x="2.6" y="8.6" width="2.4" height="4.6" fill="#e8e8e8"/><rect x="6.8" y="8.6" width="2.4" height="4.6" fill="#e8e8e8"/><rect x="11" y="8.6" width="2.4" height="4.6" fill="#e8e8e8"/><rect x="5.6" y="3" width="1.6" height="2.4" fill="#3a3a3c"/><rect x="8.8" y="3" width="1.6" height="2.4" fill="#3a3a3c"/></svg>
<div class="b" style="left:179.40px;top:294.07px;width:8.80px;height:7.80px;background:#262628;"></div>
<svg class="b" style="left:180.20px;top:294.23px;" width="7.4" height="7.4" viewBox="0 0 10 10"><path d="M1 9.2L9 0.8" stroke="#f0f0f0" stroke-width="1.5" stroke-linecap="round"/></svg>
<div class="b" style="left:209.30px;top:294.07px;width:8.50px;height:7.80px;background:#262628;"></div>
<div class="b" style="left:219.30px;top:294.07px;width:8.50px;height:7.80px;background:#262628;"></div>
<div class="b" style="left:229.30px;top:294.07px;width:8.50px;height:7.80px;background:#262628;"></div>
<svg class="b" style="left:250.60px;top:293.43px;" width="9.2" height="9.2" viewBox="0 0 16 16"><path d="M6.96 7.40 L6.72 7.63 L6.54 7.95 L6.45 8.33 L6.46 8.75 L6.58 9.19 L6.84 9.60 L7.21 9.95 L7.69 10.21 L8.24 10.35 L8.85 10.35 L9.46 10.18 L10.04 9.85 L10.54 9.36 L10.92 8.74 L11.14 8.01 L11.18 7.22 L11.01 6.41 L10.63 5.64 L10.06 4.97 L9.31 4.44 L8.42 4.10 L7.45 3.99 L6.45 4.12 L5.48 4.50 L4.61 5.13 L3.90 5.98 L3.41 7.00 L3.17 8.15 L3.23 9.34 L3.58 10.52 L4.23 11.60 L5.14 12.52 L6.28 13.20 L7.58 13.59 L8.96 13.65 L10.35 13.37 L11.66 12.74 L12.80 11.80 L13.70 10.58 L14.28 9.15 L14.50 7.59 L14.33 5.99 L13.77 4.45 L12.83 3.07" fill="none" stroke="#cdcdcd" stroke-width="1.75" stroke-linecap="round" stroke-linejoin="round"/></svg>
<div class="b" style="left:263.00px;top:293.77px;width:59.30px;height:8.50px;background:#242426;"></div>
<span class="t" style="left:267.80px;top:292.73px;font-size:9px;line-height:10.80px;color:#e8e8e8;transform:scaleX(0.8040);">None</span>
<svg class="b" style="left:313.90px;top:296.43px;" width="5.4" height="3.4" viewBox="0 0 10 6"><path d="M0.8 0.8L5 5L9.2 0.8" fill="none" stroke="#c6c6c6" stroke-width="1.8"/></svg>
<div class="b" style="left:0.00px;top:304.00px;width:366.50px;height:11.00px;background:#2a2a2c;"></div>
<svg class="b" style="left:81.30px;top:304.20px;" width="8.8" height="9.9" viewBox="0 0 16 18"><circle cx="8" cy="10.6" r="5.9" fill="none" stroke="#3f8cec" stroke-width="2.2"/><path d="M5.4 1.7H10.6M8 1.7V4.6M8 10.6L11.2 7" stroke="#3f8cec" stroke-width="2.1" fill="none"/></svg>
<svg class="b" style="left:93.70px;top:305.95px;" width="8" height="7.2" viewBox="0 0 16 14"><path d="M1.2 0.5V12.6H15.5" fill="none" stroke="#d2d2d2" stroke-width="2"/><path d="M3.8 9.6L7 4.8L9.6 8.2L14 3.6" fill="none" stroke="#d2d2d2" stroke-width="1.7"/></svg>
<span class="t" style="left:106.60px;top:304.29px;font-size:9.1px;line-height:10.92px;color:#d2d2d2;transform:scaleX(0.8340);-webkit-text-stroke:0.15px #d2d2d2;">Position</span>
<span class="t" style="left:160.00px;top:303.39px;font-size:9.1px;line-height:10.92px;color:#458fec;transform:scaleX(0.7920);-webkit-text-stroke:0.22px #458fec;">791.4,624.0</span>
<svg class="b" style="left:259.20px;top:305.15px;" width="9.2" height="9.2" viewBox="0 0 16 16"><path d="M6.96 7.40 L6.72 7.63 L6.54 7.95 L6.45 8.33 L6.46 8.75 L6.58 9.19 L6.84 9.60 L7.21 9.95 L7.69 10.21 L8.24 10.35 L8.85 10.35 L9.46 10.18 L10.04 9.85 L10.54 9.36 L10.92 8.74 L11.14 8.01 L11.18 7.22 L11.01 6.41 L10.63 5.64 L10.06 4.97 L9.31 4.44 L8.42 4.10 L7.45 3.99 L6.45 4.12 L5.48 4.50 L4.61 5.13 L3.90 5.98 L3.41 7.00 L3.17 8.15 L3.23 9.34 L3.58 10.52 L4.23 11.60 L5.14 12.52 L6.28 13.20 L7.58 13.59 L8.96 13.65 L10.35 13.37 L11.66 12.74 L12.80 11.80 L13.70 10.58 L14.28 9.15 L14.50 7.59 L14.33 5.99 L13.77 4.45 L12.83 3.07" fill="none" stroke="#cdcdcd" stroke-width="1.75" stroke-linecap="round" stroke-linejoin="round"/></svg>
<svg class="b" style="left:330.50px;top:306.65px;" width="4.6" height="6" viewBox="0 0 8 10"><path d="M7.4 0.4V9.6L0.6 5Z" fill="#ececec"/></svg>
<svg class="b" style="left:339.90px;top:306.45px;" width="6.4" height="6.4" viewBox="0 0 12 12"><path d="M6 1L11 6L6 11L1 6Z" fill="none" stroke="#d6d6d6" stroke-width="1.5"/></svg>
<svg class="b" style="left:351.40px;top:306.75px;" width="4.4" height="5.8" viewBox="0 0 8 10"><path d="M0.6 0.4V9.6L7.4 5Z" fill="#6a6a6a"/></svg>
<div class="b" style="left:0.00px;top:315.00px;width:366.50px;height:11.00px;background:#3a3a3c;"></div>
<svg class="b" style="left:4.60px;top:317.97px;" width="7.8" height="5.2" viewBox="0 0 16 10"><path d="M0 5 Q8 -3.5 16 5 Q8 13.5 0 5Z" fill="#f2f2f2"/><circle cx="8" cy="5" r="2.7" fill="#2a2a2c"/></svg>
<div class="b" style="left:24.00px;top:316.92px;width:8.30px;height:7.60px;background:#262628;"></div>
<div class="b" style="left:34.00px;top:316.92px;width:8.30px;height:7.60px;background:#262628;"></div>
<svg class="b" style="left:50.20px;top:319.18px;" width="5.2" height="3.4" viewBox="0 0 10 6"><path d="M0.8 0.8L5 5L9.2 0.8" fill="none" stroke="#c6c6c6" stroke-width="1.8"/></svg>
<div class="b" style="left:57.80px;top:316.52px;width:8.40px;height:8.30px;background:#e2364b;"></div>
<span class="t" style="left:71.59px;top:315.28px;font-size:9px;line-height:10.80px;color:#ececec;transform:scaleX(0.8600);-webkit-text-stroke:0.25px #ececec;">25</span>
<span class="t" style="left:92.50px;top:314.65px;font-size:10.2px;line-height:12.24px;color:#ececec;transform:scaleX(1.0000);font-family:'Liberation Serif',serif;-webkit-text-stroke:0.3px #ececec;">T</span>
<span class="t" style="left:104.00px;top:315.42px;font-size:9.1px;line-height:10.92px;color:#eeeeee;transform:scaleX(0.8650);-webkit-text-stroke:0.28px #eee;">rich</span>
<svg class="b" style="left:159.80px;top:316.68px;" width="8.6" height="7.8" viewBox="0 0 16 14"><path d="M2.8 6.6 A5.2 5.8 0 0 1 13.2 6.6Z" fill="#f0f0f0"/><rect x="0.3" y="6.4" width="15.4" height="2.6" fill="#f0f0f0"/><rect x="2.6" y="8.6" width="2.4" height="4.6" fill="#e8e8e8"/><rect x="6.8" y="8.6" width="2.4" height="4.6" fill="#e8e8e8"/><rect x="11" y="8.6" width="2.4" height="4.6" fill="#e8e8e8"/><rect x="5.6" y="3" width="1.6" height="2.4" fill="#3a3a3c"/><rect x="8.8" y="3" width="1.6" height="2.4" fill="#3a3a3c"/></svg>
<div class="b" style="left:169.20px;top:316.72px;width:8.60px;height:7.80px;background:#262628;"></div>
<svg class="b" style="left:170.00px;top:316.97px;" width="7.2" height="7.2" viewBox="0 0 14 14"><circle cx="7" cy="7" r="2.7" fill="none" stroke="#808082" stroke-width="1.9"/><g stroke="#808082" stroke-width="1.5"><path d="M7 0.5V3M7 11V13.5M0.5 7H3M11 7H13.5M2.4 2.4L4.2 4.2M9.8 9.8L11.6 11.6M2.4 11.6L4.2 9.8M9.8 4.2L11.6 2.4"/></g></svg>
<div class="b" style="left:179.40px;top:316.72px;width:8.80px;height:7.80px;background:#262628;"></div>
<svg class="b" style="left:180.20px;top:316.88px;" width="7.4" height="7.4" viewBox="0 0 10 10"><path d="M1 9.2L9 0.8" stroke="#f0f0f0" stroke-width="1.5" stroke-linecap="round"/></svg>
<div class="b" style="left:209.30px;top:316.72px;width:8.50px;height:7.80px;background:#262628;"></div>
<div class="b" style="left:219.30px;top:316.72px;width:8.50px;height:7.80px;background:#262628;"></div>
<div class="b" style="left:229.30px;top:316.72px;width:8.50px;height:7.80px;background:#262628;"></div>
<svg class="b" style="left:250.60px;top:316.07px;" width="9.2" height="9.2" viewBox="0 0 16 16"><path d="M6.96 7.40 L6.72 7.63 L6.54 7.95 L6.45 8.33 L6.46 8.75 L6.58 9.19 L6.84 9.60 L7.21 9.95 L7.69 10.21 L8.24 10.35 L8.85 10.35 L9.46 10.18 L10.04 9.85 L10.54 9.36 L10.92 8.74 L11.14 8.01 L11.18 7.22 L11.01 6.41 L10.63 5.64 L10.06 4.97 L9.31 4.44 L8.42 4.10 L7.45 3.99 L6.45 4.12 L5.48 4.50 L4.61 5.13 L3.90 5.98 L3.41 7.00 L3.17 8.15 L3.23 9.34 L3.58 10.52 L4.23 11.60 L5.14 12.52 L6.28 13.20 L7.58 13.59 L8.96 13.65 L10.35 13.37 L11.66 12.74 L12.80 11.80 L13.70 10.58 L14.28 9.15 L14.50 7.59 L14.33 5.99 L13.77 4.45 L12.83 3.07" fill="none" stroke="#cdcdcd" stroke-width="1.75" stroke-linecap="round" stroke-linejoin="round"/></svg>
<div class="b" style="left:263.00px;top:316.42px;width:59.30px;height:8.50px;background:#242426;"></div>
<span class="t" style="left:267.80px;top:315.38px;font-size:9px;line-height:10.80px;color:#e8e8e8;transform:scaleX(0.8336);">24. bubble 3</span>
<svg class="b" style="left:313.90px;top:319.07px;" width="5.4" height="3.4" viewBox="0 0 10 6"><path d="M0.8 0.8L5 5L9.2 0.8" fill="none" stroke="#c6c6c6" stroke-width="1.8"/></svg>
<div class="b" style="left:0.00px;top:326.00px;width:366.50px;height:11.00px;background:#2a2a2c;"></div>
<svg class="b" style="left:81.30px;top:326.85px;" width="8.8" height="9.9" viewBox="0 0 16 18"><circle cx="8" cy="10.6" r="5.9" fill="none" stroke="#3f8cec" stroke-width="2.2"/><path d="M5.4 1.7H10.6M8 1.7V4.6M8 10.6L11.2 7" stroke="#3f8cec" stroke-width="2.1" fill="none"/></svg>
<svg class="b" style="left:93.70px;top:328.60px;" width="8" height="7.2" viewBox="0 0 16 14"><path d="M1.2 0.5V12.6H15.5" fill="none" stroke="#d2d2d2" stroke-width="2"/><path d="M3.8 9.6L7 4.8L9.6 8.2L14 3.6" fill="none" stroke="#d2d2d2" stroke-width="1.7"/></svg>
<span class="t" style="left:106.60px;top:326.94px;font-size:9.1px;line-height:10.92px;color:#d2d2d2;transform:scaleX(0.8104);-webkit-text-stroke:0.15px #d2d2d2;">Opacity</span>
<span class="t" style="left:160.00px;top:326.04px;font-size:9.1px;line-height:10.92px;color:#458fec;transform:scaleX(0.7920);-webkit-text-stroke:0.22px #458fec;">0</span>
<span class="t" style="left:166.21px;top:326.30px;font-size:9px;line-height:10.80px;color:#d0d0d0;transform:scaleX(0.7500);">%</span>
<svg class="b" style="left:259.20px;top:327.80px;" width="9.2" height="9.2" viewBox="0 0 16 16"><path d="M6.96 7.40 L6.72 7.63 L6.54 7.95 L6.45 8.33 L6.46 8.75 L6.58 9.19 L6.84 9.60 L7.21 9.95 L7.69 10.21 L8.24 10.35 L8.85 10.35 L9.46 10.18 L10.04 9.85 L10.54 9.36 L10.92 8.74 L11.14 8.01 L11.18 7.22 L11.01 6.41 L10.63 5.64 L10.06 4.97 L9.31 4.44 L8.42 4.10 L7.45 3.99 L6.45 4.12 L5.48 4.50 L4.61 5.13 L3.90 5.98 L3.41 7.00 L3.17 8.15 L3.23 9.34 L3.58 10.52 L4.23 11.60 L5.14 12.52 L6.28 13.20 L7.58 13.59 L8.96 13.65 L10.35 13.37 L11.66 12.74 L12.80 11.80 L13.70 10.58 L14.28 9.15 L14.50 7.59 L14.33 5.99 L13.77 4.45 L12.83 3.07" fill="none" stroke="#cdcdcd" stroke-width="1.75" stroke-linecap="round" stroke-linejoin="round"/></svg>
<svg class="b" style="left:330.50px;top:329.30px;" width="4.6" height="6" viewBox="0 0 8 10"><path d="M7.4 0.4V9.6L0.6 5Z" fill="#ececec"/></svg>
<svg class="b" style="left:339.90px;top:329.10px;" width="6.4" height="6.4" viewBox="0 0 12 12"><path d="M6 1L11 6L6 11L1 6Z" fill="none" stroke="#d6d6d6" stroke-width="1.5"/></svg>
<svg class="b" style="left:351.40px;top:329.40px;" width="4.4" height="5.8" viewBox="0 0 8 10"><path d="M0.6 0.4V9.6L7.4 5Z" fill="#6a6a6a"/></svg>
<div class="b" style="left:0.00px;top:337.00px;width:366.50px;height:12.00px;background:#3a3a3c;"></div>
<svg class="b" style="left:4.60px;top:340.62px;" width="7.8" height="5.2" viewBox="0 0 16 10"><path d="M0 5 Q8 -3.5 16 5 Q8 13.5 0 5Z" fill="#f2f2f2"/><circle cx="8" cy="5" r="2.7" fill="#2a2a2c"/></svg>
<div class="b" style="left:24.00px;top:339.57px;width:8.30px;height:7.60px;background:#262628;"></div>
<div class="b" style="left:34.00px;top:339.57px;width:8.30px;height:7.60px;background:#262628;"></div>
<svg class="b" style="left:50.20px;top:341.82px;" width="5.2" height="3.4" viewBox="0 0 10 6"><path d="M0.8 0.8L5 5L9.2 0.8" fill="none" stroke="#c6c6c6" stroke-width="1.8"/></svg>
<div class="b" style="left:57.80px;top:339.17px;width:8.40px;height:8.30px;background:#e6e3ee;"></div>
<span class="t" style="left:71.59px;top:337.93px;font-size:9px;line-height:10.80px;color:#ececec;transform:scaleX(0.8600);-webkit-text-stroke:0.25px #ececec;">26</span>
<svg class="b" style="left:92.70px;top:338.62px;" width="7" height="9.2" viewBox="0 0 14 18"><path d="M0.5 0.5H10L13.5 4V17.5H0.5Z" fill="#f4f4f6"/><path d="M4.2 6.2H10.2V9.6Q10.2 12.6 7.2 13.2V11.2Q4.2 11 4.2 8.4Z" fill="#2f7de0"/></svg>
<span class="t" style="left:104.00px;top:338.06px;font-size:9.1px;line-height:10.92px;color:#eeeeee;transform:scaleX(0.8650);-webkit-text-stroke:0.28px #eee;">bubble 2</span>
<svg class="b" style="left:159.80px;top:339.32px;" width="8.6" height="7.8" viewBox="0 0 16 14"><path d="M2.8 6.6 A5.2 5.8 0 0 1 13.2 6.6Z" fill="#f0f0f0"/><rect x="0.3" y="6.4" width="15.4" height="2.6" fill="#f0f0f0"/><rect x="2.6" y="8.6" width="2.4" height="4.6" fill="#e8e8e8"/><rect x="6.8" y="8.6" width="2.4" height="4.6" fill="#e8e8e8"/><rect x="11" y="8.6" width="2.4" height="4.6" fill="#e8e8e8"/><rect x="5.6" y="3" width="1.6" height="2.4" fill="#3a3a3c"/><rect x="8.8" y="3" width="1.6" height="2.4" fill="#3a3a3c"/></svg>
<div class="b" style="left:179.40px;top:339.37px;width:8.80px;height:7.80px;background:#262628;"></div>
<svg class="b" style="left:180.20px;top:339.52px;" width="7.4" height="7.4" viewBox="0 0 10 10"><path d="M1 9.2L9 0.8" stroke="#f0f0f0" stroke-width="1.5" stroke-linecap="round"/></svg>
<div class="b" style="left:209.30px;top:339.37px;width:8.50px;height:7.80px;background:#262628;"></div>
<div class="b" style="left:219.30px;top:339.37px;width:8.50px;height:7.80px;background:#262628;"></div>
<div class="b" style="left:229.30px;top:339.37px;width:8.50px;height:7.80px;background:#262628;"></div>
<svg class="b" style="left:250.60px;top:338.72px;" width="9.2" height="9.2" viewBox="0 0 16 16"><path d="M6.96 7.40 L6.72 7.63 L6.54 7.95 L6.45 8.33 L6.46 8.75 L6.58 9.19 L6.84 9.60 L7.21 9.95 L7.69 10.21 L8.24 10.35 L8.85 10.35 L9.46 10.18 L10.04 9.85 L10.54 9.36 L10.92 8.74 L11.14 8.01 L11.18 7.22 L11.01 6.41 L10.63 5.64 L10.06 4.97 L9.31 4.44 L8.42 4.10 L7.45 3.99 L6.45 4.12 L5.48 4.50 L4.61 5.13 L3.90 5.98 L3.41 7.00 L3.17 8.15 L3.23 9.34 L3.58 10.52 L4.23 11.60 L5.14 12.52 L6.28 13.20 L7.58 13.59 L8.96 13.65 L10.35 13.37 L11.66 12.74 L12.80 11.80 L13.70 10.58 L14.28 9.15 L14.50 7.59 L14.33 5.99 L13.77 4.45 L12.83 3.07" fill="none" stroke="#cdcdcd" stroke-width="1.75" stroke-linecap="round" stroke-linejoin="round"/></svg>
<div class="b" style="left:263.00px;top:339.07px;width:59.30px;height:8.50px;background:#242426;"></div>
<span class="t" style="left:267.80px;top:338.02px;font-size:9px;line-height:10.80px;color:#e8e8e8;transform:scaleX(0.8040);">None</span>
<svg class="b" style="left:313.90px;top:341.72px;" width="5.4" height="3.4" viewBox="0 0 10 6"><path d="M0.8 0.8L5 5L9.2 0.8" fill="none" stroke="#c6c6c6" stroke-width="1.8"/></svg>
<div class="b" style="left:0.00px;top:349.00px;width:366.50px;height:11.00px;background:#2a2a2c;"></div>
<svg class="b" style="left:81.30px;top:349.50px;" width="8.8" height="9.9" viewBox="0 0 16 18"><circle cx="8" cy="10.6" r="5.9" fill="none" stroke="#3f8cec" stroke-width="2.2"/><path d="M5.4 1.7H10.6M8 1.7V4.6M8 10.6L11.2 7" stroke="#3f8cec" stroke-width="2.1" fill="none"/></svg>
<svg class="b" style="left:93.70px;top:351.25px;" width="8" height="7.2" viewBox="0 0 16 14"><path d="M1.2 0.5V12.6H15.5" fill="none" stroke="#d2d2d2" stroke-width="2"/><path d="M3.8 9.6L7 4.8L9.6 8.2L14 3.6" fill="none" stroke="#d2d2d2" stroke-width="1.7"/></svg>
<span class="t" style="left:106.60px;top:349.59px;font-size:9.1px;line-height:10.92px;color:#d2d2d2;transform:scaleX(0.8340);-webkit-text-stroke:0.15px #d2d2d2;">Position</span>
<span class="t" style="left:160.00px;top:348.69px;font-size:9.1px;line-height:10.92px;color:#458fec;transform:scaleX(0.7920);-webkit-text-stroke:0.22px #458fec;">651.4,624.0</span>
<svg class="b" style="left:259.20px;top:350.45px;" width="9.2" height="9.2" viewBox="0 0 16 16"><path d="M6.96 7.40 L6.72 7.63 L6.54 7.95 L6.45 8.33 L6.46 8.75 L6.58 9.19 L6.84 9.60 L7.21 9.95 L7.69 10.21 L8.24 10.35 L8.85 10.35 L9.46 10.18 L10.04 9.85 L10.54 9.36 L10.92 8.74 L11.14 8.01 L11.18 7.22 L11.01 6.41 L10.63 5.64 L10.06 4.97 L9.31 4.44 L8.42 4.10 L7.45 3.99 L6.45 4.12 L5.48 4.50 L4.61 5.13 L3.90 5.98 L3.41 7.00 L3.17 8.15 L3.23 9.34 L3.58 10.52 L4.23 11.60 L5.14 12.52 L6.28 13.20 L7.58 13.59 L8.96 13.65 L10.35 13.37 L11.66 12.74 L12.80 11.80 L13.70 10.58 L14.28 9.15 L14.50 7.59 L14.33 5.99 L13.77 4.45 L12.83 3.07" fill="none" stroke="#cdcdcd" stroke-width="1.75" stroke-linecap="round" stroke-linejoin="round"/></svg>
<svg class="b" style="left:330.50px;top:351.95px;" width="4.6" height="6" viewBox="0 0 8 10"><path d="M7.4 0.4V9.6L0.6 5Z" fill="#ececec"/></svg>
<svg class="b" style="left:339.90px;top:351.75px;" width="6.4" height="6.4" viewBox="0 0 12 12"><path d="M6 1L11 6L6 11L1 6Z" fill="none" stroke="#d6d6d6" stroke-width="1.5"/></svg>
<svg class="b" style="left:351.40px;top:352.05px;" width="4.4" height="5.8" viewBox="0 0 8 10"><path d="M0.6 0.4V9.6L7.4 5Z" fill="#6a6a6a"/></svg>
<div class="b" style="left:0.00px;top:360.00px;width:366.50px;height:11.00px;background:#3a3a3c;"></div>
<svg class="b" style="left:4.60px;top:363.27px;" width="7.8" height="5.2" viewBox="0 0 16 10"><path d="M0 5 Q8 -3.5 16 5 Q8 13.5 0 5Z" fill="#f2f2f2"/><circle cx="8" cy="5" r="2.7" fill="#2a2a2c"/></svg>
<div class="b" style="left:24.00px;top:362.22px;width:8.30px;height:7.60px;background:#262628;"></div>
<div class="b" style="left:34.00px;top:362.22px;width:8.30px;height:7.60px;background:#262628;"></div>
<svg class="b" style="left:50.20px;top:364.48px;" width="5.2" height="3.4" viewBox="0 0 10 6"><path d="M0.8 0.8L5 5L9.2 0.8" fill="none" stroke="#c6c6c6" stroke-width="1.8"/></svg>
<div class="b" style="left:57.80px;top:361.82px;width:8.40px;height:8.30px;background:#e2364b;"></div>
<span class="t" style="left:71.59px;top:360.58px;font-size:9px;line-height:10.80px;color:#ececec;transform:scaleX(0.8600);-webkit-text-stroke:0.25px #ececec;">27</span>
<span class="t" style="left:92.50px;top:359.95px;font-size:10.2px;line-height:12.24px;color:#ececec;transform:scaleX(1.0000);font-family:'Liberation Serif',serif;-webkit-text-stroke:0.3px #ececec;">T</span>
<span class="t" style="left:104.00px;top:360.72px;font-size:9.1px;line-height:10.92px;color:#eeeeee;transform:scaleX(0.8650);-webkit-text-stroke:0.28px #eee;">is</span>
<svg class="b" style="left:159.80px;top:361.98px;" width="8.6" height="7.8" viewBox="0 0 16 14"><path d="M2.8 6.6 A5.2 5.8 0 0 1 13.2 6.6Z" fill="#f0f0f0"/><rect x="0.3" y="6.4" width="15.4" height="2.6" fill="#f0f0f0"/><rect x="2.6" y="8.6" width="2.4" height="4.6" fill="#e8e8e8"/><rect x="6.8" y="8.6" width="2.4" height="4.6" fill="#e8e8e8"/><rect x="11" y="8.6" width="2.4" height="4.6" fill="#e8e8e8"/><rect x="5.6" y="3" width="1.6" height="2.4" fill="#3a3a3c"/><rect x="8.8" y="3" width="1.6" height="2.4" fill="#3a3a3c"/></svg>
<div class="b" style="left:169.20px;top:362.02px;width:8.60px;height:7.80px;background:#262628;"></div>
<svg class="b" style="left:170.00px;top:362.27px;" width="7.2" height="7.2" viewBox="0 0 14 14"><circle cx="7" cy="7" r="2.7" fill="none" stroke="#808082" stroke-width="1.9"/><g stroke="#808082" stroke-width="1.5"><path d="M7 0.5V3M7 11V13.5M0.5 7H3M11 7H13.5M2.4 2.4L4.2 4.2M9.8 9.8L11.6 11.6M2.4 11.6L4.2 9.8M9.8 4.2L11.6 2.4"/></g></svg>
<div class="b" style="left:179.40px;top:362.02px;width:8.80px;height:7.80px;background:#262628;"></div>
<svg class="b" style="left:180.20px;top:362.18px;" width="7.4" height="7.4" viewBox="0 0 10 10"><path d="M1 9.2L9 0.8" stroke="#f0f0f0" stroke-width="1.5" stroke-linecap="round"/></svg>
<div class="b" style="left:209.30px;top:362.02px;width:8.50px;height:7.80px;background:#262628;"></div>
<div class="b" style="left:219.30px;top:362.02px;width:8.50px;height:7.80px;background:#262628;"></div>
<div class="b" style="left:229.30px;top:362.02px;width:8.50px;height:7.80px;background:#262628;"></div>
<svg class="b" style="left:250.60px;top:361.38px;" width="9.2" height="9.2" viewBox="0 0 16 16"><path d="M6.96 7.40 L6.72 7.63 L6.54 7.95 L6.45 8.33 L6.46 8.75 L6.58 9.19 L6.84 9.60 L7.21 9.95 L7.69 10.21 L8.24 10.35 L8.85 10.35 L9.46 10.18 L10.04 9.85 L10.54 9.36 L10.92 8.74 L11.14 8.01 L11.18 7.22 L11.01 6.41 L10.63 5.64 L10.06 4.97 L9.31 4.44 L8.42 4.10 L7.45 3.99 L6.45 4.12 L5.48 4.50 L4.61 5.13 L3.90 5.98 L3.41 7.00 L3.17 8.15 L3.23 9.34 L3.58 10.52 L4.23 11.60 L5.14 12.52 L6.28 13.20 L7.58 13.59 L8.96 13.65 L10.35 13.37 L11.66 12.74 L12.80 11.80 L13.70 10.58 L14.28 9.15 L14.50 7.59 L14.33 5.99 L13.77 4.45 L12.83 3.07" fill="none" stroke="#cdcdcd" stroke-width="1.75" stroke-linecap="round" stroke-linejoin="round"/></svg>
<div class="b" style="left:263.00px;top:361.72px;width:59.30px;height:8.50px;background:#242426;"></div>
<span class="t" style="left:267.80px;top:360.68px;font-size:9px;line-height:10.80px;color:#e8e8e8;transform:scaleX(0.8336);">26. bubble 2</span>
<svg class="b" style="left:313.90px;top:364.38px;" width="5.4" height="3.4" viewBox="0 0 10 6"><path d="M0.8 0.8L5 5L9.2 0.8" fill="none" stroke="#c6c6c6" stroke-width="1.8"/></svg>
<div class="b" style="left:0.00px;top:371.00px;width:366.50px;height:12.00px;background:#2a2a2c;"></div>
<svg class="b" style="left:81.30px;top:372.15px;" width="8.8" height="9.9" viewBox="0 0 16 18"><circle cx="8" cy="10.6" r="5.9" fill="none" stroke="#3f8cec" stroke-width="2.2"/><path d="M5.4 1.7H10.6M8 1.7V4.6M8 10.6L11.2 7" stroke="#3f8cec" stroke-width="2.1" fill="none"/></svg>
<svg class="b" style="left:93.70px;top:373.90px;" width="8" height="7.2" viewBox="0 0 16 14"><path d="M1.2 0.5V12.6H15.5" fill="none" stroke="#d2d2d2" stroke-width="2"/><path d="M3.8 9.6L7 4.8L9.6 8.2L14 3.6" fill="none" stroke="#d2d2d2" stroke-width="1.7"/></svg>
<span class="t" style="left:106.60px;top:372.24px;font-size:9.1px;line-height:10.92px;color:#d2d2d2;transform:scaleX(0.8104);-webkit-text-stroke:0.15px #d2d2d2;">Opacity</span>
<span class="t" style="left:160.00px;top:371.34px;font-size:9.1px;line-height:10.92px;color:#458fec;transform:scaleX(0.7920);-webkit-text-stroke:0.22px #458fec;">0</span>
<span class="t" style="left:166.21px;top:371.60px;font-size:9px;line-height:10.80px;color:#d0d0d0;transform:scaleX(0.7500);">%</span>
<svg class="b" style="left:259.20px;top:373.10px;" width="9.2" height="9.2" viewBox="0 0 16 16"><path d="M6.96 7.40 L6.72 7.63 L6.54 7.95 L6.45 8.33 L6.46 8.75 L6.58 9.19 L6.84 9.60 L7.21 9.95 L7.69 10.21 L8.24 10.35 L8.85 10.35 L9.46 10.18 L10.04 9.85 L10.54 9.36 L10.92 8.74 L11.14 8.01 L11.18 7.22 L11.01 6.41 L10.63 5.64 L10.06 4.97 L9.31 4.44 L8.42 4.10 L7.45 3.99 L6.45 4.12 L5.48 4.50 L4.61 5.13 L3.90 5.98 L3.41 7.00 L3.17 8.15 L3.23 9.34 L3.58 10.52 L4.23 11.60 L5.14 12.52 L6.28 13.20 L7.58 13.59 L8.96 13.65 L10.35 13.37 L11.66 12.74 L12.80 11.80 L13.70 10.58 L14.28 9.15 L14.50 7.59 L14.33 5.99 L13.77 4.45 L12.83 3.07" fill="none" stroke="#cdcdcd" stroke-width="1.75" stroke-linecap="round" stroke-linejoin="round"/></svg>
<svg class="b" style="left:330.50px;top:374.60px;" width="4.6" height="6" viewBox="0 0 8 10"><path d="M7.4 0.4V9.6L0.6 5Z" fill="#ececec"/></svg>
<svg class="b" style="left:339.90px;top:374.40px;" width="6.4" height="6.4" viewBox="0 0 12 12"><path d="M6 1L11 6L6 11L1 6Z" fill="none" stroke="#d6d6d6" stroke-width="1.5"/></svg>
<svg class="b" style="left:351.40px;top:374.70px;" width="4.4" height="5.8" viewBox="0 0 8 10"><path d="M0.6 0.4V9.6L7.4 5Z" fill="#6a6a6a"/></svg>
<div class="b" style="left:0.00px;top:383.00px;width:366.50px;height:11.00px;background:#3a3a3c;"></div>
<svg class="b" style="left:4.60px;top:385.92px;" width="7.8" height="5.2" viewBox="0 0 16 10"><path d="M0 5 Q8 -3.5 16 5 Q8 13.5 0 5Z" fill="#f2f2f2"/><circle cx="8" cy="5" r="2.7" fill="#2a2a2c"/></svg>
<div class="b" style="left:24.00px;top:384.87px;width:8.30px;height:7.60px;background:#262628;"></div>
<div class="b" style="left:34.00px;top:384.87px;width:8.30px;height:7.60px;background:#262628;"></div>
<svg class="b" style="left:50.20px;top:387.12px;" width="5.2" height="3.4" viewBox="0 0 10 6"><path d="M0.8 0.8L5 5L9.2 0.8" fill="none" stroke="#c6c6c6" stroke-width="1.8"/></svg>
<div class="b" style="left:57.80px;top:384.47px;width:8.40px;height:8.30px;background:#e6e3ee;"></div>
<span class="t" style="left:71.59px;top:383.23px;font-size:9px;line-height:10.80px;color:#ececec;transform:scaleX(0.8600);-webkit-text-stroke:0.25px #ececec;">28</span>
<svg class="b" style="left:92.70px;top:383.92px;" width="7" height="9.2" viewBox="0 0 14 18"><path d="M0.5 0.5H10L13.5 4V17.5H0.5Z" fill="#f4f4f6"/><path d="M4.2 6.2H10.2V9.6Q10.2 12.6 7.2 13.2V11.2Q4.2 11 4.2 8.4Z" fill="#2f7de0"/></svg>
<span class="t" style="left:104.00px;top:383.37px;font-size:9.1px;line-height:10.92px;color:#eeeeee;transform:scaleX(0.8650);-webkit-text-stroke:0.28px #eee;">bubble 1</span>
<svg class="b" style="left:159.80px;top:384.62px;" width="8.6" height="7.8" viewBox="0 0 16 14"><path d="M2.8 6.6 A5.2 5.8 0 0 1 13.2 6.6Z" fill="#f0f0f0"/><rect x="0.3" y="6.4" width="15.4" height="2.6" fill="#f0f0f0"/><rect x="2.6" y="8.6" width="2.4" height="4.6" fill="#e8e8e8"/><rect x="6.8" y="8.6" width="2.4" height="4.6" fill="#e8e8e8"/><rect x="11" y="8.6" width="2.4" height="4.6" fill="#e8e8e8"/><rect x="5.6" y="3" width="1.6" height="2.4" fill="#3a3a3c"/><rect x="8.8" y="3" width="1.6" height="2.4" fill="#3a3a3c"/></svg>
<div class="b" style="left:179.40px;top:384.67px;width:8.80px;height:7.80px;background:#262628;"></div>
<svg class="b" style="left:180.20px;top:384.82px;" width="7.4" height="7.4" viewBox="0 0 10 10"><path d="M1 9.2L9 0.8" stroke="#f0f0f0" stroke-width="1.5" stroke-linecap="round"/></svg>
<div class="b" style="left:209.30px;top:384.67px;width:8.50px;height:7.80px;background:#262628;"></div>
<div class="b" style="left:219.30px;top:384.67px;width:8.50px;height:7.80px;background:#262628;"></div>
<div class="b" style="left:229.30px;top:384.67px;width:8.50px;height:7.80px;background:#262628;"></div>
<svg class="b" style="left:250.60px;top:384.02px;" width="9.2" height="9.2" viewBox="0 0 16 16"><path d="M6.96 7.40 L6.72 7.63 L6.54 7.95 L6.45 8.33 L6.46 8.75 L6.58 9.19 L6.84 9.60 L7.21 9.95 L7.69 10.21 L8.24 10.35 L8.85 10.35 L9.46 10.18 L10.04 9.85 L10.54 9.36 L10.92 8.74 L11.14 8.01 L11.18 7.22 L11.01 6.41 L10.63 5.64 L10.06 4.97 L9.31 4.44 L8.42 4.10 L7.45 3.99 L6.45 4.12 L5.48 4.50 L4.61 5.13 L3.90 5.98 L3.41 7.00 L3.17 8.15 L3.23 9.34 L3.58 10.52 L4.23 11.60 L5.14 12.52 L6.28 13.20 L7.58 13.59 L8.96 13.65 L10.35 13.37 L11.66 12.74 L12.80 11.80 L13.70 10.58 L14.28 9.15 L14.50 7.59 L14.33 5.99 L13.77 4.45 L12.83 3.07" fill="none" stroke="#cdcdcd" stroke-width="1.75" stroke-linecap="round" stroke-linejoin="round"/></svg>
<div class="b" style="left:263.00px;top:384.37px;width:59.30px;height:8.50px;background:#242426;"></div>
<span class="t" style="left:267.80px;top:383.32px;font-size:9px;line-height:10.80px;color:#e8e8e8;transform:scaleX(0.8040);">None</span>
<svg class="b" style="left:313.90px;top:387.02px;" width="5.4" height="3.4" viewBox="0 0 10 6"><path d="M0.8 0.8L5 5L9.2 0.8" fill="none" stroke="#c6c6c6" stroke-width="1.8"/></svg>
<div class="b" style="left:0.00px;top:394.00px;width:366.50px;height:11.00px;background:#2a2a2c;"></div>
<svg class="b" style="left:81.30px;top:394.80px;" width="8.8" height="9.9" viewBox="0 0 16 18"><circle cx="8" cy="10.6" r="5.9" fill="none" stroke="#3f8cec" stroke-width="2.2"/><path d="M5.4 1.7H10.6M8 1.7V4.6M8 10.6L11.2 7" stroke="#3f8cec" stroke-width="2.1" fill="none"/></svg>
<svg class="b" style="left:93.70px;top:396.55px;" width="8" height="7.2" viewBox="0 0 16 14"><path d="M1.2 0.5V12.6H15.5" fill="none" stroke="#d2d2d2" stroke-width="2"/><path d="M3.8 9.6L7 4.8L9.6 8.2L14 3.6" fill="none" stroke="#d2d2d2" stroke-width="1.7"/></svg>
<span class="t" style="left:106.60px;top:394.89px;font-size:9.1px;line-height:10.92px;color:#d2d2d2;transform:scaleX(0.8340);-webkit-text-stroke:0.15px #d2d2d2;">Position</span>
<span class="t" style="left:160.00px;top:393.99px;font-size:9.1px;line-height:10.92px;color:#458fec;transform:scaleX(0.7920);-webkit-text-stroke:0.22px #458fec;">371.4,624.0</span>
<svg class="b" style="left:259.20px;top:395.75px;" width="9.2" height="9.2" viewBox="0 0 16 16"><path d="M6.96 7.40 L6.72 7.63 L6.54 7.95 L6.45 8.33 L6.46 8.75 L6.58 9.19 L6.84 9.60 L7.21 9.95 L7.69 10.21 L8.24 10.35 L8.85 10.35 L9.46 10.18 L10.04 9.85 L10.54 9.36 L10.92 8.74 L11.14 8.01 L11.18 7.22 L11.01 6.41 L10.63 5.64 L10.06 4.97 L9.31 4.44 L8.42 4.10 L7.45 3.99 L6.45 4.12 L5.48 4.50 L4.61 5.13 L3.90 5.98 L3.41 7.00 L3.17 8.15 L3.23 9.34 L3.58 10.52 L4.23 11.60 L5.14 12.52 L6.28 13.20 L7.58 13.59 L8.96 13.65 L10.35 13.37 L11.66 12.74 L12.80 11.80 L13.70 10.58 L14.28 9.15 L14.50 7.59 L14.33 5.99 L13.77 4.45 L12.83 3.07" fill="none" stroke="#cdcdcd" stroke-width="1.75" stroke-linecap="round" stroke-linejoin="round"/></svg>
<svg class="b" style="left:330.50px;top:397.25px;" width="4.6" height="6" viewBox="0 0 8 10"><path d="M7.4 0.4V9.6L0.6 5Z" fill="#ececec"/></svg>
<svg class="b" style="left:339.90px;top:397.05px;" width="6.4" height="6.4" viewBox="0 0 12 12"><path d="M6 1L11 6L6 11L1 6Z" fill="none" stroke="#d6d6d6" stroke-width="1.5"/></svg>
<svg class="b" style="left:351.40px;top:397.35px;" width="4.4" height="5.8" viewBox="0 0 8 10"><path d="M0.6 0.4V9.6L7.4 5Z" fill="#6a6a6a"/></svg>
<div class="b" style="left:0.00px;top:405.00px;width:366.50px;height:12.00px;background:#3a3a3c;"></div>
<svg class="b" style="left:4.60px;top:408.57px;" width="7.8" height="5.2" viewBox="0 0 16 10"><path d="M0 5 Q8 -3.5 16 5 Q8 13.5 0 5Z" fill="#f2f2f2"/><circle cx="8" cy="5" r="2.7" fill="#2a2a2c"/></svg>
<div class="b" style="left:24.00px;top:407.52px;width:8.30px;height:7.60px;background:#262628;"></div>
<div class="b" style="left:34.00px;top:407.52px;width:8.30px;height:7.60px;background:#262628;"></div>
<svg class="b" style="left:50.20px;top:409.77px;" width="5.2" height="3.4" viewBox="0 0 10 6"><path d="M0.8 0.8L5 5L9.2 0.8" fill="none" stroke="#c6c6c6" stroke-width="1.8"/></svg>
<div class="b" style="left:57.80px;top:407.12px;width:8.40px;height:8.30px;background:#e2364b;"></div>
<span class="t" style="left:71.59px;top:405.88px;font-size:9px;line-height:10.80px;color:#ececec;transform:scaleX(0.8600);-webkit-text-stroke:0.25px #ececec;">29</span>
<span class="t" style="left:92.50px;top:405.25px;font-size:10.2px;line-height:12.24px;color:#ececec;transform:scaleX(1.0000);font-family:'Liberation Serif',serif;-webkit-text-stroke:0.3px #ececec;">T</span>
<span class="t" style="left:104.00px;top:406.01px;font-size:9.1px;line-height:10.92px;color:#eeeeee;transform:scaleX(0.8650);-webkit-text-stroke:0.28px #eee;">Burnergum</span>
<svg class="b" style="left:159.80px;top:407.27px;" width="8.6" height="7.8" viewBox="0 0 16 14"><path d="M2.8 6.6 A5.2 5.8 0 0 1 13.2 6.6Z" fill="#f0f0f0"/><rect x="0.3" y="6.4" width="15.4" height="2.6" fill="#f0f0f0"/><rect x="2.6" y="8.6" width="2.4" height="4.6" fill="#e8e8e8"/><rect x="6.8" y="8.6" width="2.4" height="4.6" fill="#e8e8e8"/><rect x="11" y="8.6" width="2.4" height="4.6" fill="#e8e8e8"/><rect x="5.6" y="3" width="1.6" height="2.4" fill="#3a3a3c"/><rect x="8.8" y="3" width="1.6" height="2.4" fill="#3a3a3c"/></svg>
<div class="b" style="left:169.20px;top:407.32px;width:8.60px;height:7.80px;background:#262628;"></div>
<svg class="b" style="left:170.00px;top:407.57px;" width="7.2" height="7.2" viewBox="0 0 14 14"><circle cx="7" cy="7" r="2.7" fill="none" stroke="#808082" stroke-width="1.9"/><g stroke="#808082" stroke-width="1.5"><path d="M7 0.5V3M7 11V13.5M0.5 7H3M11 7H13.5M2.4 2.4L4.2 4.2M9.8 9.8L11.6 11.6M2.4 11.6L4.2 9.8M9.8 4.2L11.6 2.4"/></g></svg>
<div class="b" style="left:179.40px;top:407.32px;width:8.80px;height:7.80px;background:#262628;"></div>
<svg class="b" style="left:180.20px;top:407.47px;" width="7.4" height="7.4" viewBox="0 0 10 10"><path d="M1 9.2L9 0.8" stroke="#f0f0f0" stroke-width="1.5" stroke-linecap="round"/></svg>
<div class="b" style="left:209.30px;top:407.32px;width:8.50px;height:7.80px;background:#262628;"></div>
<div class="b" style="left:219.30px;top:407.32px;width:8.50px;height:7.80px;background:#262628;"></div>
<div class="b" style="left:229.30px;top:407.32px;width:8.50px;height:7.80px;background:#262628;"></div>
<svg class="b" style="left:250.60px;top:406.67px;" width="9.2" height="9.2" viewBox="0 0 16 16"><path d="M6.96 7.40 L6.72 7.63 L6.54 7.95 L6.45 8.33 L6.46 8.75 L6.58 9.19 L6.84 9.60 L7.21 9.95 L7.69 10.21 L8.24 10.35 L8.85 10.35 L9.46 10.18 L10.04 9.85 L10.54 9.36 L10.92 8.74 L11.14 8.01 L11.18 7.22 L11.01 6.41 L10.63 5.64 L10.06 4.97 L9.31 4.44 L8.42 4.10 L7.45 3.99 L6.45 4.12 L5.48 4.50 L4.61 5.13 L3.90 5.98 L3.41 7.00 L3.17 8.15 L3.23 9.34 L3.58 10.52 L4.23 11.60 L5.14 12.52 L6.28 13.20 L7.58 13.59 L8.96 13.65 L10.35 13.37 L11.66 12.74 L12.80 11.80 L13.70 10.58 L14.28 9.15 L14.50 7.59 L14.33 5.99 L13.77 4.45 L12.83 3.07" fill="none" stroke="#cdcdcd" stroke-width="1.75" stroke-linecap="round" stroke-linejoin="round"/></svg>
<div class="b" style="left:263.00px;top:407.02px;width:59.30px;height:8.50px;background:#242426;"></div>
<span class="t" style="left:267.80px;top:405.97px;font-size:9px;line-height:10.80px;color:#e8e8e8;transform:scaleX(0.8336);">28. bubble 1</span>
<svg class="b" style="left:313.90px;top:409.67px;" width="5.4" height="3.4" viewBox="0 0 10 6"><path d="M0.8 0.8L5 5L9.2 0.8" fill="none" stroke="#c6c6c6" stroke-width="1.8"/></svg>
<div class="b" style="left:0.00px;top:417.00px;width:366.50px;height:11.00px;background:#2a2a2c;"></div>
<svg class="b" style="left:81.30px;top:417.45px;" width="8.8" height="9.9" viewBox="0 0 16 18"><circle cx="8" cy="10.6" r="5.9" fill="none" stroke="#3f8cec" stroke-width="2.2"/><path d="M5.4 1.7H10.6M8 1.7V4.6M8 10.6L11.2 7" stroke="#3f8cec" stroke-width="2.1" fill="none"/></svg>
<svg class="b" style="left:93.70px;top:419.20px;" width="8" height="7.2" viewBox="0 0 16 14"><path d="M1.2 0.5V12.6H15.5" fill="none" stroke="#d2d2d2" stroke-width="2"/><path d="M3.8 9.6L7 4.8L9.6 8.2L14 3.6" fill="none" stroke="#d2d2d2" stroke-width="1.7"/></svg>
<span class="t" style="left:106.60px;top:417.54px;font-size:9.1px;line-height:10.92px;color:#d2d2d2;transform:scaleX(0.7204);-webkit-text-stroke:0.15px #d2d2d2;">Scale</span>
<svg class="b" style="left:159.00px;top:420.60px;" width="9" height="4" viewBox="0 0 18 8"><rect x="1" y="1.2" width="9.5" height="5.6" rx="2.8" fill="none" stroke="#ececec" stroke-width="2.2"/><rect x="7.5" y="1.2" width="9.5" height="5.6" rx="2.8" fill="none" stroke="#ececec" stroke-width="2.2"/></svg>
<span class="t" style="left:170.50px;top:416.64px;font-size:9.1px;line-height:10.92px;color:#458fec;transform:scaleX(0.7920);-webkit-text-stroke:0.22px #458fec;">167.3,167.3</span>
<span class="t" style="left:209.77px;top:416.90px;font-size:9px;line-height:10.80px;color:#d0d0d0;transform:scaleX(0.7500);">%</span>
<svg class="b" style="left:259.20px;top:418.40px;" width="9.2" height="9.2" viewBox="0 0 16 16"><path d="M6.96 7.40 L6.72 7.63 L6.54 7.95 L6.45 8.33 L6.46 8.75 L6.58 9.19 L6.84 9.60 L7.21 9.95 L7.69 10.21 L8.24 10.35 L8.85 10.35 L9.46 10.18 L10.04 9.85 L10.54 9.36 L10.92 8.74 L11.14 8.01 L11.18 7.22 L11.01 6.41 L10.63 5.64 L10.06 4.97 L9.31 4.44 L8.42 4.10 L7.45 3.99 L6.45 4.12 L5.48 4.50 L4.61 5.13 L3.90 5.98 L3.41 7.00 L3.17 8.15 L3.23 9.34 L3.58 10.52 L4.23 11.60 L5.14 12.52 L6.28 13.20 L7.58 13.59 L8.96 13.65 L10.35 13.37 L11.66 12.74 L12.80 11.80 L13.70 10.58 L14.28 9.15 L14.50 7.59 L14.33 5.99 L13.77 4.45 L12.83 3.07" fill="none" stroke="#cdcdcd" stroke-width="1.75" stroke-linecap="round" stroke-linejoin="round"/></svg>
<svg class="b" style="left:330.50px;top:419.90px;" width="4.6" height="6" viewBox="0 0 8 10"><path d="M7.4 0.4V9.6L0.6 5Z" fill="#ececec"/></svg>
<svg class="b" style="left:339.90px;top:419.70px;" width="6.4" height="6.4" viewBox="0 0 12 12"><path d="M6 1L11 6L6 11L1 6Z" fill="none" stroke="#d6d6d6" stroke-width="1.5"/></svg>
<svg class="b" style="left:351.40px;top:420.00px;" width="4.4" height="5.8" viewBox="0 0 8 10"><path d="M0.6 0.4V9.6L7.4 5Z" fill="#6a6a6a"/></svg>
<div class="b" style="left:0.00px;top:428.00px;width:366.50px;height:11.00px;background:#2a2a2c;"></div>
<svg class="b" style="left:81.30px;top:428.77px;" width="8.8" height="9.9" viewBox="0 0 16 18"><circle cx="8" cy="10.6" r="5.9" fill="none" stroke="#3f8cec" stroke-width="2.2"/><path d="M5.4 1.7H10.6M8 1.7V4.6M8 10.6L11.2 7" stroke="#3f8cec" stroke-width="2.1" fill="none"/></svg>
<svg class="b" style="left:93.70px;top:430.52px;" width="8" height="7.2" viewBox="0 0 16 14"><path d="M1.2 0.5V12.6H15.5" fill="none" stroke="#d2d2d2" stroke-width="2"/><path d="M3.8 9.6L7 4.8L9.6 8.2L14 3.6" fill="none" stroke="#d2d2d2" stroke-width="1.7"/></svg>
<span class="t" style="left:106.60px;top:428.87px;font-size:9.1px;line-height:10.92px;color:#d2d2d2;transform:scaleX(0.8104);-webkit-text-stroke:0.15px #d2d2d2;">Opacity</span>
<span class="t" style="left:160.00px;top:427.96px;font-size:9.1px;line-height:10.92px;color:#458fec;transform:scaleX(0.7920);-webkit-text-stroke:0.22px #458fec;">0</span>
<span class="t" style="left:166.21px;top:428.22px;font-size:9px;line-height:10.80px;color:#d0d0d0;transform:scaleX(0.7500);">%</span>
<svg class="b" style="left:259.20px;top:429.72px;" width="9.2" height="9.2" viewBox="0 0 16 16"><path d="M6.96 7.40 L6.72 7.63 L6.54 7.95 L6.45 8.33 L6.46 8.75 L6.58 9.19 L6.84 9.60 L7.21 9.95 L7.69 10.21 L8.24 10.35 L8.85 10.35 L9.46 10.18 L10.04 9.85 L10.54 9.36 L10.92 8.74 L11.14 8.01 L11.18 7.22 L11.01 6.41 L10.63 5.64 L10.06 4.97 L9.31 4.44 L8.42 4.10 L7.45 3.99 L6.45 4.12 L5.48 4.50 L4.61 5.13 L3.90 5.98 L3.41 7.00 L3.17 8.15 L3.23 9.34 L3.58 10.52 L4.23 11.60 L5.14 12.52 L6.28 13.20 L7.58 13.59 L8.96 13.65 L10.35 13.37 L11.66 12.74 L12.80 11.80 L13.70 10.58 L14.28 9.15 L14.50 7.59 L14.33 5.99 L13.77 4.45 L12.83 3.07" fill="none" stroke="#cdcdcd" stroke-width="1.75" stroke-linecap="round" stroke-linejoin="round"/></svg>
<svg class="b" style="left:330.50px;top:431.22px;" width="4.6" height="6" viewBox="0 0 8 10"><path d="M7.4 0.4V9.6L0.6 5Z" fill="#ececec"/></svg>
<svg class="b" style="left:339.90px;top:431.02px;" width="6.4" height="6.4" viewBox="0 0 12 12"><path d="M6 1L11 6L6 11L1 6Z" fill="none" stroke="#d6d6d6" stroke-width="1.5"/></svg>
<svg class="b" style="left:351.40px;top:431.32px;" width="4.4" height="5.8" viewBox="0 0 8 10"><path d="M0.6 0.4V9.6L7.4 5Z" fill="#6a6a6a"/></svg>
<div class="b" style="left:0.00px;top:439.00px;width:366.50px;height:12.00px;background:#3a3a3c;"></div>
<svg class="b" style="left:4.60px;top:442.55px;" width="7.8" height="5.2" viewBox="0 0 16 10"><path d="M0 5 Q8 -3.5 16 5 Q8 13.5 0 5Z" fill="#f2f2f2"/><circle cx="8" cy="5" r="2.7" fill="#2a2a2c"/></svg>
<div class="b" style="left:24.00px;top:441.50px;width:8.30px;height:7.60px;background:#262628;"></div>
<div class="b" style="left:34.00px;top:441.50px;width:8.30px;height:7.60px;background:#262628;"></div>
<svg class="b" style="left:50.20px;top:443.75px;" width="5.2" height="3.4" viewBox="0 0 10 6"><path d="M0.8 0.8L5 5L9.2 0.8" fill="none" stroke="#c6c6c6" stroke-width="1.8"/></svg>
<div class="b" style="left:57.80px;top:441.10px;width:8.40px;height:8.30px;background:#6aa5f7;"></div>
<span class="t" style="left:71.59px;top:439.85px;font-size:9px;line-height:10.80px;color:#ececec;transform:scaleX(0.8600);-webkit-text-stroke:0.25px #ececec;">30</span>
<svg class="b" style="left:91.80px;top:441.15px;" width="7.8" height="7.8" viewBox="0 0 20 20"><path d="M10 0.8L12.7 7.2L19.6 7.7L14.3 12.2L16 19L10 15.3L4 19L5.7 12.2L0.4 7.7L7.3 7.2Z" fill="#f2f2f2"/></svg>
<span class="t" style="left:104.00px;top:439.99px;font-size:9.1px;line-height:10.92px;color:#eeeeee;transform:scaleX(0.8650);-webkit-text-stroke:0.28px #eee;">land 1</span>
<svg class="b" style="left:159.80px;top:441.25px;" width="8.6" height="7.8" viewBox="0 0 16 14"><path d="M2.8 6.6 A5.2 5.8 0 0 1 13.2 6.6Z" fill="#f0f0f0"/><rect x="0.3" y="6.4" width="15.4" height="2.6" fill="#f0f0f0"/><rect x="2.6" y="8.6" width="2.4" height="4.6" fill="#e8e8e8"/><rect x="6.8" y="8.6" width="2.4" height="4.6" fill="#e8e8e8"/><rect x="11" y="8.6" width="2.4" height="4.6" fill="#e8e8e8"/><rect x="5.6" y="3" width="1.6" height="2.4" fill="#3a3a3c"/><rect x="8.8" y="3" width="1.6" height="2.4" fill="#3a3a3c"/></svg>
<div class="b" style="left:169.20px;top:441.30px;width:8.60px;height:7.80px;background:#262628;"></div>
<svg class="b" style="left:170.00px;top:441.55px;" width="7.2" height="7.2" viewBox="0 0 14 14"><circle cx="7" cy="7" r="2.7" fill="none" stroke="#808082" stroke-width="1.9"/><g stroke="#808082" stroke-width="1.5"><path d="M7 0.5V3M7 11V13.5M0.5 7H3M11 7H13.5M2.4 2.4L4.2 4.2M9.8 9.8L11.6 11.6M2.4 11.6L4.2 9.8M9.8 4.2L11.6 2.4"/></g></svg>
<div class="b" style="left:179.40px;top:441.30px;width:8.80px;height:7.80px;background:#262628;"></div>
<svg class="b" style="left:180.20px;top:441.45px;" width="7.4" height="7.4" viewBox="0 0 10 10"><path d="M1 9.2L9 0.8" stroke="#f0f0f0" stroke-width="1.5" stroke-linecap="round"/></svg>
<div class="b" style="left:209.30px;top:441.30px;width:8.50px;height:7.80px;background:#262628;"></div>
<div class="b" style="left:219.30px;top:441.30px;width:8.50px;height:7.80px;background:#262628;"></div>
<div class="b" style="left:229.30px;top:441.30px;width:8.50px;height:7.80px;background:#262628;"></div>
<svg class="b" style="left:250.60px;top:440.65px;" width="9.2" height="9.2" viewBox="0 0 16 16"><path d="M6.96 7.40 L6.72 7.63 L6.54 7.95 L6.45 8.33 L6.46 8.75 L6.58 9.19 L6.84 9.60 L7.21 9.95 L7.69 10.21 L8.24 10.35 L8.85 10.35 L9.46 10.18 L10.04 9.85 L10.54 9.36 L10.92 8.74 L11.14 8.01 L11.18 7.22 L11.01 6.41 L10.63 5.64 L10.06 4.97 L9.31 4.44 L8.42 4.10 L7.45 3.99 L6.45 4.12 L5.48 4.50 L4.61 5.13 L3.90 5.98 L3.41 7.00 L3.17 8.15 L3.23 9.34 L3.58 10.52 L4.23 11.60 L5.14 12.52 L6.28 13.20 L7.58 13.59 L8.96 13.65 L10.35 13.37 L11.66 12.74 L12.80 11.80 L13.70 10.58 L14.28 9.15 L14.50 7.59 L14.33 5.99 L13.77 4.45 L12.83 3.07" fill="none" stroke="#cdcdcd" stroke-width="1.75" stroke-linecap="round" stroke-linejoin="round"/></svg>
<div class="b" style="left:263.00px;top:441.00px;width:59.30px;height:8.50px;background:#242426;"></div>
<span class="t" style="left:267.80px;top:439.95px;font-size:9px;line-height:10.80px;color:#e8e8e8;transform:scaleX(0.8450);">5. Null 2</span>
<svg class="b" style="left:313.90px;top:443.65px;" width="5.4" height="3.4" viewBox="0 0 10 6"><path d="M0.8 0.8L5 5L9.2 0.8" fill="none" stroke="#c6c6c6" stroke-width="1.8"/></svg>
<div class="b" style="left:0.00px;top:451.00px;width:366.50px;height:11.00px;background:#2a2a2c;"></div>
<svg class="b" style="left:81.30px;top:451.42px;" width="8.8" height="9.9" viewBox="0 0 16 18"><circle cx="8" cy="10.6" r="5.9" fill="none" stroke="#3f8cec" stroke-width="2.2"/><path d="M5.4 1.7H10.6M8 1.7V4.6M8 10.6L11.2 7" stroke="#3f8cec" stroke-width="2.1" fill="none"/></svg>
<svg class="b" style="left:93.70px;top:453.17px;" width="8" height="7.2" viewBox="0 0 16 14"><path d="M1.2 0.5V12.6H15.5" fill="none" stroke="#d2d2d2" stroke-width="2"/><path d="M3.8 9.6L7 4.8L9.6 8.2L14 3.6" fill="none" stroke="#d2d2d2" stroke-width="1.7"/></svg>
<span class="t" style="left:106.60px;top:451.51px;font-size:9.1px;line-height:10.92px;color:#d2d2d2;transform:scaleX(0.7204);-webkit-text-stroke:0.15px #d2d2d2;">Scale</span>
<svg class="b" style="left:159.00px;top:454.57px;" width="9" height="4" viewBox="0 0 18 8"><rect x="1" y="1.2" width="9.5" height="5.6" rx="2.8" fill="none" stroke="#ececec" stroke-width="2.2"/><rect x="7.5" y="1.2" width="9.5" height="5.6" rx="2.8" fill="none" stroke="#ececec" stroke-width="2.2"/></svg>
<span class="t" style="left:170.50px;top:450.61px;font-size:9.1px;line-height:10.92px;color:#458fec;transform:scaleX(0.7920);-webkit-text-stroke:0.22px #458fec;">90.2,53.5</span>
<span class="t" style="left:201.76px;top:450.87px;font-size:9px;line-height:10.80px;color:#d0d0d0;transform:scaleX(0.7500);">%</span>
<svg class="b" style="left:259.20px;top:452.37px;" width="9.2" height="9.2" viewBox="0 0 16 16"><path d="M6.96 7.40 L6.72 7.63 L6.54 7.95 L6.45 8.33 L6.46 8.75 L6.58 9.19 L6.84 9.60 L7.21 9.95 L7.69 10.21 L8.24 10.35 L8.85 10.35 L9.46 10.18 L10.04 9.85 L10.54 9.36 L10.92 8.74 L11.14 8.01 L11.18 7.22 L11.01 6.41 L10.63 5.64 L10.06 4.97 L9.31 4.44 L8.42 4.10 L7.45 3.99 L6.45 4.12 L5.48 4.50 L4.61 5.13 L3.90 5.98 L3.41 7.00 L3.17 8.15 L3.23 9.34 L3.58 10.52 L4.23 11.60 L5.14 12.52 L6.28 13.20 L7.58 13.59 L8.96 13.65 L10.35 13.37 L11.66 12.74 L12.80 11.80 L13.70 10.58 L14.28 9.15 L14.50 7.59 L14.33 5.99 L13.77 4.45 L12.83 3.07" fill="none" stroke="#cdcdcd" stroke-width="1.75" stroke-linecap="round" stroke-linejoin="round"/></svg>
<svg class="b" style="left:330.50px;top:453.87px;" width="4.6" height="6" viewBox="0 0 8 10"><path d="M7.4 0.4V9.6L0.6 5Z" fill="#ececec"/></svg>
<svg class="b" style="left:339.90px;top:453.67px;" width="6.4" height="6.4" viewBox="0 0 12 12"><path d="M6 1L11 6L6 11L1 6Z" fill="none" stroke="#d6d6d6" stroke-width="1.5"/></svg>
<svg class="b" style="left:351.40px;top:453.97px;" width="4.4" height="5.8" viewBox="0 0 8 10"><path d="M0.6 0.4V9.6L7.4 5Z" fill="#6a6a6a"/></svg>
<div class="b" style="left:0.00px;top:462.00px;width:366.50px;height:11.00px;background:#3a3a3c;"></div>
<svg class="b" style="left:4.60px;top:465.20px;" width="7.8" height="5.2" viewBox="0 0 16 10"><path d="M0 5 Q8 -3.5 16 5 Q8 13.5 0 5Z" fill="#f2f2f2"/><circle cx="8" cy="5" r="2.7" fill="#2a2a2c"/></svg>
<div class="b" style="left:24.00px;top:464.15px;width:8.30px;height:7.60px;background:#262628;"></div>
<div class="b" style="left:34.00px;top:464.15px;width:8.30px;height:7.60px;background:#262628;"></div>
<svg class="b" style="left:50.20px;top:466.40px;" width="5.2" height="3.4" viewBox="0 0 10 6"><path d="M0.8 0.8L5 5L9.2 0.8" fill="none" stroke="#c6c6c6" stroke-width="1.8"/></svg>
<div class="b" style="left:57.80px;top:463.75px;width:8.40px;height:8.30px;background:#6aa5f7;"></div>
<span class="t" style="left:71.59px;top:462.50px;font-size:9px;line-height:10.80px;color:#ececec;transform:scaleX(0.8600);-webkit-text-stroke:0.25px #ececec;">31</span>
<svg class="b" style="left:91.80px;top:463.80px;" width="7.8" height="7.8" viewBox="0 0 20 20"><path d="M10 0.8L12.7 7.2L19.6 7.7L14.3 12.2L16 19L10 15.3L4 19L5.7 12.2L0.4 7.7L7.3 7.2Z" fill="#f2f2f2"/></svg>
<span class="t" style="left:104.00px;top:462.64px;font-size:9.1px;line-height:10.92px;color:#eeeeee;transform:scaleX(0.8650);-webkit-text-stroke:0.28px #eee;">sun</span>
<svg class="b" style="left:159.80px;top:463.90px;" width="8.6" height="7.8" viewBox="0 0 16 14"><path d="M2.8 6.6 A5.2 5.8 0 0 1 13.2 6.6Z" fill="#f0f0f0"/><rect x="0.3" y="6.4" width="15.4" height="2.6" fill="#f0f0f0"/><rect x="2.6" y="8.6" width="2.4" height="4.6" fill="#e8e8e8"/><rect x="6.8" y="8.6" width="2.4" height="4.6" fill="#e8e8e8"/><rect x="11" y="8.6" width="2.4" height="4.6" fill="#e8e8e8"/><rect x="5.6" y="3" width="1.6" height="2.4" fill="#3a3a3c"/><rect x="8.8" y="3" width="1.6" height="2.4" fill="#3a3a3c"/></svg>
<div class="b" style="left:169.20px;top:463.95px;width:8.60px;height:7.80px;background:#262628;"></div>
<svg class="b" style="left:170.00px;top:464.20px;" width="7.2" height="7.2" viewBox="0 0 14 14"><circle cx="7" cy="7" r="2.7" fill="none" stroke="#808082" stroke-width="1.9"/><g stroke="#808082" stroke-width="1.5"><path d="M7 0.5V3M7 11V13.5M0.5 7H3M11 7H13.5M2.4 2.4L4.2 4.2M9.8 9.8L11.6 11.6M2.4 11.6L4.2 9.8M9.8 4.2L11.6 2.4"/></g></svg>
<div class="b" style="left:179.40px;top:463.95px;width:8.80px;height:7.80px;background:#262628;"></div>
<svg class="b" style="left:180.20px;top:464.10px;" width="7.4" height="7.4" viewBox="0 0 10 10"><path d="M1 9.2L9 0.8" stroke="#f0f0f0" stroke-width="1.5" stroke-linecap="round"/></svg>
<div class="b" style="left:209.30px;top:463.95px;width:8.50px;height:7.80px;background:#262628;"></div>
<div class="b" style="left:219.30px;top:463.95px;width:8.50px;height:7.80px;background:#262628;"></div>
<div class="b" style="left:229.30px;top:463.95px;width:8.50px;height:7.80px;background:#262628;"></div>
<svg class="b" style="left:250.60px;top:463.30px;" width="9.2" height="9.2" viewBox="0 0 16 16"><path d="M6.96 7.40 L6.72 7.63 L6.54 7.95 L6.45 8.33 L6.46 8.75 L6.58 9.19 L6.84 9.60 L7.21 9.95 L7.69 10.21 L8.24 10.35 L8.85 10.35 L9.46 10.18 L10.04 9.85 L10.54 9.36 L10.92 8.74 L11.14 8.01 L11.18 7.22 L11.01 6.41 L10.63 5.64 L10.06 4.97 L9.31 4.44 L8.42 4.10 L7.45 3.99 L6.45 4.12 L5.48 4.50 L4.61 5.13 L3.90 5.98 L3.41 7.00 L3.17 8.15 L3.23 9.34 L3.58 10.52 L4.23 11.60 L5.14 12.52 L6.28 13.20 L7.58 13.59 L8.96 13.65 L10.35 13.37 L11.66 12.74 L12.80 11.80 L13.70 10.58 L14.28 9.15 L14.50 7.59 L14.33 5.99 L13.77 4.45 L12.83 3.07" fill="none" stroke="#cdcdcd" stroke-width="1.75" stroke-linecap="round" stroke-linejoin="round"/></svg>
<div class="b" style="left:263.00px;top:463.65px;width:59.30px;height:8.50px;background:#242426;"></div>
<span class="t" style="left:267.80px;top:462.60px;font-size:9px;line-height:10.80px;color:#e8e8e8;transform:scaleX(0.8450);">5. Null 2</span>
<svg class="b" style="left:313.90px;top:466.30px;" width="5.4" height="3.4" viewBox="0 0 10 6"><path d="M0.8 0.8L5 5L9.2 0.8" fill="none" stroke="#c6c6c6" stroke-width="1.8"/></svg>
<div class="b" style="left:0.00px;top:473.00px;width:366.50px;height:12.00px;background:#2a2a2c;"></div>
<svg class="b" style="left:81.30px;top:474.07px;" width="8.8" height="9.9" viewBox="0 0 16 18"><circle cx="8" cy="10.6" r="5.9" fill="none" stroke="#3f8cec" stroke-width="2.2"/><path d="M5.4 1.7H10.6M8 1.7V4.6M8 10.6L11.2 7" stroke="#3f8cec" stroke-width="2.1" fill="none"/></svg>
<svg class="b" style="left:93.70px;top:475.82px;" width="8" height="7.2" viewBox="0 0 16 14"><path d="M1.2 0.5V12.6H15.5" fill="none" stroke="#d2d2d2" stroke-width="2"/><path d="M3.8 9.6L7 4.8L9.6 8.2L14 3.6" fill="none" stroke="#d2d2d2" stroke-width="1.7"/></svg>
<span class="t" style="left:106.60px;top:474.17px;font-size:9.1px;line-height:10.92px;color:#d2d2d2;transform:scaleX(0.8340);-webkit-text-stroke:0.15px #d2d2d2;">Position</span>
<span class="t" style="left:160.00px;top:473.26px;font-size:9.1px;line-height:10.92px;color:#458fec;transform:scaleX(0.7920);-webkit-text-stroke:0.22px #458fec;">0.0,0.0</span>
<svg class="b" style="left:259.20px;top:475.02px;" width="9.2" height="9.2" viewBox="0 0 16 16"><path d="M6.96 7.40 L6.72 7.63 L6.54 7.95 L6.45 8.33 L6.46 8.75 L6.58 9.19 L6.84 9.60 L7.21 9.95 L7.69 10.21 L8.24 10.35 L8.85 10.35 L9.46 10.18 L10.04 9.85 L10.54 9.36 L10.92 8.74 L11.14 8.01 L11.18 7.22 L11.01 6.41 L10.63 5.64 L10.06 4.97 L9.31 4.44 L8.42 4.10 L7.45 3.99 L6.45 4.12 L5.48 4.50 L4.61 5.13 L3.90 5.98 L3.41 7.00 L3.17 8.15 L3.23 9.34 L3.58 10.52 L4.23 11.60 L5.14 12.52 L6.28 13.20 L7.58 13.59 L8.96 13.65 L10.35 13.37 L11.66 12.74 L12.80 11.80 L13.70 10.58 L14.28 9.15 L14.50 7.59 L14.33 5.99 L13.77 4.45 L12.83 3.07" fill="none" stroke="#cdcdcd" stroke-width="1.75" stroke-linecap="round" stroke-linejoin="round"/></svg>
<svg class="b" style="left:330.50px;top:476.52px;" width="4.6" height="6" viewBox="0 0 8 10"><path d="M7.4 0.4V9.6L0.6 5Z" fill="#ececec"/></svg>
<svg class="b" style="left:339.90px;top:476.32px;" width="6.4" height="6.4" viewBox="0 0 12 12"><path d="M6 1L11 6L6 11L1 6Z" fill="none" stroke="#d6d6d6" stroke-width="1.5"/></svg>
<svg class="b" style="left:351.40px;top:476.62px;" width="4.4" height="5.8" viewBox="0 0 8 10"><path d="M0.6 0.4V9.6L7.4 5Z" fill="#6a6a6a"/></svg>
<div class="b" style="left:0.00px;top:485.00px;width:366.50px;height:11.00px;background:#2a2a2c;"></div>
<svg class="b" style="left:81.30px;top:485.40px;" width="8.8" height="9.9" viewBox="0 0 16 18"><circle cx="8" cy="10.6" r="5.9" fill="none" stroke="#3f8cec" stroke-width="2.2"/><path d="M5.4 1.7H10.6M8 1.7V4.6M8 10.6L11.2 7" stroke="#3f8cec" stroke-width="2.1" fill="none"/></svg>
<svg class="b" style="left:93.70px;top:487.15px;" width="8" height="7.2" viewBox="0 0 16 14"><path d="M1.2 0.5V12.6H15.5" fill="none" stroke="#d2d2d2" stroke-width="2"/><path d="M3.8 9.6L7 4.8L9.6 8.2L14 3.6" fill="none" stroke="#d2d2d2" stroke-width="1.7"/></svg>
<span class="t" style="left:106.60px;top:485.49px;font-size:9.1px;line-height:10.92px;color:#d2d2d2;transform:scaleX(0.7204);-webkit-text-stroke:0.15px #d2d2d2;">Scale</span>
<svg class="b" style="left:159.00px;top:488.55px;" width="9" height="4" viewBox="0 0 18 8"><rect x="1" y="1.2" width="9.5" height="5.6" rx="2.8" fill="none" stroke="#ececec" stroke-width="2.2"/><rect x="7.5" y="1.2" width="9.5" height="5.6" rx="2.8" fill="none" stroke="#ececec" stroke-width="2.2"/></svg>
<span class="t" style="left:170.50px;top:484.59px;font-size:9.1px;line-height:10.92px;color:#458fec;transform:scaleX(0.7920);-webkit-text-stroke:0.22px #458fec;">100.0,100.0</span>
<span class="t" style="left:209.77px;top:484.85px;font-size:9px;line-height:10.80px;color:#d0d0d0;transform:scaleX(0.7500);">%</span>
<svg class="b" style="left:259.20px;top:486.35px;" width="9.2" height="9.2" viewBox="0 0 16 16"><path d="M6.96 7.40 L6.72 7.63 L6.54 7.95 L6.45 8.33 L6.46 8.75 L6.58 9.19 L6.84 9.60 L7.21 9.95 L7.69 10.21 L8.24 10.35 L8.85 10.35 L9.46 10.18 L10.04 9.85 L10.54 9.36 L10.92 8.74 L11.14 8.01 L11.18 7.22 L11.01 6.41 L10.63 5.64 L10.06 4.97 L9.31 4.44 L8.42 4.10 L7.45 3.99 L6.45 4.12 L5.48 4.50 L4.61 5.13 L3.90 5.98 L3.41 7.00 L3.17 8.15 L3.23 9.34 L3.58 10.52 L4.23 11.60 L5.14 12.52 L6.28 13.20 L7.58 13.59 L8.96 13.65 L10.35 13.37 L11.66 12.74 L12.80 11.80 L13.70 10.58 L14.28 9.15 L14.50 7.59 L14.33 5.99 L13.77 4.45 L12.83 3.07" fill="none" stroke="#cdcdcd" stroke-width="1.75" stroke-linecap="round" stroke-linejoin="round"/></svg>
<svg class="b" style="left:330.50px;top:487.85px;" width="4.6" height="6" viewBox="0 0 8 10"><path d="M7.4 0.4V9.6L0.6 5Z" fill="#ececec"/></svg>
<svg class="b" style="left:339.90px;top:487.65px;" width="6.4" height="6.4" viewBox="0 0 12 12"><path d="M6 1L11 6L6 11L1 6Z" fill="none" stroke="#d6d6d6" stroke-width="1.5"/></svg>
<svg class="b" style="left:351.40px;top:487.95px;" width="4.4" height="5.8" viewBox="0 0 8 10"><path d="M0.6 0.4V9.6L7.4 5Z" fill="#6a6a6a"/></svg>
<div class="b" style="left:0.00px;top:496.00px;width:366.50px;height:11.00px;background:#3a3a3c;"></div>
<svg class="b" style="left:4.60px;top:499.17px;" width="7.8" height="5.2" viewBox="0 0 16 10"><path d="M0 5 Q8 -3.5 16 5 Q8 13.5 0 5Z" fill="#f2f2f2"/><circle cx="8" cy="5" r="2.7" fill="#2a2a2c"/></svg>
<div class="b" style="left:24.00px;top:498.12px;width:8.30px;height:7.60px;background:#262628;"></div>
<div class="b" style="left:34.00px;top:498.12px;width:8.30px;height:7.60px;background:#262628;"></div>
<svg class="b" style="left:50.00px;top:498.97px;" width="3.2" height="5.6" viewBox="0 0 6 10"><path d="M1 1L5 5L1 9" fill="none" stroke="#9a9a9a" stroke-width="1.5"/></svg>
<div class="b" style="left:57.80px;top:497.72px;width:8.40px;height:8.30px;background:#e2364b;"></div>
<span class="t" style="left:71.59px;top:496.48px;font-size:9px;line-height:10.80px;color:#ececec;transform:scaleX(0.8600);-webkit-text-stroke:0.25px #ececec;">32</span>
<div class="b" style="left:91.20px;top:497.52px;width:9.10px;height:8.40px;background:#0c0c0c;"></div>
<span class="t" style="left:104.00px;top:496.62px;font-size:9.1px;line-height:10.92px;color:#eeeeee;transform:scaleX(0.8650);-webkit-text-stroke:0.28px #eee;">[Black ...d 1]</span>
<svg class="b" style="left:159.80px;top:497.88px;" width="8.6" height="7.8" viewBox="0 0 16 14"><path d="M2.8 6.6 A5.2 5.8 0 0 1 13.2 6.6Z" fill="#f0f0f0"/><rect x="0.3" y="6.4" width="15.4" height="2.6" fill="#f0f0f0"/><rect x="2.6" y="8.6" width="2.4" height="4.6" fill="#e8e8e8"/><rect x="6.8" y="8.6" width="2.4" height="4.6" fill="#e8e8e8"/><rect x="11" y="8.6" width="2.4" height="4.6" fill="#e8e8e8"/><rect x="5.6" y="3" width="1.6" height="2.4" fill="#3a3a3c"/><rect x="8.8" y="3" width="1.6" height="2.4" fill="#3a3a3c"/></svg>
<div class="b" style="left:169.20px;top:497.92px;width:8.60px;height:7.80px;background:#262628;"></div>
<div class="b" style="left:179.40px;top:497.92px;width:8.80px;height:7.80px;background:#262628;"></div>
<svg class="b" style="left:180.20px;top:498.07px;" width="7.4" height="7.4" viewBox="0 0 10 10"><path d="M1 9.2L9 0.8" stroke="#f0f0f0" stroke-width="1.5" stroke-linecap="round"/></svg>
<span class="t" style="left:190.60px;top:496.01px;font-size:9.6px;line-height:11.52px;color:#e8e8e8;transform:scaleX(0.9500);font-style:italic;font-family:'Liberation Serif',serif;">fx</span>
<div class="b" style="left:209.30px;top:497.92px;width:8.50px;height:7.80px;background:#262628;"></div>
<div class="b" style="left:219.30px;top:497.92px;width:8.50px;height:7.80px;background:#262628;"></div>
<div class="b" style="left:229.30px;top:497.92px;width:8.50px;height:7.80px;background:#262628;"></div>
<svg class="b" style="left:250.60px;top:497.27px;" width="9.2" height="9.2" viewBox="0 0 16 16"><path d="M6.96 7.40 L6.72 7.63 L6.54 7.95 L6.45 8.33 L6.46 8.75 L6.58 9.19 L6.84 9.60 L7.21 9.95 L7.69 10.21 L8.24 10.35 L8.85 10.35 L9.46 10.18 L10.04 9.85 L10.54 9.36 L10.92 8.74 L11.14 8.01 L11.18 7.22 L11.01 6.41 L10.63 5.64 L10.06 4.97 L9.31 4.44 L8.42 4.10 L7.45 3.99 L6.45 4.12 L5.48 4.50 L4.61 5.13 L3.90 5.98 L3.41 7.00 L3.17 8.15 L3.23 9.34 L3.58 10.52 L4.23 11.60 L5.14 12.52 L6.28 13.20 L7.58 13.59 L8.96 13.65 L10.35 13.37 L11.66 12.74 L12.80 11.80 L13.70 10.58 L14.28 9.15 L14.50 7.59 L14.33 5.99 L13.77 4.45 L12.83 3.07" fill="none" stroke="#cdcdcd" stroke-width="1.75" stroke-linecap="round" stroke-linejoin="round"/></svg>
<div class="b" style="left:263.00px;top:497.62px;width:59.30px;height:8.50px;background:#242426;"></div>
<span class="t" style="left:267.80px;top:496.57px;font-size:9px;line-height:10.80px;color:#e8e8e8;transform:scaleX(0.8040);">None</span>
<svg class="b" style="left:313.90px;top:500.27px;" width="5.4" height="3.4" viewBox="0 0 10 6"><path d="M0.8 0.8L5 5L9.2 0.8" fill="none" stroke="#c6c6c6" stroke-width="1.8"/></svg>
<div class="b" style="left:0.00px;top:60.80px;width:366.50px;height:11.40px;background:#363638;"></div>
<div class="b" style="left:0.00px;top:72.20px;width:366.50px;height:0.70px;background:#1e1e1f;"></div>
<svg class="b" style="left:4.60px;top:64.50px;" width="7.8" height="5.4" viewBox="0 0 16 10"><path d="M0 5 Q8 -3.5 16 5 Q8 13.5 0 5Z" fill="#f2f2f2"/><circle cx="8" cy="5" r="2.7" fill="#2a2a2c"/></svg>
<svg class="b" style="left:14.10px;top:62.90px" width="8.8" height="8.6" viewBox="0 0 12 12" preserveAspectRatio="none"><path d="M0.6 3.6H3L6.4 0.6V11.4L3 8.4H0.6Z" fill="#e8e8e8"/><path d="M8 3.4Q9.6 6 8 8.6M9.8 1.6Q12.6 6 9.8 10.4" fill="none" stroke="#e8e8e8" stroke-width="1.2"/></svg>
<svg class="b" style="left:25.80px;top:64.40px" width="5.6" height="5.6" viewBox="0 0 8 8" preserveAspectRatio="none"><circle cx="4" cy="4" r="3.4" fill="#e8e8e8"/></svg>
<svg class="b" style="left:34.90px;top:62.60px" width="7.6" height="8.6" viewBox="0 0 12 13" preserveAspectRatio="none"><path d="M3 5.4V3.6A3 3 0 0 1 9 3.6V5.4" fill="none" stroke="#e8e8e8" stroke-width="1.5"/><rect x="1" y="5.4" width="10" height="7" rx="0.8" fill="#e8e8e8"/></svg>
<div class="b" style="left:46.60px;top:62.00px;width:0.80px;height:9.00px;background:#3e3e40;"></div>
<svg class="b" style="left:54.50px;top:62.10px" width="9" height="9" viewBox="0 0 14 14" preserveAspectRatio="none"><path d="M0.8 0.8H7L13.2 7L7.4 12.8L0.8 6.2Z" fill="#e8e8e8"/><circle cx="3.6" cy="3.6" r="1.2" fill="#363638"/></svg>
<div class="b" style="left:67.60px;top:62.00px;width:0.80px;height:9.00px;background:#3e3e40;"></div>
<span class="t" style="left:71.00px;top:63.44px;font-size:6.6px;line-height:7.92px;color:#a8a8a8;transform:scaleX(0.9000);font-style:italic;">#</span>
<div class="b" style="left:88.60px;top:62.00px;width:0.80px;height:9.00px;background:#3e3e40;"></div>
<span class="t" style="left:93.00px;top:62.84px;font-size:7.6px;line-height:9.12px;color:#b4b4b4;transform:scaleX(0.7730);">Layer Name</span>
<svg class="b" style="left:160.00px;top:63.70px;" width="8" height="7" viewBox="0 0 16 14"><path d="M2.8 6.6 A5.2 5.8 0 0 1 13.2 6.6Z" fill="#f0f0f0"/><rect x="0.3" y="6.4" width="15.4" height="2.6" fill="#f0f0f0"/><rect x="2.6" y="8.6" width="2.4" height="4.6" fill="#e8e8e8"/><rect x="6.8" y="8.6" width="2.4" height="4.6" fill="#e8e8e8"/><rect x="11" y="8.6" width="2.4" height="4.6" fill="#e8e8e8"/><rect x="5.6" y="3" width="1.6" height="2.4" fill="#3a3a3c"/><rect x="8.8" y="3" width="1.6" height="2.4" fill="#3a3a3c"/></svg>
<svg class="b" style="left:170.60px;top:63.80px" width="6.8" height="6.8" viewBox="0 0 14 14" preserveAspectRatio="none"><circle cx="7" cy="7" r="2.4" fill="none" stroke="#dcdcdc" stroke-width="1.6"/><g stroke="#dcdcdc" stroke-width="1.5"><path d="M7 0.5V3M7 11V13.5M0.5 7H3M11 7H13.5M2.4 2.4L4.2 4.2M9.8 9.8L11.6 11.6M2.4 11.6L4.2 9.8M9.8 4.2L11.6 2.4"/></g></svg>
<svg class="b" style="left:180.10px;top:63.90px" width="6.6" height="6.6" viewBox="0 0 10 10" preserveAspectRatio="none"><path d="M1 1L9 9" stroke="#dcdcdc" stroke-width="1.4" stroke-linecap="round"/></svg>
<span class="t" style="left:189.60px;top:61.96px;font-size:9.4px;line-height:11.28px;color:#dcdcdc;transform:scaleX(0.9500);font-style:italic;font-family:'Liberation Serif',serif;">fx</span>
<svg class="b" style="left:199.90px;top:63.80px" width="7.4" height="6.8" viewBox="0 0 14 13" preserveAspectRatio="none"><rect x="0.6" y="0.6" width="12.8" height="11.8" fill="#d4d4d4"/><rect x="2.4" y="4.6" width="9" height="6" fill="#9a9a9a"/><rect x="2.4" y="2.2" width="9" height="1.6" fill="#f6f6f6"/></svg>
<svg class="b" style="left:209.60px;top:63.70px" width="8" height="7" viewBox="0 0 14 12" preserveAspectRatio="none"><g transform="rotate(-38 7 6)"><rect x="0.6" y="2.2" width="12.8" height="7.6" rx="3.8" fill="#bdbdbd" stroke="#e6e6e6" stroke-width="1.2"/><rect x="3.2" y="2.2" width="9" height="7.6" rx="3.8" fill="none" stroke="#7a7a7a" stroke-width="1"/></g></svg>
<svg class="b" style="left:220.10px;top:63.70px" width="7" height="7" viewBox="0 0 12 12" preserveAspectRatio="none"><circle cx="6" cy="6" r="5" fill="#e6e6e6"/><path d="M2.5 9.5A5 5 0 0 0 9.5 2.5Z" fill="#363638"/><circle cx="6" cy="6" r="5" fill="none" stroke="#e6e6e6" stroke-width="1.2"/></svg>
<svg class="b" style="left:230.00px;top:63.40px" width="7.6" height="7.6" viewBox="0 0 14 14" preserveAspectRatio="none"><path d="M7 0.8L12.6 3.6V10L7 13.2L1.4 10V3.6Z M1.4 3.6L7 6.6L12.6 3.6M7 6.6V13.2" fill="none" stroke="#e6e6e6" stroke-width="1.4"/></svg>
<div class="b" style="left:247.80px;top:62.00px;width:0.80px;height:9.00px;background:#3e3e40;"></div>
<span class="t" style="left:251.00px;top:62.84px;font-size:7.6px;line-height:9.12px;color:#b4b4b4;transform:scaleX(0.8000);">Parent &amp; Link</span>
<div class="b" style="left:325.00px;top:62.00px;width:0.80px;height:9.00px;background:#3e3e40;"></div>
<span class="t" style="left:329.40px;top:62.84px;font-size:7.6px;line-height:9.12px;color:#b4b4b4;transform:scaleX(0.7457);">Keys</span>
<div class="b" style="left:356.00px;top:62.00px;width:0.80px;height:9.00px;background:#3e3e40;"></div>
<div class="b" style="left:0.00px;top:507.20px;width:1024.00px;height:12.80px;background:#232325;"></div>
<div class="b" style="left:0.00px;top:507.20px;width:366.50px;height:0.80px;background:#1b1b1c;"></div>
<svg class="b" style="left:3.20px;top:509.60px" width="8.8" height="8.8" viewBox="0 0 12 12" preserveAspectRatio="none"><rect x="1" y="1" width="7" height="7" rx="1" fill="#3a78c8"/><rect x="4" y="4" width="7" height="7" rx="1" fill="#3a78c8" stroke="#232325" stroke-width="0.8"/><circle cx="9" cy="9.4" r="2.2" fill="#6aa5f7"/></svg>
<svg class="b" style="left:16.70px;top:509.70px" width="8.6" height="8.6" viewBox="0 0 12 12" preserveAspectRatio="none"><circle cx="5" cy="5" r="3.6" fill="none" stroke="#dcdcdc" stroke-width="1.3"/><rect x="5.6" y="5.6" width="5.6" height="5.6" fill="#232325" stroke="#dcdcdc" stroke-width="1.3"/></svg>
<svg class="b" style="left:29.00px;top:509.80px" width="8.4" height="8.4" viewBox="0 0 12 12" preserveAspectRatio="none"><path d="M4 1H2.2V4.6L0.8 6L2.2 7.4V11H4M8 1H9.8V4.6L11.2 6L9.8 7.4V11H8" fill="none" stroke="#dcdcdc" stroke-width="1.4"/><rect x="4.6" y="2" width="2.8" height="8" fill="#dcdcdc"/></svg>
<div class="b" style="left:158.00px;top:508.00px;width:87.60px;height:12.00px;background:#2c2c2e;"></div>
<span class="t" style="left:160.80px;top:509.14px;font-size:8.6px;line-height:10.32px;color:#b0b0b0;transform:scaleX(0.8557);">Toggle Switches / Modes</span>
<div class="b" style="left:366.50px;top:60.00px;width:1.70px;height:448.00px;background:#1b1b1c;"></div>
<div class="b" style="left:368.20px;top:65.00px;width:643.60px;height:11.00px;background:#2a2a2a;"></div>
<div class="b" style="left:368.20px;top:66.00px;width:643.60px;height:10.00px;background:#3f3f3f;"></div>
<div class="b" style="left:368.20px;top:76.00px;width:643.60px;height:11.00px;background:#2a2a2a;"></div>
<div class="b" style="left:368.20px;top:77.00px;width:643.60px;height:10.00px;background:#4c4c4c;"></div>
<div class="b" style="left:368.20px;top:87.00px;width:643.60px;height:12.00px;background:#2a2a2a;"></div>
<div class="b" style="left:368.20px;top:88.00px;width:643.60px;height:11.00px;background:#3f3f3f;"></div>
<div class="b" style="left:368.20px;top:99.00px;width:643.60px;height:11.00px;background:#2a2a2a;"></div>
<div class="b" style="left:368.20px;top:100.00px;width:643.60px;height:10.00px;background:#4c4c4c;"></div>
<div class="b" style="left:368.20px;top:110.00px;width:643.60px;height:11.00px;background:#2a2a2a;"></div>
<div class="b" style="left:368.20px;top:111.00px;width:643.60px;height:10.00px;background:#3f3f3f;"></div>
<div class="b" style="left:368.20px;top:121.00px;width:643.60px;height:12.00px;background:#2a2a2a;"></div>
<div class="b" style="left:368.20px;top:122.00px;width:643.60px;height:11.00px;background:#4c4c4c;"></div>
<div class="b" style="left:368.20px;top:133.00px;width:643.60px;height:11.00px;background:#2a2a2a;"></div>
<div class="b" style="left:368.20px;top:134.00px;width:643.60px;height:10.00px;background:#3f3f3f;"></div>
<div class="b" style="left:368.20px;top:144.00px;width:643.60px;height:11.00px;background:#2a2a2a;"></div>
<div class="b" style="left:368.20px;top:145.00px;width:643.60px;height:10.00px;background:#4c4c4c;"></div>
<div class="b" style="left:368.20px;top:155.00px;width:643.60px;height:12.00px;background:#2a2a2a;"></div>
<div class="b" style="left:368.20px;top:156.00px;width:643.60px;height:11.00px;background:#3f3f3f;"></div>
<div class="b" style="left:368.20px;top:167.00px;width:643.60px;height:11.00px;background:#2a2a2a;"></div>
<div class="b" style="left:368.20px;top:168.00px;width:643.60px;height:10.00px;background:#4c4c4c;"></div>
<div class="b" style="left:368.20px;top:178.00px;width:643.60px;height:11.00px;background:#2a2a2a;"></div>
<div class="b" style="left:368.20px;top:179.00px;width:643.60px;height:10.00px;background:#3f3f3f;"></div>
<div class="b" style="left:368.20px;top:189.00px;width:643.60px;height:12.00px;background:#2a2a2a;"></div>
<div class="b" style="left:368.20px;top:190.00px;width:643.60px;height:11.00px;background:#3f3f3f;"></div>
<div class="b" style="left:368.20px;top:201.00px;width:643.60px;height:11.00px;background:#2a2a2a;"></div>
<div class="b" style="left:368.20px;top:202.00px;width:643.60px;height:10.00px;background:#4c4c4c;"></div>
<div class="b" style="left:368.20px;top:212.00px;width:643.60px;height:11.00px;background:#2a2a2a;"></div>
<div class="b" style="left:368.20px;top:213.00px;width:643.60px;height:10.00px;background:#3f3f3f;"></div>
<div class="b" style="left:368.20px;top:223.00px;width:643.60px;height:12.00px;background:#2a2a2a;"></div>
<div class="b" style="left:368.20px;top:224.00px;width:643.60px;height:11.00px;background:#4c4c4c;"></div>
<div class="b" style="left:368.20px;top:235.00px;width:643.60px;height:11.00px;background:#2a2a2a;"></div>
<div class="b" style="left:368.20px;top:236.00px;width:643.60px;height:10.00px;background:#3f3f3f;"></div>
<div class="b" style="left:368.20px;top:246.00px;width:643.60px;height:11.00px;background:#2a2a2a;"></div>
<div class="b" style="left:368.20px;top:247.00px;width:643.60px;height:10.00px;background:#4c4c4c;"></div>
<div class="b" style="left:368.20px;top:257.00px;width:643.60px;height:12.00px;background:#2a2a2a;"></div>
<div class="b" style="left:368.20px;top:258.00px;width:643.60px;height:11.00px;background:#3f3f3f;"></div>
<div class="b" style="left:368.20px;top:269.00px;width:643.60px;height:11.00px;background:#2a2a2a;"></div>
<div class="b" style="left:368.20px;top:270.00px;width:643.60px;height:10.00px;background:#4c4c4c;"></div>
<div class="b" style="left:368.20px;top:280.00px;width:643.60px;height:11.00px;background:#2a2a2a;"></div>
<div class="b" style="left:368.20px;top:281.00px;width:643.60px;height:10.00px;background:#3f3f3f;"></div>
<div class="b" style="left:368.20px;top:291.00px;width:643.60px;height:12.00px;background:#2a2a2a;"></div>
<div class="b" style="left:368.20px;top:292.00px;width:643.60px;height:11.00px;background:#4c4c4c;"></div>
<div class="b" style="left:368.20px;top:303.00px;width:643.60px;height:11.00px;background:#2a2a2a;"></div>
<div class="b" style="left:368.20px;top:304.00px;width:643.60px;height:10.00px;background:#3f3f3f;"></div>
<div class="b" style="left:368.20px;top:314.00px;width:643.60px;height:11.00px;background:#2a2a2a;"></div>
<div class="b" style="left:368.20px;top:315.00px;width:643.60px;height:10.00px;background:#4c4c4c;"></div>
<div class="b" style="left:368.20px;top:325.00px;width:643.60px;height:11.00px;background:#2a2a2a;"></div>
<div class="b" style="left:368.20px;top:326.00px;width:643.60px;height:10.00px;background:#3f3f3f;"></div>
<div class="b" style="left:368.20px;top:336.00px;width:643.60px;height:12.00px;background:#2a2a2a;"></div>
<div class="b" style="left:368.20px;top:337.00px;width:643.60px;height:11.00px;background:#4c4c4c;"></div>
<div class="b" style="left:368.20px;top:348.00px;width:643.60px;height:11.00px;background:#2a2a2a;"></div>
<div class="b" style="left:368.20px;top:349.00px;width:643.60px;height:10.00px;background:#3f3f3f;"></div>
<div class="b" style="left:368.20px;top:359.00px;width:643.60px;height:11.00px;background:#2a2a2a;"></div>
<div class="b" style="left:368.20px;top:360.00px;width:643.60px;height:10.00px;background:#4c4c4c;"></div>
<div class="b" style="left:368.20px;top:370.00px;width:643.60px;height:12.00px;background:#2a2a2a;"></div>
<div class="b" style="left:368.20px;top:371.00px;width:643.60px;height:11.00px;background:#3f3f3f;"></div>
<div class="b" style="left:368.20px;top:382.00px;width:643.60px;height:11.00px;background:#2a2a2a;"></div>
<div class="b" style="left:368.20px;top:383.00px;width:643.60px;height:10.00px;background:#4c4c4c;"></div>
<div class="b" style="left:368.20px;top:393.00px;width:643.60px;height:11.00px;background:#2a2a2a;"></div>
<div class="b" style="left:368.20px;top:394.00px;width:643.60px;height:10.00px;background:#3f3f3f;"></div>
<div class="b" style="left:368.20px;top:404.00px;width:643.60px;height:12.00px;background:#2a2a2a;"></div>
<div class="b" style="left:368.20px;top:405.00px;width:643.60px;height:11.00px;background:#4c4c4c;"></div>
<div class="b" style="left:368.20px;top:416.00px;width:643.60px;height:11.00px;background:#2a2a2a;"></div>
<div class="b" style="left:368.20px;top:417.00px;width:643.60px;height:10.00px;background:#3f3f3f;"></div>
<div class="b" style="left:368.20px;top:427.00px;width:643.60px;height:11.00px;background:#2a2a2a;"></div>
<div class="b" style="left:368.20px;top:428.00px;width:643.60px;height:10.00px;background:#3f3f3f;"></div>
<div class="b" style="left:368.20px;top:438.00px;width:643.60px;height:12.00px;background:#2a2a2a;"></div>
<div class="b" style="left:368.20px;top:439.00px;width:643.60px;height:11.00px;background:#4c4c4c;"></div>
<div class="b" style="left:368.20px;top:450.00px;width:643.60px;height:11.00px;background:#2a2a2a;"></div>
<div class="b" style="left:368.20px;top:451.00px;width:643.60px;height:10.00px;background:#3f3f3f;"></div>
<div class="b" style="left:368.20px;top:461.00px;width:643.60px;height:11.00px;background:#2a2a2a;"></div>
<div class="b" style="left:368.20px;top:462.00px;width:643.60px;height:10.00px;background:#4c4c4c;"></div>
<div class="b" style="left:368.20px;top:472.00px;width:643.60px;height:12.00px;background:#2a2a2a;"></div>
<div class="b" style="left:368.20px;top:473.00px;width:643.60px;height:11.00px;background:#3f3f3f;"></div>
<div class="b" style="left:368.20px;top:484.00px;width:643.60px;height:11.00px;background:#2a2a2a;"></div>
<div class="b" style="left:368.20px;top:485.00px;width:643.60px;height:10.00px;background:#3f3f3f;"></div>
<div class="b" style="left:368.20px;top:495.00px;width:643.60px;height:11.00px;background:#2a2a2a;"></div>
<div class="b" style="left:368.20px;top:496.00px;width:643.60px;height:10.00px;background:#4c4c4c;"></div>
<div class="b" style="left:368.20px;top:506.00px;width:643.60px;height:1.00px;background:#2a2a2a;"></div>
<div class="b" style="left:1006.80px;top:73.40px;width:5.00px;height:434.00px;background:#474749;"></div>
<div class="b" style="left:368.20px;top:73.40px;width:3.60px;height:434.00px;background:#3c3c3e;"></div>
<div class="b" style="left:368.20px;top:65.00px;width:3.60px;height:1.00px;background:#2e2e30;"></div>
<div class="b" style="left:368.20px;top:76.00px;width:3.60px;height:1.00px;background:#2e2e30;"></div>
<div class="b" style="left:368.20px;top:87.00px;width:3.60px;height:1.00px;background:#2e2e30;"></div>
<div class="b" style="left:368.20px;top:99.00px;width:3.60px;height:1.00px;background:#2e2e30;"></div>
<div class="b" style="left:368.20px;top:110.00px;width:3.60px;height:1.00px;background:#2e2e30;"></div>
<div class="b" style="left:368.20px;top:121.00px;width:3.60px;height:1.00px;background:#2e2e30;"></div>
<div class="b" style="left:368.20px;top:133.00px;width:3.60px;height:1.00px;background:#2e2e30;"></div>
<div class="b" style="left:368.20px;top:144.00px;width:3.60px;height:1.00px;background:#2e2e30;"></div>
<div class="b" style="left:368.20px;top:155.00px;width:3.60px;height:1.00px;background:#2e2e30;"></div>
<div class="b" style="left:368.20px;top:167.00px;width:3.60px;height:1.00px;background:#2e2e30;"></div>
<div class="b" style="left:368.20px;top:178.00px;width:3.60px;height:1.00px;background:#2e2e30;"></div>
<div class="b" style="left:368.20px;top:189.00px;width:3.60px;height:1.00px;background:#2e2e30;"></div>
<div class="b" style="left:368.20px;top:201.00px;width:3.60px;height:1.00px;background:#2e2e30;"></div>
<div class="b" style="left:368.20px;top:212.00px;width:3.60px;height:1.00px;background:#2e2e30;"></div>
<div class="b" style="left:368.20px;top:223.00px;width:3.60px;height:1.00px;background:#2e2e30;"></div>
<div class="b" style="left:368.20px;top:235.00px;width:3.60px;height:1.00px;background:#2e2e30;"></div>
<div class="b" style="left:368.20px;top:246.00px;width:3.60px;height:1.00px;background:#2e2e30;"></div>
<div class="b" style="left:368.20px;top:257.00px;width:3.60px;height:1.00px;background:#2e2e30;"></div>
<div class="b" style="left:368.20px;top:269.00px;width:3.60px;height:1.00px;background:#2e2e30;"></div>
<div class="b" style="left:368.20px;top:280.00px;width:3.60px;height:1.00px;background:#2e2e30;"></div>
<div class="b" style="left:368.20px;top:291.00px;width:3.60px;height:1.00px;background:#2e2e30;"></div>
<div class="b" style="left:368.20px;top:303.00px;width:3.60px;height:1.00px;background:#2e2e30;"></div>
<div class="b" style="left:368.20px;top:314.00px;width:3.60px;height:1.00px;background:#2e2e30;"></div>
<div class="b" style="left:368.20px;top:325.00px;width:3.60px;height:1.00px;background:#2e2e30;"></div>
<div class="b" style="left:368.20px;top:336.00px;width:3.60px;height:1.00px;background:#2e2e30;"></div>
<div class="b" style="left:368.20px;top:348.00px;width:3.60px;height:1.00px;background:#2e2e30;"></div>
<div class="b" style="left:368.20px;top:359.00px;width:3.60px;height:1.00px;background:#2e2e30;"></div>
<div class="b" style="left:368.20px;top:370.00px;width:3.60px;height:1.00px;background:#2e2e30;"></div>
<div class="b" style="left:368.20px;top:382.00px;width:3.60px;height:1.00px;background:#2e2e30;"></div>
<div class="b" style="left:368.20px;top:393.00px;width:3.60px;height:1.00px;background:#2e2e30;"></div>
<div class="b" style="left:368.20px;top:404.00px;width:3.60px;height:1.00px;background:#2e2e30;"></div>
<div class="b" style="left:368.20px;top:416.00px;width:3.60px;height:1.00px;background:#2e2e30;"></div>
<div class="b" style="left:368.20px;top:427.00px;width:3.60px;height:1.00px;background:#2e2e30;"></div>
<div class="b" style="left:368.20px;top:438.00px;width:3.60px;height:1.00px;background:#2e2e30;"></div>
<div class="b" style="left:368.20px;top:450.00px;width:3.60px;height:1.00px;background:#2e2e30;"></div>
<div class="b" style="left:368.20px;top:461.00px;width:3.60px;height:1.00px;background:#2e2e30;"></div>
<div class="b" style="left:368.20px;top:472.00px;width:3.60px;height:1.00px;background:#2e2e30;"></div>
<div class="b" style="left:368.20px;top:484.00px;width:3.60px;height:1.00px;background:#2e2e30;"></div>
<div class="b" style="left:368.20px;top:495.00px;width:3.60px;height:1.00px;background:#2e2e30;"></div>
<div class="b" style="left:611.95px;top:73.60px;width:1.10px;height:433.80px;background:rgba(18,18,20,0.5);"></div>
<div class="b" style="left:630.05px;top:73.60px;width:1.10px;height:433.80px;background:rgba(18,18,20,0.5);"></div>
<div class="b" style="left:648.85px;top:73.60px;width:1.10px;height:433.80px;background:rgba(18,18,20,0.5);"></div>
<div class="b" style="left:670.65px;top:73.60px;width:1.10px;height:433.80px;background:rgba(18,18,20,0.5);"></div>
<div class="b" style="left:688.85px;top:73.60px;width:1.10px;height:433.80px;background:rgba(18,18,20,0.5);"></div>
<div class="b" style="left:708.05px;top:73.60px;width:1.10px;height:433.80px;background:rgba(18,18,20,0.5);"></div>
<div class="b" style="left:728.95px;top:73.60px;width:1.10px;height:433.80px;background:rgba(18,18,20,0.5);"></div>
<div class="b" style="left:747.95px;top:73.60px;width:1.10px;height:433.80px;background:rgba(18,18,20,0.5);"></div>
<div class="b" style="left:766.45px;top:73.60px;width:1.10px;height:433.80px;background:rgba(18,18,20,0.5);"></div>
<div class="b" style="left:787.45px;top:73.60px;width:1.10px;height:433.80px;background:rgba(18,18,20,0.5);"></div>
<div class="b" style="left:803.95px;top:73.60px;width:1.10px;height:433.80px;background:rgba(18,18,20,0.5);"></div>
<div class="b" style="left:824.95px;top:73.60px;width:1.10px;height:433.80px;background:rgba(18,18,20,0.5);"></div>
<div class="b" style="left:371.80px;top:77.00px;width:635.00px;height:10.00px;background:#6f7abf;"></div>
<div class="b" style="left:515.00px;top:100.00px;width:102.00px;height:10.00px;background:#a09cb9;"></div>
<div class="b" style="left:515.00px;top:122.00px;width:242.60px;height:11.00px;background:#9b3d4f;"></div>
<div class="b" style="left:473.60px;top:145.00px;width:100.00px;height:10.00px;background:#a09cb9;"></div>
<div class="b" style="left:474.00px;top:168.00px;width:283.60px;height:10.00px;background:#9b3d4f;"></div>
<div class="b" style="left:488.00px;top:202.00px;width:97.00px;height:10.00px;background:#a09cb9;"></div>
<div class="b" style="left:488.00px;top:224.00px;width:269.60px;height:11.00px;background:#9b3d4f;"></div>
<div class="b" style="left:455.00px;top:247.00px;width:551.80px;height:10.00px;background:#a09cb9;"></div>
<div class="b" style="left:371.80px;top:270.00px;width:635.00px;height:10.00px;background:#6f7abf;"></div>
<div class="b" style="left:488.00px;top:292.00px;width:97.00px;height:11.00px;background:#a09cb9;"></div>
<div class="b" style="left:450.50px;top:315.00px;width:307.10px;height:10.00px;background:#9b3d4f;"></div>
<div class="b" style="left:450.50px;top:337.00px;width:106.50px;height:11.00px;background:#a09cb9;"></div>
<div class="b" style="left:443.20px;top:360.00px;width:314.40px;height:10.00px;background:#9b3d4f;"></div>
<div class="b" style="left:443.20px;top:383.00px;width:95.40px;height:10.00px;background:#a09cb9;"></div>
<div class="b" style="left:443.20px;top:405.00px;width:314.40px;height:11.00px;background:#9b3d4f;"></div>
<div class="b" style="left:371.80px;top:439.00px;width:635.00px;height:11.00px;background:#6f7abf;"></div>
<div class="b" style="left:371.80px;top:462.00px;width:635.00px;height:10.00px;background:#6f7abf;"></div>
<div class="b" style="left:371.80px;top:496.00px;width:635.00px;height:10.00px;background:#9b3d4f;"></div>
<div class="b" style="left:612.00px;top:73.60px;width:1.00px;height:433.80px;background:rgba(20,20,36,0.34);"></div>
<div class="b" style="left:630.10px;top:73.60px;width:1.00px;height:433.80px;background:rgba(20,20,36,0.34);"></div>
<div class="b" style="left:648.90px;top:73.60px;width:1.00px;height:433.80px;background:rgba(20,20,36,0.34);"></div>
<div class="b" style="left:670.70px;top:73.60px;width:1.00px;height:433.80px;background:rgba(20,20,36,0.34);"></div>
<div class="b" style="left:688.90px;top:73.60px;width:1.00px;height:433.80px;background:rgba(20,20,36,0.34);"></div>
<div class="b" style="left:708.10px;top:73.60px;width:1.00px;height:433.80px;background:rgba(20,20,36,0.34);"></div>
<div class="b" style="left:729.00px;top:73.60px;width:1.00px;height:433.80px;background:rgba(20,20,36,0.34);"></div>
<div class="b" style="left:748.00px;top:73.60px;width:1.00px;height:433.80px;background:rgba(20,20,36,0.34);"></div>
<div class="b" style="left:766.50px;top:73.60px;width:1.00px;height:433.80px;background:rgba(20,20,36,0.34);"></div>
<div class="b" style="left:787.50px;top:73.60px;width:1.00px;height:433.80px;background:rgba(20,20,36,0.34);"></div>
<div class="b" style="left:804.00px;top:73.60px;width:1.00px;height:433.80px;background:rgba(20,20,36,0.34);"></div>
<div class="b" style="left:825.00px;top:73.60px;width:1.00px;height:433.80px;background:rgba(20,20,36,0.34);"></div>
<div class="b" style="left:846.90px;top:73.40px;width:1.30px;height:434.00px;background:#8a1418;"></div>
<svg class="b" style="left:739.90px;top:68.22px;" width="6.2" height="6.8" viewBox="0 0 12 14"><path d="M0.3 0.6H11.7V3.2L8.7 6V8L11.7 10.8V13.4H0.3V10.8L3.3 8V6L0.3 3.2Z" fill="#ebebeb"/></svg>
<svg class="b" style="left:754.90px;top:68.22px;" width="6.2" height="6.8" viewBox="0 0 12 14"><path d="M0.3 0.6H11.7V3.2L8.7 6V8L11.7 10.8V13.4H0.3V10.8L3.3 8V6L0.3 3.2Z" fill="#ebebeb"/></svg>
<svg class="b" style="left:399.90px;top:90.88px;" width="6.2" height="6.8" viewBox="0 0 12 14"><path d="M0.3 0.6H11.7V3.2L8.7 6V8L11.7 10.8V13.4H0.3V10.8L3.3 8V6L0.3 3.2Z" fill="#ebebeb"/></svg>
<svg class="b" style="left:430.90px;top:90.88px;" width="6.2" height="6.8" viewBox="0 0 12 14"><path d="M0.3 0.6H11.7V3.2L8.7 6V8L11.7 10.8V13.4H0.3V10.8L3.3 8V6L0.3 3.2Z" fill="#ebebeb"/></svg>
<svg class="b" style="left:518.50px;top:113.52px;" width="6.2" height="6.8" viewBox="0 0 12 14"><path d="M0.3 0.6H11.7V3.2L8.7 6V8L11.7 10.8V13.4H0.3V10.8L3.3 8V6L0.3 3.2Z" fill="#ebebeb"/></svg>
<svg class="b" style="left:612.90px;top:113.52px;" width="6.2" height="6.8" viewBox="0 0 12 14"><path d="M0.3 0.6H11.7V3.2L8.7 6V8L11.7 10.8V13.4H0.3V10.8L3.3 8V6L0.3 3.2Z" fill="#ebebeb"/></svg>
<svg class="b" style="left:739.70px;top:136.17px;" width="6.2" height="6.8" viewBox="0 0 12 14"><path d="M0.3 0.6H11.7V3.2L8.7 6V8L11.7 10.8V13.4H0.3V10.8L3.3 8V6L0.3 3.2Z" fill="#ebebeb"/></svg>
<svg class="b" style="left:754.90px;top:136.17px;" width="6.2" height="6.8" viewBox="0 0 12 14"><path d="M0.3 0.6H11.7V3.2L8.7 6V8L11.7 10.8V13.4H0.3V10.8L3.3 8V6L0.3 3.2Z" fill="#ebebeb"/></svg>
<svg class="b" style="left:475.90px;top:158.82px;" width="6.2" height="6.8" viewBox="0 0 12 14"><path d="M0.3 0.6H11.7V3.2L8.7 6V8L11.7 10.8V13.4H0.3V10.8L3.3 8V6L0.3 3.2Z" fill="#ebebeb"/></svg>
<svg class="b" style="left:569.30px;top:158.82px;" width="6.2" height="6.8" viewBox="0 0 12 14"><path d="M0.3 0.6H11.7V3.2L8.7 6V8L11.7 10.8V13.4H0.3V10.8L3.3 8V6L0.3 3.2Z" fill="#ebebeb"/></svg>
<svg class="b" style="left:475.70px;top:181.47px;" width="6.6" height="6.8" viewBox="0 0 12 12"><path d="M6 0.5L11.5 6L6 11.5L0.5 6Z" fill="#e4e4e4"/><path d="M6 0.5L6 11.5L0.5 6Z" fill="#9a9a9a"/></svg>
<svg class="b" style="left:569.30px;top:181.47px;" width="6.2" height="6.8" viewBox="0 0 12 14"><path d="M0.3 0.6H11.7V3.2L8.7 6V8L11.7 10.8V13.4H0.3V10.8L3.3 8V6L0.3 3.2Z" fill="#ebebeb"/></svg>
<svg class="b" style="left:577.30px;top:181.47px;" width="6.2" height="6.8" viewBox="0 0 12 14"><path d="M0.3 0.6H11.7V3.2L8.7 6V8L11.7 10.8V13.4H0.3V10.8L3.3 8V6L0.3 3.2Z" fill="#ebebeb"/></svg>
<svg class="b" style="left:739.70px;top:192.80px;" width="6.2" height="6.8" viewBox="0 0 12 14"><path d="M0.3 0.6H11.7V3.2L8.7 6V8L11.7 10.8V13.4H0.3V10.8L3.3 8V6L0.3 3.2Z" fill="#ebebeb"/></svg>
<svg class="b" style="left:754.90px;top:192.80px;" width="6.2" height="6.8" viewBox="0 0 12 14"><path d="M0.3 0.6H11.7V3.2L8.7 6V8L11.7 10.8V13.4H0.3V10.8L3.3 8V6L0.3 3.2Z" fill="#ebebeb"/></svg>
<svg class="b" style="left:486.50px;top:215.45px;" width="6.2" height="6.8" viewBox="0 0 12 14"><path d="M0.3 0.6H11.7V3.2L8.7 6V8L11.7 10.8V13.4H0.3V10.8L3.3 8V6L0.3 3.2Z" fill="#ebebeb"/></svg>
<svg class="b" style="left:579.90px;top:215.45px;" width="6.2" height="6.8" viewBox="0 0 12 14"><path d="M0.3 0.6H11.7V3.2L8.7 6V8L11.7 10.8V13.4H0.3V10.8L3.3 8V6L0.3 3.2Z" fill="#ebebeb"/></svg>
<svg class="b" style="left:739.70px;top:238.10px;" width="6.2" height="6.8" viewBox="0 0 12 14"><path d="M0.3 0.6H11.7V3.2L8.7 6V8L11.7 10.8V13.4H0.3V10.8L3.3 8V6L0.3 3.2Z" fill="#ebebeb"/></svg>
<svg class="b" style="left:754.90px;top:238.10px;" width="6.2" height="6.8" viewBox="0 0 12 14"><path d="M0.3 0.6H11.7V3.2L8.7 6V8L11.7 10.8V13.4H0.3V10.8L3.3 8V6L0.3 3.2Z" fill="#ebebeb"/></svg>
<svg class="b" style="left:456.30px;top:260.75px;" width="6.2" height="6.8" viewBox="0 0 12 14"><path d="M0.3 0.6H11.7V3.2L8.7 6V8L11.7 10.8V13.4H0.3V10.8L3.3 8V6L0.3 3.2Z" fill="#ebebeb"/></svg>
<svg class="b" style="left:541.90px;top:260.75px;" width="6.2" height="6.8" viewBox="0 0 12 14"><path d="M0.3 0.6H11.7V3.2L8.7 6V8L11.7 10.8V13.4H0.3V10.8L3.3 8V6L0.3 3.2Z" fill="#ebebeb"/></svg>
<svg class="b" style="left:739.70px;top:260.75px;" width="6.2" height="6.8" viewBox="0 0 12 14"><path d="M0.3 0.6H11.7V3.2L8.7 6V8L11.7 10.8V13.4H0.3V10.8L3.3 8V6L0.3 3.2Z" fill="#ebebeb"/></svg>
<svg class="b" style="left:754.90px;top:260.75px;" width="6.2" height="6.8" viewBox="0 0 12 14"><path d="M0.3 0.6H11.7V3.2L8.7 6V8L11.7 10.8V13.4H0.3V10.8L3.3 8V6L0.3 3.2Z" fill="#ebebeb"/></svg>
<svg class="b" style="left:374.10px;top:283.40px;" width="6.2" height="6.8" viewBox="0 0 12 14"><path d="M0.3 0.6H11.7V3.2L8.7 6V8L11.7 10.8V13.4H0.3V10.8L3.3 8V6L0.3 3.2Z" fill="#ebebeb"/></svg>
<svg class="b" style="left:404.30px;top:283.40px;" width="6.2" height="6.8" viewBox="0 0 12 14"><path d="M0.3 0.6H11.7V3.2L8.7 6V8L11.7 10.8V13.4H0.3V10.8L3.3 8V6L0.3 3.2Z" fill="#ebebeb"/></svg>
<svg class="b" style="left:486.50px;top:306.05px;" width="6.2" height="6.8" viewBox="0 0 12 14"><path d="M0.3 0.6H11.7V3.2L8.7 6V8L11.7 10.8V13.4H0.3V10.8L3.3 8V6L0.3 3.2Z" fill="#ebebeb"/></svg>
<svg class="b" style="left:579.90px;top:306.05px;" width="6.2" height="6.8" viewBox="0 0 12 14"><path d="M0.3 0.6H11.7V3.2L8.7 6V8L11.7 10.8V13.4H0.3V10.8L3.3 8V6L0.3 3.2Z" fill="#ebebeb"/></svg>
<svg class="b" style="left:739.70px;top:328.70px;" width="6.2" height="6.8" viewBox="0 0 12 14"><path d="M0.3 0.6H11.7V3.2L8.7 6V8L11.7 10.8V13.4H0.3V10.8L3.3 8V6L0.3 3.2Z" fill="#ebebeb"/></svg>
<svg class="b" style="left:754.90px;top:328.70px;" width="6.2" height="6.8" viewBox="0 0 12 14"><path d="M0.3 0.6H11.7V3.2L8.7 6V8L11.7 10.8V13.4H0.3V10.8L3.3 8V6L0.3 3.2Z" fill="#ebebeb"/></svg>
<svg class="b" style="left:458.10px;top:351.35px;" width="6.2" height="6.8" viewBox="0 0 12 14"><path d="M0.3 0.6H11.7V3.2L8.7 6V8L11.7 10.8V13.4H0.3V10.8L3.3 8V6L0.3 3.2Z" fill="#ebebeb"/></svg>
<svg class="b" style="left:553.30px;top:351.35px;" width="6.2" height="6.8" viewBox="0 0 12 14"><path d="M0.3 0.6H11.7V3.2L8.7 6V8L11.7 10.8V13.4H0.3V10.8L3.3 8V6L0.3 3.2Z" fill="#ebebeb"/></svg>
<svg class="b" style="left:739.70px;top:374.00px;" width="6.2" height="6.8" viewBox="0 0 12 14"><path d="M0.3 0.6H11.7V3.2L8.7 6V8L11.7 10.8V13.4H0.3V10.8L3.3 8V6L0.3 3.2Z" fill="#ebebeb"/></svg>
<svg class="b" style="left:754.90px;top:374.00px;" width="6.2" height="6.8" viewBox="0 0 12 14"><path d="M0.3 0.6H11.7V3.2L8.7 6V8L11.7 10.8V13.4H0.3V10.8L3.3 8V6L0.3 3.2Z" fill="#ebebeb"/></svg>
<svg class="b" style="left:440.90px;top:396.65px;" width="6.2" height="6.8" viewBox="0 0 12 14"><path d="M0.3 0.6H11.7V3.2L8.7 6V8L11.7 10.8V13.4H0.3V10.8L3.3 8V6L0.3 3.2Z" fill="#ebebeb"/></svg>
<svg class="b" style="left:534.50px;top:396.65px;" width="6.2" height="6.8" viewBox="0 0 12 14"><path d="M0.3 0.6H11.7V3.2L8.7 6V8L11.7 10.8V13.4H0.3V10.8L3.3 8V6L0.3 3.2Z" fill="#ebebeb"/></svg>
<svg class="b" style="left:440.70px;top:419.30px;" width="6.6" height="6.8" viewBox="0 0 12 12"><path d="M6 0.5L11.5 6L6 11.5L0.5 6Z" fill="#e4e4e4"/><path d="M6 0.5L6 11.5L0.5 6Z" fill="#9a9a9a"/></svg>
<svg class="b" style="left:534.50px;top:419.30px;" width="6.2" height="6.8" viewBox="0 0 12 14"><path d="M0.3 0.6H11.7V3.2L8.7 6V8L11.7 10.8V13.4H0.3V10.8L3.3 8V6L0.3 3.2Z" fill="#ebebeb"/></svg>
<svg class="b" style="left:542.10px;top:419.30px;" width="6.2" height="6.8" viewBox="0 0 12 14"><path d="M0.3 0.6H11.7V3.2L8.7 6V8L11.7 10.8V13.4H0.3V10.8L3.3 8V6L0.3 3.2Z" fill="#ebebeb"/></svg>
<svg class="b" style="left:739.70px;top:430.62px;" width="6.2" height="6.8" viewBox="0 0 12 14"><path d="M0.3 0.6H11.7V3.2L8.7 6V8L11.7 10.8V13.4H0.3V10.8L3.3 8V6L0.3 3.2Z" fill="#ebebeb"/></svg>
<svg class="b" style="left:754.90px;top:430.62px;" width="6.2" height="6.8" viewBox="0 0 12 14"><path d="M0.3 0.6H11.7V3.2L8.7 6V8L11.7 10.8V13.4H0.3V10.8L3.3 8V6L0.3 3.2Z" fill="#ebebeb"/></svg>
<svg class="b" style="left:369.30px;top:453.27px;" width="6.2" height="6.8" viewBox="0 0 12 14"><path d="M0.3 0.6H11.7V3.2L8.7 6V8L11.7 10.8V13.4H0.3V10.8L3.3 8V6L0.3 3.2Z" fill="#ebebeb"/></svg>
<svg class="b" style="left:399.40px;top:453.27px;" width="6.2" height="6.8" viewBox="0 0 12 14"><path d="M0.3 0.6H11.7V3.2L8.7 6V8L11.7 10.8V13.4H0.3V10.8L3.3 8V6L0.3 3.2Z" fill="#ebebeb"/></svg>
<svg class="b" style="left:369.30px;top:475.93px;" width="6.2" height="6.8" viewBox="0 0 12 14"><path d="M0.3 0.6H11.7V3.2L8.7 6V8L11.7 10.8V13.4H0.3V10.8L3.3 8V6L0.3 3.2Z" fill="#ebebeb"/></svg>
<svg class="b" style="left:399.40px;top:475.93px;" width="6.2" height="6.8" viewBox="0 0 12 14"><path d="M0.3 0.6H11.7V3.2L8.7 6V8L11.7 10.8V13.4H0.3V10.8L3.3 8V6L0.3 3.2Z" fill="#ebebeb"/></svg>
<svg class="b" style="left:369.30px;top:487.25px;" width="6.2" height="6.8" viewBox="0 0 12 14"><path d="M0.3 0.6H11.7V3.2L8.7 6V8L11.7 10.8V13.4H0.3V10.8L3.3 8V6L0.3 3.2Z" fill="#ebebeb"/></svg>
<svg class="b" style="left:426.10px;top:487.25px;" width="6.2" height="6.8" viewBox="0 0 12 14"><path d="M0.3 0.6H11.7V3.2L8.7 6V8L11.7 10.8V13.4H0.3V10.8L3.3 8V6L0.3 3.2Z" fill="#ebebeb"/></svg>
<div class="b" style="left:1005.60px;top:151.00px;width:1.00px;height:356.40px;background:#4a90e0;"></div>
<div class="b" style="left:368.20px;top:36.00px;width:655.80px;height:37.30px;background:#232325;"></div>
<div class="b" style="left:366.50px;top:60.80px;width:1.10px;height:11.40px;background:#363638;"></div>
<div class="b" style="left:367.60px;top:60.00px;width:1.50px;height:13.00px;background:#1b1b1c;"></div>
<div class="b" style="left:372.00px;top:40.60px;width:635.00px;height:5.80px;background:#8b8b8b;border-radius:1px;"></div>
<div class="b" style="left:368.20px;top:40.40px;width:4.80px;height:6.20px;background:#4a97f0;border-radius:2.4px;"></div>
<div class="b" style="left:1007.40px;top:40.50px;width:4.80px;height:6.40px;background:#4a97f0;border-radius:0 3px 3px 0;"></div>
<div class="b" style="left:372.15px;top:56.20px;width:0.90px;height:3.00px;background:#8e8e8e;"></div>
<span class="t" style="left:365.40px;top:48.14px;font-size:7.6px;line-height:9.12px;color:#c8c8c8;transform:scaleX(0.8600);clip-path:inset(0 0 0 3.6px);">0:00s</span>
<div class="b" style="left:385.20px;top:54.00px;width:0.90px;height:0.90px;background:#484848;"></div>
<div class="b" style="left:418.50px;top:56.20px;width:0.90px;height:3.00px;background:#8e8e8e;"></div>
<span class="t" style="left:413.68px;top:48.14px;font-size:7.6px;line-height:9.12px;color:#c4c4c4;transform:scaleX(0.8600);">01s</span>
<div class="b" style="left:431.55px;top:54.00px;width:0.90px;height:0.90px;background:#484848;"></div>
<div class="b" style="left:464.85px;top:56.20px;width:0.90px;height:3.00px;background:#8e8e8e;"></div>
<span class="t" style="left:460.03px;top:48.14px;font-size:7.6px;line-height:9.12px;color:#c4c4c4;transform:scaleX(0.8600);">02s</span>
<div class="b" style="left:477.90px;top:54.00px;width:0.90px;height:0.90px;background:#484848;"></div>
<div class="b" style="left:511.20px;top:56.20px;width:0.90px;height:3.00px;background:#8e8e8e;"></div>
<span class="t" style="left:506.38px;top:48.14px;font-size:7.6px;line-height:9.12px;color:#c4c4c4;transform:scaleX(0.8600);">03s</span>
<div class="b" style="left:524.25px;top:54.00px;width:0.90px;height:0.90px;background:#484848;"></div>
<div class="b" style="left:557.55px;top:56.20px;width:0.90px;height:3.00px;background:#8e8e8e;"></div>
<span class="t" style="left:552.73px;top:48.14px;font-size:7.6px;line-height:9.12px;color:#c4c4c4;transform:scaleX(0.8600);">04s</span>
<div class="b" style="left:570.60px;top:54.00px;width:0.90px;height:0.90px;background:#484848;"></div>
<div class="b" style="left:603.90px;top:56.20px;width:0.90px;height:3.00px;background:#8e8e8e;"></div>
<span class="t" style="left:599.08px;top:48.14px;font-size:7.6px;line-height:9.12px;color:#c4c4c4;transform:scaleX(0.8600);">05s</span>
<div class="b" style="left:616.95px;top:54.00px;width:0.90px;height:0.90px;background:#484848;"></div>
<div class="b" style="left:650.25px;top:56.20px;width:0.90px;height:3.00px;background:#8e8e8e;"></div>
<span class="t" style="left:645.43px;top:48.14px;font-size:7.6px;line-height:9.12px;color:#c4c4c4;transform:scaleX(0.8600);">06s</span>
<div class="b" style="left:663.30px;top:54.00px;width:0.90px;height:0.90px;background:#484848;"></div>
<div class="b" style="left:696.60px;top:56.20px;width:0.90px;height:3.00px;background:#8e8e8e;"></div>
<span class="t" style="left:691.78px;top:48.14px;font-size:7.6px;line-height:9.12px;color:#c4c4c4;transform:scaleX(0.8600);">07s</span>
<div class="b" style="left:709.65px;top:54.00px;width:0.90px;height:0.90px;background:#484848;"></div>
<div class="b" style="left:742.95px;top:56.20px;width:0.90px;height:3.00px;background:#8e8e8e;"></div>
<span class="t" style="left:738.13px;top:48.14px;font-size:7.6px;line-height:9.12px;color:#c4c4c4;transform:scaleX(0.8600);">08s</span>
<div class="b" style="left:756.00px;top:54.00px;width:0.90px;height:0.90px;background:#484848;"></div>
<div class="b" style="left:789.30px;top:56.20px;width:0.90px;height:3.00px;background:#8e8e8e;"></div>
<span class="t" style="left:784.48px;top:48.14px;font-size:7.6px;line-height:9.12px;color:#c4c4c4;transform:scaleX(0.8600);">09s</span>
<div class="b" style="left:802.35px;top:54.00px;width:0.90px;height:0.90px;background:#484848;"></div>
<div class="b" style="left:835.65px;top:56.20px;width:0.90px;height:3.00px;background:#8e8e8e;"></div>
<span class="t" style="left:830.83px;top:48.14px;font-size:7.6px;line-height:9.12px;color:#c4c4c4;transform:scaleX(0.8600);">10s</span>
<div class="b" style="left:848.70px;top:54.00px;width:0.90px;height:0.90px;background:#484848;"></div>
<div class="b" style="left:882.00px;top:56.20px;width:0.90px;height:3.00px;background:#8e8e8e;"></div>
<span class="t" style="left:877.42px;top:48.14px;font-size:7.6px;line-height:9.12px;color:#c4c4c4;transform:scaleX(0.8600);">11s</span>
<div class="b" style="left:895.05px;top:54.00px;width:0.90px;height:0.90px;background:#484848;"></div>
<div class="b" style="left:928.35px;top:56.20px;width:0.90px;height:3.00px;background:#8e8e8e;"></div>
<span class="t" style="left:923.53px;top:48.14px;font-size:7.6px;line-height:9.12px;color:#c4c4c4;transform:scaleX(0.8600);">12s</span>
<div class="b" style="left:941.40px;top:54.00px;width:0.90px;height:0.90px;background:#484848;"></div>
<div class="b" style="left:974.70px;top:56.20px;width:0.90px;height:3.00px;background:#8e8e8e;"></div>
<span class="t" style="left:969.88px;top:48.14px;font-size:7.6px;line-height:9.12px;color:#c4c4c4;transform:scaleX(0.8600);">13s</span>
<div class="b" style="left:987.75px;top:54.00px;width:0.90px;height:0.90px;background:#484848;"></div>
<div class="b" style="left:372.40px;top:60.20px;width:634.40px;height:10.00px;background:#7e7e80;"></div>
<div class="b" style="left:369.00px;top:60.20px;width:4.60px;height:10.80px;background:#4a97f0;border-radius:2.2px 1px 1px 2.2px;"></div>
<div class="b" style="left:1007.60px;top:60.20px;width:4.80px;height:10.60px;background:#4a97f0;border-radius:0 2.4px 2.4px 0;"></div>
<div class="b" style="left:1006.40px;top:60.20px;width:0.90px;height:10.60px;background:#b8c8e8;"></div>
<div class="b" style="left:372.60px;top:71.30px;width:635.00px;height:2.10px;background:#2fd83c;"></div>
<div class="b" style="left:445.00px;top:60.90px;width:11.00px;height:7.20px;background:#f0f0f0;"></div>
<span class="t" style="left:449.00px;top:60.56px;font-size:7.4px;line-height:8.88px;color:#161616;transform:scaleX(0.9500);font-weight:700;">1</span>
<svg class="b" style="left:441.20px;top:65.20px" width="7.2" height="5.6" viewBox="0 0 9 10" preserveAspectRatio="none"><path d="M0.5 9.4L1.8 5Q4.5 0.2 7.2 5L8.5 9.4Z" fill="#f6f6f6" stroke="#3a3a3a" stroke-width="0.9"/></svg>
<div class="b" style="left:744.40px;top:60.90px;width:11.00px;height:7.20px;background:#f0f0f0;"></div>
<span class="t" style="left:748.40px;top:60.56px;font-size:7.4px;line-height:8.88px;color:#161616;transform:scaleX(0.9500);font-weight:700;">2</span>
<svg class="b" style="left:740.60px;top:65.20px" width="7.2" height="5.6" viewBox="0 0 9 10" preserveAspectRatio="none"><path d="M0.5 9.4L1.8 5Q4.5 0.2 7.2 5L8.5 9.4Z" fill="#f6f6f6" stroke="#3a3a3a" stroke-width="0.9"/></svg>
<svg class="b" style="left:1002.90px;top:49.90px" width="7.6" height="8.6" viewBox="0 0 10 10" preserveAspectRatio="none"><path d="M0.6 0.6H9.4V5.4L5 9.6L0.6 5.4Z" fill="#4a97f0"/><path d="M2.6 3.4H7.4L5 6.6Z" fill="#2a64b0"/></svg>
<div class="b" style="left:1011.80px;top:36.00px;width:12.20px;height:471.20px;background:#232325;"></div>
<svg class="b" style="left:1014.30px;top:61.50px" width="7.6" height="9.2" viewBox="0 0 10 11.2" preserveAspectRatio="none"><path d="M0.6 0.6H9.4V7L5 10.6L0.6 7Z" fill="#e6e6e6"/><path d="M2.4 4H7.6L5 7.4Z" fill="#9a9a9a"/></svg>
<svg class="b" style="left:1012.40px;top:75.20px" width="9.6" height="8.2" viewBox="0 0 12.4 8.4" preserveAspectRatio="none"><path d="M4.6 0.8H11.6V7.6H4.6L0.8 4.2Z" fill="#e6e6e6"/><path d="M5.4 2.8L8.8 6" stroke="#232325" stroke-width="1.1"/><circle cx="3.4" cy="4.2" r="0.9" fill="#232325"/></svg>
<div class="b" style="left:1013.40px;top:263.00px;width:8.20px;height:243.60px;background:#3a3a3c;border-radius:4px;"></div>
<div class="b" style="left:368.20px;top:507.20px;width:70.00px;height:1.00px;background:#303032;"></div>
<svg class="b" style="left:371.90px;top:512.30px" width="5.4" height="3.4" viewBox="0 0 10 6.4" preserveAspectRatio="none"><path d="M0.4 6H9.6L6.4 1.2L4.6 3.2L3.6 2.4Z" fill="#e0e0e0"/></svg>
<div class="b" style="left:388.00px;top:513.40px;width:29.40px;height:0.90px;background:#4a4a4c;"></div>
<div class="b" style="left:385.4px;top:511px;width:3.4px;height:3.4px;border:1.2px solid #e0e0e0;border-radius:50%;background:#232325"></div>
<svg class="b" style="left:426.20px;top:510.90px" width="8.8" height="5" viewBox="0 0 15 8.4" preserveAspectRatio="none"><path d="M0.4 8H7L4.2 2.6Z M4.4 8H14.6L9.4 0.6Z" fill="#e6e6e6"/></svg>
</div></body></html>
